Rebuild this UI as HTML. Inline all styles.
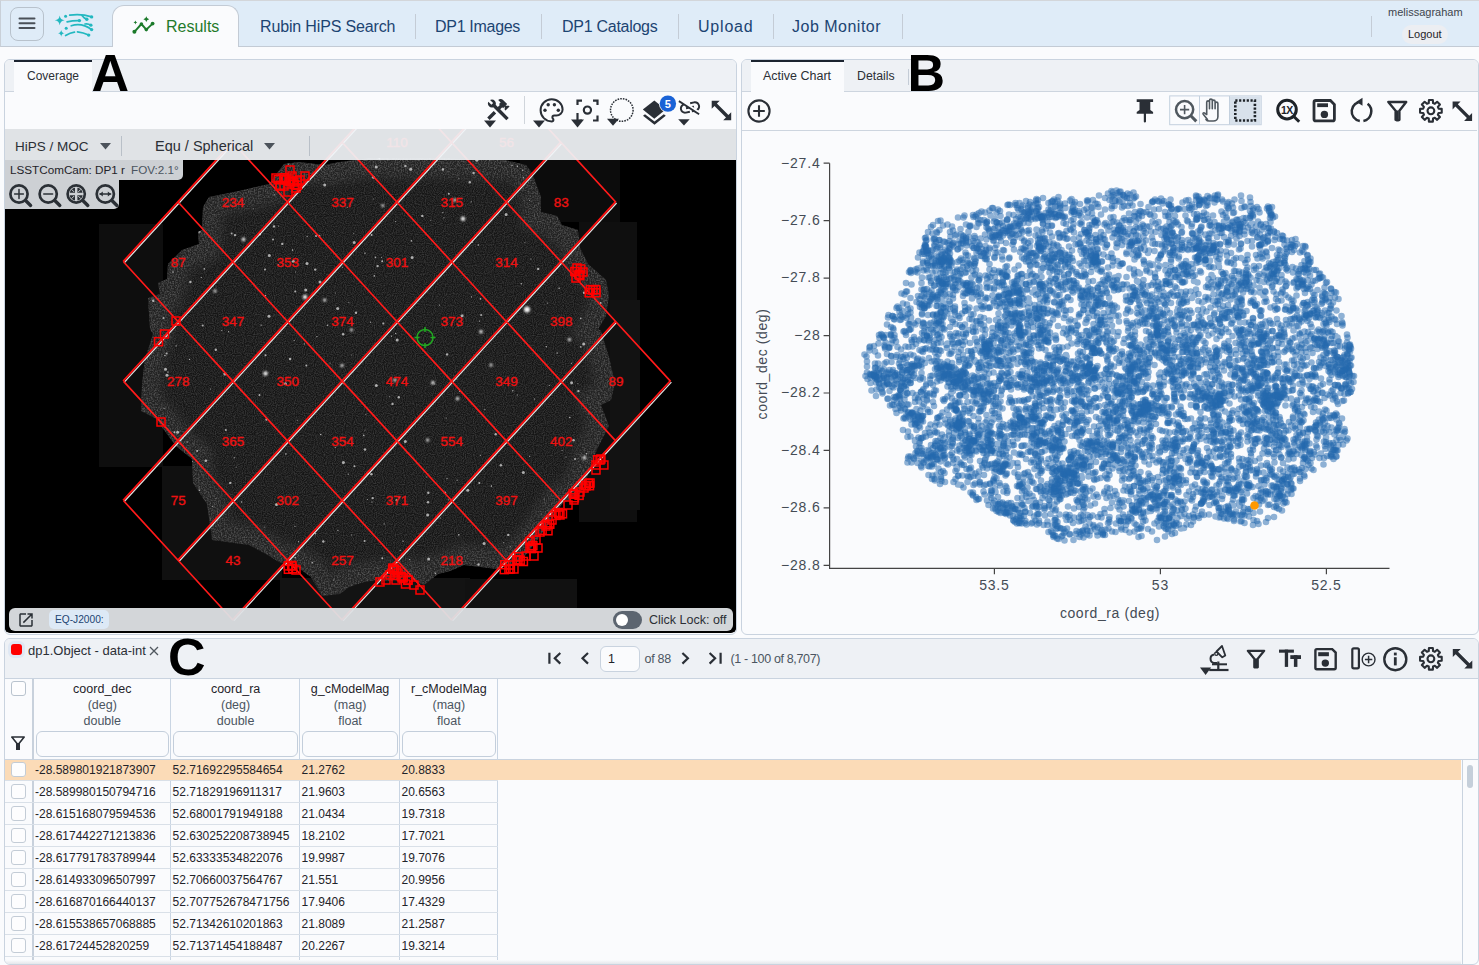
<!DOCTYPE html>
<html><head><meta charset="utf-8">
<style>
*{box-sizing:border-box}
html,body{margin:0;padding:0}
body{width:1479px;height:965px;position:relative;overflow:hidden;background:#fafbfd;font-family:"Liberation Sans",sans-serif;color:#222}
.a{position:absolute}
svg{display:block}
.tbtxt{font-size:16px;color:#1c4472;white-space:nowrap}
.sep{position:absolute;width:1px;background:#c4ccd6}
.panel{position:absolute;border:1px solid #c9d3df;border-radius:6px;background:#fafbfd;overflow:hidden}
.tabbar{position:absolute;left:0;top:0;right:0;height:32px;background:#eef1f5;border-bottom:1px solid #cdd5df}
.tab{position:absolute;top:0;height:32px;background:#fafbfd;border-top:2px solid #1c2430;font-size:13px;color:#2b2f35;white-space:nowrap}
.big{position:absolute;font-weight:bold;font-size:52px;color:#000;line-height:1}
.ico{position:absolute;fill:#2a2f36}
.cell{position:absolute;font-size:12px;color:#1f2329;white-space:nowrap}

</style></head><body>
<div class="a" style="left:0;top:0;width:1479px;height:47px;background:#dfecf8;border-top:1px solid #d3d6da;border-left:1px solid #c9d0d8;border-bottom:1px solid #c3cbd5"></div>
<div class="a" style="left:10px;top:7px;width:34px;height:34px;border:1px solid #b8c2cc;border-radius:8px"></div>
<svg class="a" style="left:18px;top:16px" width="18" height="14" viewBox="0 0 18 14"><g stroke="#4a5058" stroke-width="2" stroke-linecap="round"><line x1="1.5" y1="2.5" x2="16.5" y2="2.5"/><line x1="1.5" y1="7.2" x2="16.5" y2="7.2"/><line x1="1.5" y1="12" x2="16.5" y2="12"/></g></svg>
<!-- logo -->
<svg class="a" style="left:50px;top:8px" width="50" height="34" viewBox="50 8 50 34"><g fill="none" stroke="#22b8c0" stroke-width="1.7" stroke-linecap="round">
<path d="M69.7 15.1C76 14.2 84 14.3 91.6 16.9"/><path d="M82 15.4C83.5 17.5 85 18.6 86.8 19.2"/><path d="M67.1 21.8C71 20.9 75 20.5 79.4 20.6"/><path d="M71.2 25.8C78 23.6 85 24.8 91.6 29.6"/><path d="M85 24C87 23.5 89 24 90.9 25.2"/><path d="M65.6 35.5C68.5 33.8 71.5 32.6 74.5 32.2"/><path d="M77.5 31.8C81.5 32.2 85.5 33.5 88.7 35.1"/></g>
<g fill="#22b8c0"><circle cx="91.6" cy="16.9" r="1.7"/><circle cx="86.8" cy="19.2" r="1.7"/><circle cx="79.4" cy="20.6" r="1.7"/><circle cx="91.6" cy="29.6" r="1.7"/><circle cx="90.9" cy="25.2" r="1.6"/><circle cx="88.7" cy="35.1" r="1.7"/><circle cx="65.6" cy="16.3" r="1.5"/><circle cx="66.2" cy="28.2" r="1.5"/>
<path d="M59.70 15.40Q60.29 19.71 64.60 20.30Q60.29 20.89 59.70 25.20Q59.11 20.89 54.80 20.30Q59.11 19.71 59.70 15.40z"/><path d="M61.20 29.90Q61.61 32.89 64.60 33.30Q61.61 33.71 61.20 36.70Q60.79 33.71 57.80 33.30Q60.79 32.89 61.20 29.90z"/></g></svg>
<!-- Results tab -->
<div class="a" style="left:112px;top:5px;width:127px;height:42px;background:#fafbfd;border:1px solid #c3cbd5;border-bottom:none;border-radius:12px 12px 0 0"></div>
<svg class="a" style="left:128px;top:14px" width="30" height="22" viewBox="128 14 30 22"><path d="M134.4 31.8L141.4 24L146.3 29.6L152.6 23.6" fill="none" stroke="#1b7a2a" stroke-width="1.9" stroke-linejoin="round"/>
<g fill="#1b7a2a"><circle cx="134.4" cy="31.8" r="2"/><circle cx="141.4" cy="24" r="1.8"/><circle cx="146.3" cy="29.6" r="1.8"/><circle cx="152.6" cy="23.6" r="1.9"/><path d="M146.30 16.30Q146.65 18.85 149.20 19.20Q146.65 19.55 146.30 22.10Q145.95 19.55 143.40 19.20Q145.95 18.85 146.30 16.30z"/><path d="M135.40 20.60Q135.63 22.27 137.30 22.50Q135.63 22.73 135.40 24.40Q135.17 22.73 133.50 22.50Q135.17 22.27 135.40 20.60z"/></g></svg>
<div class="a tbtxt" style="left:166px;top:18px;color:#1f7a2a">Results</div>
<div class="a tbtxt" style="left:260px;top:18px;letter-spacing:-0.15px">Rubin HiPS Search</div>
<div class="sep" style="left:415px;top:14px;height:25px"></div>
<div class="a tbtxt" style="left:435px;top:18px;letter-spacing:-0.3px">DP1 Images</div>
<div class="sep" style="left:541px;top:14px;height:25px"></div>
<div class="a tbtxt" style="left:562px;top:18px;letter-spacing:-0.27px">DP1 Catalogs</div>
<div class="sep" style="left:678px;top:14px;height:25px"></div>
<div class="a tbtxt" style="left:698px;top:18px;letter-spacing:0.8px">Upload</div>
<div class="sep" style="left:773px;top:14px;height:25px"></div>
<div class="a tbtxt" style="left:792px;top:18px;letter-spacing:0.5px">Job Monitor</div>
<div class="sep" style="left:902px;top:14px;height:25px"></div>
<div class="sep" style="left:1371px;top:16px;height:21px"></div>
<div class="a" style="left:1388px;top:6px;font-size:11px;color:#3e454d">melissagraham</div>
<div class="a" style="left:1402px;top:25px;width:46px;height:19px;border-radius:10px;background:#eceef2"></div>
<div class="a" style="left:1408px;top:28px;font-size:11px;color:#1f2329">Logout</div>
<div class="panel" style="left:4px;top:59px;width:733px;height:576px">
 <div class="tabbar"></div>
 <div class="tab" style="left:9px;width:78px"><span class="a" style="left:13px;top:7px;font-size:12px">Coverage</span></div>
 <div class="a" style="left:0;top:69px;width:731px;height:504px;background:#000;border-radius:0 0 5px 5px;overflow:hidden"><svg class="a" style="left:0;top:0" width="731" height="504" viewBox="5 129 731 504"><defs><filter id="nz" x="0" y="0" width="100%" height="100%"><feTurbulence type="fractalNoise" baseFrequency="0.9" numOctaves="1" seed="4"/><feColorMatrix values="0 0 0 0 1  0 0 0 0 1  0 0 0 0 1  0 0 0 -2.2 1.45"/></filter><filter id="sb"><feGaussianBlur stdDeviation="0.35"/></filter><filter id="gb" x="-2" y="-2" width="5" height="5"><feGaussianBlur stdDeviation="1.1"/></filter><filter id="bl"><feGaussianBlur stdDeviation="5"/></filter><filter id="nz2" x="0" y="0" width="100%" height="100%"><feTurbulence type="fractalNoise" baseFrequency="0.7" numOctaves="2" seed="9"/><feColorMatrix values="0 0 0 0 1  0 0 0 0 1  0 0 0 0 1  0 0 0 -2.5 1.55"/></filter><clipPath id="fc"><path d="M203 207 209 197 219 195 239 191 269 184 284 164 299 162 324 165 340 162 370 158 445 158 470 160 505 160 526 165 532 173 541 197 541 212 557 216 562 225 578 230 580 248 588 264 606 280 609 295 606 316 598 329 601 331 609 357 615 383 611 400 601 405 609 426 598 447 593 460 588 475 580 494 562 504 541 535 521 561 497 569 464 565 450 571 438 574 424 585 409 578 391 581 377 580 364 582 349 587 340 594 322 596 311 577 300 569 279 562 266 554 249 545 212 540 210 525 207 504 193 483 192 459 176 446 155 418 141 411 142 384 145 359 153 334 150 329 148 298 160 294 158 283 167 279 168 264 182 250 199 244 198 232 202 230z"/></clipPath></defs><rect x="5" y="129" width="731" height="503" fill="#000"/><rect x="99" y="224" width="64" height="243" fill="#0e0e0e"/><rect x="162" y="466" width="120" height="114" fill="#101010"/><rect x="280" y="578" width="190" height="30" fill="#131313"/><rect x="465" y="579" width="112" height="29" fill="#111"/><rect x="579" y="222" width="58" height="300" fill="#0f0f0f"/><rect x="520" y="160" width="100" height="62" fill="#0c0c0c"/><rect x="610" y="300" width="30" height="210" fill="#121212"/><path d="M203 207 209 197 219 195 239 191 269 184 284 164 299 162 324 165 340 162 370 158 445 158 470 160 505 160 526 165 532 173 541 197 541 212 557 216 562 225 578 230 580 248 588 264 606 280 609 295 606 316 598 329 601 331 609 357 615 383 611 400 601 405 609 426 598 447 593 460 588 475 580 494 562 504 541 535 521 561 497 569 464 565 450 571 438 574 424 585 409 578 391 581 377 580 364 582 349 587 340 594 322 596 311 577 300 569 279 562 266 554 249 545 212 540 210 525 207 504 193 483 192 459 176 446 155 418 141 411 142 384 145 359 153 334 150 329 148 298 160 294 158 283 167 279 168 264 182 250 199 244 198 232 202 230z" fill="#151515"/><mask id="bm"><path d="M203 207 209 197 219 195 239 191 269 184 284 164 299 162 324 165 340 162 370 158 445 158 470 160 505 160 526 165 532 173 541 197 541 212 557 216 562 225 578 230 580 248 588 264 606 280 609 295 606 316 598 329 601 331 609 357 615 383 611 400 601 405 609 426 598 447 593 460 588 475 580 494 562 504 541 535 521 561 497 569 464 565 450 571 438 574 424 585 409 578 391 581 377 580 364 582 349 587 340 594 322 596 311 577 300 569 279 562 266 554 249 545 212 540 210 525 207 504 193 483 192 459 176 446 155 418 141 411 142 384 145 359 153 334 150 329 148 298 160 294 158 283 167 279 168 264 182 250 199 244 198 232 202 230z" fill="none" stroke="#fff" stroke-width="40" filter="url(#bl)"/></mask><g clip-path="url(#fc)"><rect x="5" y="129" width="731" height="503" filter="url(#nz)" opacity="0.16"/><g mask="url(#bm)"><rect x="5" y="129" width="731" height="503" fill="#222"/><rect x="5" y="129" width="731" height="503" filter="url(#nz2)" opacity="0.22"/></g></g><g fill="#ddd" clip-path="url(#fc)" opacity="0.75" filter="url(#sb)"><circle cx="259.5" cy="394.9" r="1.0"/><circle cx="571.3" cy="363.3" r="0.6"/><circle cx="428.6" cy="559.0" r="1.5"/><circle cx="269.3" cy="255.4" r="1.5"/><circle cx="398.8" cy="397.3" r="1.2"/><circle cx="444.0" cy="217.8" r="0.6"/><circle cx="549.3" cy="385.4" r="0.5"/><circle cx="458.8" cy="178.8" r="0.5"/><circle cx="288.6" cy="164.0" r="0.8"/><circle cx="367.5" cy="473.5" r="1.2"/><circle cx="478.5" cy="564.5" r="1.2"/><circle cx="484.9" cy="409.6" r="0.6"/><circle cx="554.3" cy="193.9" r="0.6"/><circle cx="377.6" cy="266.1" r="1.2"/><circle cx="508.3" cy="534.9" r="1.2"/><circle cx="383.3" cy="323.6" r="1.0"/><circle cx="395.7" cy="333.4" r="0.7"/><circle cx="565.9" cy="456.9" r="0.5"/><circle cx="543.9" cy="595.9" r="0.6"/><circle cx="471.4" cy="296.9" r="0.6"/><circle cx="478.4" cy="245.0" r="0.8"/><circle cx="281.1" cy="178.6" r="1.5"/><circle cx="190.7" cy="510.3" r="1.2"/><circle cx="562.7" cy="159.1" r="1.2"/><circle cx="503.6" cy="542.7" r="0.5"/><circle cx="428.3" cy="492.7" r="1.2"/><circle cx="480.5" cy="298.9" r="0.8"/><circle cx="382.5" cy="599.3" r="0.8"/><circle cx="153.3" cy="198.7" r="0.5"/><circle cx="586.5" cy="587.1" r="0.8"/><circle cx="430.8" cy="220.3" r="0.5"/><circle cx="600.7" cy="302.9" r="1.0"/><circle cx="591.0" cy="553.5" r="1.2"/><circle cx="323.3" cy="541.5" r="1.2"/><circle cx="446.2" cy="418.0" r="0.6"/><circle cx="435.3" cy="573.3" r="0.8"/><circle cx="348.3" cy="474.1" r="0.7"/><circle cx="580.8" cy="346.9" r="0.8"/><circle cx="389.7" cy="396.8" r="0.5"/><circle cx="512.7" cy="594.4" r="1.0"/><circle cx="159.2" cy="427.1" r="0.6"/><circle cx="177.6" cy="432.3" r="1.5"/><circle cx="312.3" cy="562.8" r="0.8"/><circle cx="489.5" cy="160.0" r="0.5"/><circle cx="589.2" cy="159.6" r="1.0"/><circle cx="265.5" cy="355.3" r="1.0"/><circle cx="231.6" cy="233.4" r="1.0"/><circle cx="538.2" cy="268.9" r="1.2"/><circle cx="198.2" cy="515.9" r="0.6"/><circle cx="292.6" cy="250.1" r="0.8"/><circle cx="259.8" cy="234.3" r="1.2"/><circle cx="448.8" cy="193.7" r="1.0"/><circle cx="586.6" cy="453.7" r="0.7"/><circle cx="351.7" cy="535.0" r="0.6"/><circle cx="186.8" cy="483.9" r="0.7"/><circle cx="557.1" cy="353.0" r="0.7"/><circle cx="512.0" cy="165.3" r="0.7"/><circle cx="295.0" cy="526.3" r="0.6"/><circle cx="547.3" cy="303.0" r="0.6"/><circle cx="520.9" cy="305.4" r="0.6"/><circle cx="343.8" cy="383.3" r="0.8"/><circle cx="363.8" cy="435.4" r="0.8"/><circle cx="343.1" cy="334.3" r="1.2"/><circle cx="221.8" cy="152.1" r="1.2"/><circle cx="407.1" cy="593.6" r="0.7"/><circle cx="164.9" cy="355.5" r="0.8"/><circle cx="400.2" cy="550.4" r="0.6"/><circle cx="544.7" cy="586.9" r="0.6"/><circle cx="522.7" cy="170.3" r="0.7"/><circle cx="562.4" cy="554.9" r="0.5"/><circle cx="156.0" cy="485.4" r="0.6"/><circle cx="381.5" cy="257.6" r="0.5"/><circle cx="391.5" cy="336.2" r="0.6"/><circle cx="307.0" cy="263.6" r="1.5"/><circle cx="523.3" cy="177.6" r="0.7"/><circle cx="240.8" cy="390.6" r="0.6"/><circle cx="228.8" cy="506.3" r="0.6"/><circle cx="528.8" cy="153.4" r="1.2"/><circle cx="173.0" cy="272.1" r="0.8"/><circle cx="434.3" cy="383.9" r="0.5"/><circle cx="367.5" cy="499.4" r="0.5"/><circle cx="544.2" cy="498.9" r="0.5"/><circle cx="207.3" cy="180.8" r="0.5"/><circle cx="543.0" cy="188.8" r="1.5"/><circle cx="295.3" cy="291.6" r="1.0"/><circle cx="327.5" cy="325.3" r="0.8"/><circle cx="316.0" cy="236.0" r="1.0"/><circle cx="347.2" cy="207.4" r="0.5"/><circle cx="479.4" cy="321.1" r="0.6"/><circle cx="410.7" cy="169.3" r="1.5"/><circle cx="428.0" cy="502.2" r="1.2"/><circle cx="442.9" cy="169.5" r="1.2"/><circle cx="174.4" cy="432.3" r="1.0"/><circle cx="343.4" cy="462.4" r="1.5"/><circle cx="158.2" cy="248.4" r="0.8"/><circle cx="469.8" cy="182.2" r="1.2"/><circle cx="253.2" cy="208.7" r="0.5"/><circle cx="580.8" cy="318.4" r="0.8"/><circle cx="205.9" cy="460.7" r="1.2"/><circle cx="457.1" cy="480.2" r="0.6"/><circle cx="523.3" cy="472.5" r="1.5"/><circle cx="216.0" cy="498.4" r="0.5"/><circle cx="392.5" cy="403.9" r="1.2"/><circle cx="232.4" cy="160.6" r="0.6"/><circle cx="161.7" cy="201.8" r="1.5"/><circle cx="534.6" cy="578.6" r="0.8"/><circle cx="517.4" cy="166.3" r="0.7"/><circle cx="199.1" cy="487.0" r="0.5"/><circle cx="403.1" cy="541.2" r="0.6"/><circle cx="530.9" cy="259.0" r="0.6"/><circle cx="447.1" cy="354.4" r="1.2"/><circle cx="266.3" cy="419.8" r="1.0"/><circle cx="406.1" cy="584.8" r="1.2"/><circle cx="380.1" cy="587.9" r="1.2"/><circle cx="538.1" cy="585.2" r="1.2"/><circle cx="467.8" cy="490.3" r="1.5"/><circle cx="221.8" cy="330.5" r="0.6"/><circle cx="224.8" cy="374.1" r="1.5"/><circle cx="571.6" cy="382.8" r="1.5"/><circle cx="419.8" cy="536.1" r="0.6"/><circle cx="273.0" cy="239.6" r="1.0"/><circle cx="580.0" cy="533.2" r="0.8"/><circle cx="458.8" cy="534.9" r="0.8"/><circle cx="559.1" cy="288.3" r="0.8"/><circle cx="370.6" cy="322.2" r="0.6"/><circle cx="412.1" cy="257.5" r="1.5"/><circle cx="506.1" cy="214.6" r="1.5"/><circle cx="472.7" cy="242.6" r="0.5"/><circle cx="371.4" cy="474.3" r="1.2"/><circle cx="510.2" cy="546.8" r="0.5"/><circle cx="365.0" cy="253.3" r="0.7"/><circle cx="448.2" cy="499.8" r="0.6"/><circle cx="591.0" cy="534.2" r="0.7"/><circle cx="559.5" cy="499.1" r="0.6"/><circle cx="236.1" cy="467.1" r="0.5"/><circle cx="563.9" cy="264.8" r="0.5"/><circle cx="294.2" cy="340.5" r="0.6"/><circle cx="204.3" cy="268.9" r="0.8"/><circle cx="166.6" cy="353.6" r="1.0"/><circle cx="153.2" cy="300.7" r="1.2"/><circle cx="324.7" cy="185.1" r="1.5"/><circle cx="329.8" cy="395.0" r="0.6"/><circle cx="556.3" cy="184.3" r="1.2"/><circle cx="201.8" cy="549.2" r="0.8"/><circle cx="194.6" cy="573.6" r="1.0"/><circle cx="462.1" cy="315.8" r="1.5"/><circle cx="285.9" cy="454.1" r="0.8"/><circle cx="199.3" cy="575.0" r="1.0"/><circle cx="459.5" cy="391.3" r="0.6"/><circle cx="456.8" cy="378.9" r="0.5"/><circle cx="480.3" cy="455.3" r="0.6"/><circle cx="447.1" cy="478.6" r="0.6"/><circle cx="232.4" cy="550.5" r="1.5"/><circle cx="206.6" cy="569.3" r="0.6"/><circle cx="573.6" cy="440.2" r="1.2"/><circle cx="405.3" cy="441.4" r="1.5"/><circle cx="371.9" cy="502.0" r="0.6"/><circle cx="199.4" cy="231.6" r="1.2"/><circle cx="315.2" cy="269.6" r="1.2"/><circle cx="174.6" cy="211.4" r="1.5"/><circle cx="382.2" cy="261.2" r="1.0"/><circle cx="552.6" cy="575.3" r="1.5"/><circle cx="399.1" cy="497.3" r="1.0"/><circle cx="379.1" cy="598.0" r="0.6"/><circle cx="274.4" cy="194.8" r="0.6"/><circle cx="409.6" cy="559.5" r="0.6"/><circle cx="235.0" cy="235.1" r="1.2"/><circle cx="458.3" cy="326.0" r="0.6"/><circle cx="422.3" cy="215.9" r="1.2"/><circle cx="517.2" cy="395.1" r="0.6"/><circle cx="411.4" cy="240.9" r="0.8"/><circle cx="320.0" cy="281.9" r="1.5"/><circle cx="560.0" cy="577.2" r="1.2"/><circle cx="295.3" cy="557.8" r="0.8"/><circle cx="441.5" cy="589.6" r="0.8"/><circle cx="562.0" cy="450.4" r="0.5"/><circle cx="426.6" cy="477.1" r="0.5"/><circle cx="199.4" cy="490.2" r="0.7"/><circle cx="376.3" cy="385.6" r="1.5"/><circle cx="241.5" cy="502.0" r="0.7"/><circle cx="167.0" cy="375.2" r="1.5"/><circle cx="201.3" cy="277.5" r="0.6"/><circle cx="212.4" cy="506.6" r="0.5"/><circle cx="161.7" cy="428.3" r="0.6"/><circle cx="379.4" cy="158.5" r="1.0"/><circle cx="298.6" cy="541.7" r="0.6"/><circle cx="187.0" cy="527.6" r="0.5"/><circle cx="479.3" cy="482.9" r="1.0"/><circle cx="609.0" cy="242.3" r="0.6"/><circle cx="546.3" cy="346.7" r="0.7"/><circle cx="373.1" cy="199.1" r="0.5"/><circle cx="337.9" cy="530.4" r="0.6"/><circle cx="330.1" cy="363.0" r="0.6"/><circle cx="397.2" cy="340.0" r="1.5"/><circle cx="290.1" cy="359.0" r="1.2"/><circle cx="351.7" cy="354.9" r="0.5"/><circle cx="481.1" cy="315.1" r="1.0"/><circle cx="356.0" cy="312.7" r="1.2"/><circle cx="253.0" cy="151.2" r="0.7"/><circle cx="269.0" cy="316.3" r="1.5"/><circle cx="395.6" cy="221.6" r="0.5"/><circle cx="228.6" cy="331.7" r="0.6"/><circle cx="442.9" cy="212.7" r="0.6"/><circle cx="353.7" cy="233.2" r="0.5"/><circle cx="335.4" cy="293.0" r="0.5"/><circle cx="473.6" cy="173.0" r="1.2"/><circle cx="168.0" cy="372.0" r="0.7"/><circle cx="261.1" cy="325.1" r="0.7"/><circle cx="225.8" cy="430.1" r="1.0"/><circle cx="569.8" cy="417.5" r="0.8"/><circle cx="276.5" cy="504.5" r="1.5"/><circle cx="513.1" cy="582.7" r="1.5"/><circle cx="265.0" cy="269.6" r="1.0"/><circle cx="439.4" cy="305.1" r="0.6"/><circle cx="176.1" cy="345.9" r="0.6"/><circle cx="422.4" cy="151.6" r="0.5"/><circle cx="463.2" cy="158.6" r="0.5"/><circle cx="371.6" cy="235.1" r="1.0"/><circle cx="242.3" cy="588.2" r="1.5"/><circle cx="306.4" cy="365.4" r="1.0"/><circle cx="582.4" cy="165.4" r="0.8"/><circle cx="495.7" cy="434.2" r="1.2"/><circle cx="190.4" cy="282.0" r="1.2"/><circle cx="202.7" cy="325.4" r="1.0"/><circle cx="396.8" cy="500.3" r="1.2"/><circle cx="230.3" cy="482.9" r="1.2"/><circle cx="534.4" cy="399.0" r="0.6"/><circle cx="316.9" cy="336.6" r="0.7"/><circle cx="354.5" cy="466.2" r="1.0"/><circle cx="274.0" cy="226.4" r="1.2"/><circle cx="586.7" cy="169.2" r="0.6"/><circle cx="476.9" cy="160.3" r="1.5"/><circle cx="192.3" cy="461.3" r="0.6"/><circle cx="297.2" cy="420.3" r="0.5"/><circle cx="554.1" cy="542.5" r="1.5"/><circle cx="364.6" cy="540.9" r="1.0"/><circle cx="608.6" cy="150.7" r="0.7"/><circle cx="333.7" cy="580.1" r="0.6"/><circle cx="305.7" cy="290.1" r="1.5"/><circle cx="187.2" cy="442.1" r="0.7"/><circle cx="466.6" cy="589.9" r="0.6"/><circle cx="419.4" cy="155.2" r="0.7"/><circle cx="282.3" cy="243.9" r="1.2"/><circle cx="382.3" cy="558.2" r="1.0"/><circle cx="512.8" cy="390.8" r="0.7"/><circle cx="365.0" cy="430.1" r="0.5"/><circle cx="529.7" cy="200.6" r="0.5"/><circle cx="545.1" cy="195.6" r="0.8"/><circle cx="189.5" cy="359.4" r="0.7"/><circle cx="529.7" cy="456.3" r="0.6"/><circle cx="445.2" cy="492.6" r="1.0"/><circle cx="335.3" cy="447.5" r="0.6"/><circle cx="284.3" cy="575.3" r="1.5"/><circle cx="524.8" cy="242.7" r="0.5"/><circle cx="363.5" cy="477.6" r="0.6"/><circle cx="307.1" cy="236.4" r="0.6"/><circle cx="575.0" cy="458.9" r="1.0"/><circle cx="344.5" cy="441.8" r="0.7"/><circle cx="264.9" cy="527.1" r="0.5"/><circle cx="304.2" cy="343.9" r="0.6"/><circle cx="265.4" cy="295.5" r="0.7"/><circle cx="484.1" cy="543.6" r="1.5"/><circle cx="578.4" cy="391.1" r="1.2"/><circle cx="319.2" cy="236.0" r="1.2"/><circle cx="372.7" cy="498.1" r="1.2"/><circle cx="365.9" cy="414.4" r="0.5"/><circle cx="284.3" cy="570.4" r="0.6"/><circle cx="560.5" cy="162.7" r="0.6"/><circle cx="285.4" cy="383.8" r="1.5"/><circle cx="168.7" cy="485.3" r="0.8"/><circle cx="376.2" cy="166.9" r="1.5"/><circle cx="491.4" cy="486.1" r="0.8"/><circle cx="215.8" cy="349.8" r="1.2"/><circle cx="354.2" cy="242.5" r="1.5"/><circle cx="500.9" cy="465.2" r="1.2"/><circle cx="600.6" cy="544.3" r="1.0"/><circle cx="583.7" cy="344.1" r="1.5"/><circle cx="368.1" cy="599.4" r="0.7"/><circle cx="315.5" cy="533.7" r="0.8"/><circle cx="163.5" cy="318.1" r="1.0"/><circle cx="521.3" cy="283.8" r="0.7"/><circle cx="577.9" cy="383.8" r="0.5"/><circle cx="210.5" cy="388.9" r="0.5"/><circle cx="226.2" cy="172.6" r="0.7"/><circle cx="602.5" cy="506.9" r="1.0"/><circle cx="600.5" cy="503.5" r="0.5"/><circle cx="375.5" cy="257.4" r="0.8"/><circle cx="348.9" cy="302.2" r="0.5"/><circle cx="427.6" cy="515.1" r="1.5"/><circle cx="293.3" cy="261.3" r="1.5"/><circle cx="342.4" cy="267.2" r="0.5"/><circle cx="163.5" cy="166.8" r="0.6"/><circle cx="569.8" cy="513.9" r="0.7"/><circle cx="588.6" cy="484.6" r="1.2"/><circle cx="384.1" cy="523.9" r="0.6"/><circle cx="278.6" cy="225.9" r="0.5"/><circle cx="373.5" cy="177.2" r="1.5"/><circle cx="365.0" cy="449.5" r="1.2"/><circle cx="320.7" cy="434.5" r="0.8"/><circle cx="234.2" cy="457.7" r="0.6"/><circle cx="337.7" cy="308.4" r="1.5"/><circle cx="278.1" cy="265.0" r="0.8"/><circle cx="591.3" cy="219.9" r="1.0"/><circle cx="214.2" cy="167.0" r="1.5"/><circle cx="541.5" cy="522.4" r="0.8"/><circle cx="164.1" cy="408.5" r="0.6"/><circle cx="374.3" cy="275.9" r="0.8"/><circle cx="197.1" cy="450.9" r="1.0"/><circle cx="165.5" cy="369.2" r="1.5"/><circle cx="239.7" cy="564.3" r="0.6"/><circle cx="450.8" cy="573.7" r="1.2"/><circle cx="295.5" cy="271.9" r="0.5"/><circle cx="584.1" cy="292.8" r="1.2"/><circle cx="405.4" cy="166.0" r="1.2"/><circle cx="265.1" cy="591.1" r="0.6"/><circle cx="377.8" cy="580.6" r="0.6"/><circle cx="471.2" cy="201.8" r="0.6"/><circle cx="440.3" cy="518.0" r="0.5"/><circle cx="583.4" cy="588.5" r="0.6"/><circle cx="348.4" cy="592.8" r="1.5"/></g><g fill="#f4f4f4" filter="url(#gb)"><circle cx="305.0" cy="297.0" r="2.2"/><circle cx="324.6" cy="300.0" r="1.6"/><circle cx="265.5" cy="373.5" r="2.2"/><circle cx="342.0" cy="365.5" r="1.6"/><circle cx="351.5" cy="330.0" r="1.4"/><circle cx="527.0" cy="309.5" r="3.0"/><circle cx="481.0" cy="331.7" r="1.8"/><circle cx="457.5" cy="398.7" r="1.6"/><circle cx="432.9" cy="382.8" r="1.8"/><circle cx="427.6" cy="440.0" r="1.5"/><circle cx="569.4" cy="339.6" r="1.6"/><circle cx="584.4" cy="457.7" r="1.8"/><circle cx="491.0" cy="365.0" r="1.5"/><circle cx="463.0" cy="218.7" r="2.2"/><circle cx="382.8" cy="205.7" r="1.4"/><circle cx="243.5" cy="239.4" r="1.8"/><circle cx="215.0" cy="291.0" r="1.5"/><circle cx="455.0" cy="200.0" r="1.6"/><circle cx="395.0" cy="380.0" r="1.6"/></g><path d="M562.0 501.5L616.6 441.8M124.3 382.1L179.1 322.4M179.1 203.0L233.8 143.3M452.6 262.7L507.2 203.0M616.6 441.8L671.4 382.1M452.6 143.3L507.2 83.6M124.3 501.5L179.1 441.8M452.6 620.9L507.2 561.2M507.2 441.8L562.0 382.1M233.8 382.1L288.5 322.4M507.2 561.2L562.0 501.5M343.1 501.5L397.9 441.8M179.1 322.4L233.8 262.7M562.0 382.1L616.6 322.4M397.9 561.2L452.6 501.5M288.5 441.8L343.1 382.1M233.8 262.7L288.5 203.0M233.8 501.5L288.5 441.8M452.6 501.5L507.2 441.8M343.1 382.1L397.9 322.4M124.3 262.7L179.1 203.0M562.0 262.7L616.6 203.0M179.1 441.8L233.8 382.1M288.5 203.0L343.1 143.3M179.1 561.2L233.8 501.5M452.6 382.1L507.2 322.4M343.1 262.7L397.9 203.0M397.9 322.4L452.6 262.7M397.9 441.8L452.6 382.1M507.2 203.0L562.0 143.3M343.1 143.3L397.9 83.6M233.8 620.9L288.5 561.2M288.5 322.4L343.1 262.7M288.5 561.2L343.1 501.5M507.2 322.4L562.0 262.7M397.9 203.0L452.6 143.3M343.1 620.9L397.9 561.2" stroke="#f4f4f4" stroke-width="1.3" fill="none" opacity="0.9"/><path d="M560.8 500.4L615.4 440.7M123.1 381.0L177.9 321.3M177.9 201.9L232.6 142.2M451.4 261.6L506.1 201.9M615.4 440.7L670.1 381.0M451.4 142.2L506.1 82.5M123.1 500.4L177.9 440.7M451.4 619.8L506.1 560.1M506.1 440.7L560.8 381.0M232.6 381.0L287.3 321.3M506.1 560.1L560.8 500.4M341.9 500.4L396.7 440.7M177.9 321.3L232.6 261.6M560.8 381.0L615.4 321.3M396.7 560.1L451.4 500.4M287.3 440.7L341.9 381.0M232.6 261.6L287.3 201.9M232.6 500.4L287.3 440.7M451.4 500.4L506.1 440.7M341.9 381.0L396.7 321.3M123.1 261.6L177.9 201.9M560.8 261.6L615.4 201.9M177.9 440.7L232.6 381.0M287.3 201.9L341.9 142.2M177.9 560.1L232.6 500.4M451.4 381.0L506.1 321.3M341.9 261.6L396.7 201.9M396.7 321.3L451.4 261.6M396.7 440.7L451.4 381.0M506.1 201.9L560.8 142.2M341.9 142.2L396.7 82.5M232.6 619.8L287.3 560.1M287.3 321.3L341.9 261.6M287.3 560.1L341.9 500.4M506.1 321.3L560.8 261.6M396.7 201.9L451.4 142.2M341.9 619.8L396.7 560.1" stroke="#ff1010" stroke-width="1.8" fill="none"/><path d="M397.1 321.7L451.8 381.4M506.5 82.9L561.2 142.6M287.7 202.3L342.4 262.0M506.5 321.7L561.2 381.4M342.4 262.0L397.1 321.7M233.0 142.6L287.7 202.3M178.3 560.5L233.0 620.2M451.8 381.4L506.5 441.1M561.2 142.6L615.9 202.3M451.8 262.0L506.5 321.7M397.1 441.1L451.8 500.8M615.9 321.7L670.6 381.4M287.7 321.7L342.4 381.4M397.1 82.9L451.8 142.6M506.5 202.3L561.2 262.0M123.6 500.8L178.3 560.5M451.8 142.6L506.5 202.3M287.7 560.5L342.4 620.2M178.3 321.7L233.0 381.4M123.6 381.4L178.3 441.1M397.1 560.5L451.8 620.2M397.1 202.3L451.8 262.0M233.0 262.0L287.7 321.7M287.7 441.1L342.4 500.8M342.4 381.4L397.1 441.1M178.3 202.3L233.0 262.0M233.0 500.8L287.7 560.5M451.8 500.8L506.5 560.5M506.5 441.1L561.2 500.8M123.6 262.0L178.3 321.7M233.0 381.4L287.7 441.1M561.2 262.0L615.9 321.7M342.4 500.8L397.1 560.5M178.3 441.1L233.0 500.8M561.2 381.4L615.9 441.1M342.4 142.6L397.1 202.3" stroke="#ff1a1a" stroke-width="1.7" fill="none"/><g font-family="Liberation Sans" font-size="13.5" fill="#ee1111" stroke="#ee1111" stroke-width="0.35" text-anchor="middle"><text x="233.0" y="206.9">234</text><text x="342.4" y="206.9">337</text><text x="451.8" y="206.9">315</text><text x="561.2" y="206.9">83</text><text x="178.3" y="266.6">87</text><text x="287.7" y="266.6">353</text><text x="397.1" y="266.6">301</text><text x="506.5" y="266.6">314</text><text x="233.0" y="326.3">347</text><text x="342.4" y="326.3">374</text><text x="451.8" y="326.3">373</text><text x="561.2" y="326.3">398</text><text x="178.3" y="386.0">278</text><text x="287.7" y="386.0">350</text><text x="397.1" y="386.0">474</text><text x="506.5" y="386.0">349</text><text x="615.9" y="386.0">89</text><text x="233.0" y="445.7">365</text><text x="342.4" y="445.7">354</text><text x="451.8" y="445.7">554</text><text x="561.2" y="445.7">402</text><text x="178.3" y="505.4">75</text><text x="287.7" y="505.4">302</text><text x="397.1" y="505.4">371</text><text x="506.5" y="505.4">397</text><text x="233.0" y="565.1">43</text><text x="342.4" y="565.1">257</text><text x="451.8" y="565.1">218</text><text x="397.1" y="147.2">110</text><text x="506.5" y="147.2">56</text></g><g fill="none" stroke="#f00" stroke-width="1.5"><rect x="282.0" y="176.0" width="8" height="8"/><rect x="288.0" y="172.0" width="8" height="8"/><rect x="276.0" y="182.0" width="8" height="8"/><rect x="292.0" y="184.0" width="8" height="8"/><rect x="284.0" y="188.0" width="8" height="8"/><rect x="296.0" y="176.0" width="8" height="8"/><rect x="272.0" y="174.0" width="8" height="8"/><rect x="286.0" y="166.0" width="8" height="8"/><rect x="301.0" y="172.0" width="8" height="8"/><rect x="280.0" y="182.0" width="8" height="8"/><rect x="573.0" y="264.0" width="8" height="8"/><rect x="579.0" y="268.0" width="8" height="8"/><rect x="589.0" y="286.0" width="8" height="8"/><rect x="572.0" y="274.0" width="8" height="8"/><rect x="172.0" y="317.0" width="8" height="8"/><rect x="160.5" y="330.0" width="8" height="8"/><rect x="154.5" y="337.7" width="8" height="8"/><rect x="157.0" y="418.0" width="8" height="8"/><rect x="288.0" y="562.0" width="8" height="8"/><rect x="292.0" y="566.0" width="8" height="8"/><rect x="596.0" y="456.0" width="8" height="8"/><rect x="592.0" y="466.0" width="8" height="8"/><rect x="586.0" y="479.0" width="8" height="8"/><rect x="580.0" y="484.0" width="8" height="8"/><rect x="576.0" y="488.0" width="8" height="8"/><rect x="570.0" y="496.0" width="8" height="8"/><rect x="564.0" y="501.0" width="8" height="8"/><rect x="556.0" y="511.0" width="8" height="8"/><rect x="548.0" y="516.0" width="8" height="8"/><rect x="542.0" y="522.0" width="8" height="8"/><rect x="536.0" y="528.0" width="8" height="8"/><rect x="532.0" y="536.0" width="8" height="8"/><rect x="526.0" y="544.0" width="8" height="8"/><rect x="534.0" y="544.0" width="8" height="8"/><rect x="522.0" y="552.0" width="8" height="8"/><rect x="514.0" y="556.0" width="8" height="8"/><rect x="506.0" y="561.0" width="8" height="8"/><rect x="510.0" y="565.0" width="8" height="8"/><rect x="530.0" y="552.0" width="8" height="8"/><rect x="389.0" y="564.0" width="8" height="8"/><rect x="394.0" y="569.0" width="8" height="8"/><rect x="386.0" y="571.0" width="8" height="8"/><rect x="398.0" y="574.0" width="8" height="8"/><rect x="392.0" y="576.0" width="8" height="8"/><rect x="382.0" y="576.0" width="8" height="8"/><rect x="404.0" y="576.0" width="8" height="8"/><rect x="410.0" y="581.0" width="8" height="8"/><rect x="416.0" y="586.0" width="8" height="8"/><rect x="376.0" y="578.0" width="8" height="8"/><rect x="285.0" y="175.9" width="8" height="8"/><rect x="286.4" y="177.5" width="8" height="8"/><rect x="285.9" y="177.4" width="8" height="8"/><rect x="280.2" y="173.7" width="8" height="8"/><rect x="293.5" y="181.2" width="8" height="8"/><rect x="293.2" y="176.9" width="8" height="8"/><rect x="289.8" y="178.0" width="8" height="8"/><rect x="290.4" y="180.6" width="8" height="8"/><rect x="274.1" y="175.7" width="8" height="8"/><rect x="276.2" y="181.3" width="8" height="8"/><rect x="280.1" y="175.3" width="8" height="8"/><rect x="280.4" y="175.1" width="8" height="8"/><rect x="596.9" y="455.0" width="8" height="8"/><rect x="592.0" y="461.0" width="8" height="8"/><rect x="593.7" y="455.7" width="8" height="8"/><rect x="599.9" y="461.0" width="8" height="8"/><rect x="582.3" y="481.7" width="8" height="8"/><rect x="584.3" y="479.4" width="8" height="8"/><rect x="581.6" y="481.5" width="8" height="8"/><rect x="585.5" y="481.7" width="8" height="8"/><rect x="575.1" y="491.4" width="8" height="8"/><rect x="570.9" y="490.3" width="8" height="8"/><rect x="569.2" y="489.5" width="8" height="8"/><rect x="570.4" y="493.8" width="8" height="8"/><rect x="552.0" y="511.4" width="8" height="8"/><rect x="554.7" y="508.5" width="8" height="8"/><rect x="558.5" y="509.8" width="8" height="8"/><rect x="554.5" y="509.8" width="8" height="8"/><rect x="543.6" y="520.5" width="8" height="8"/><rect x="545.8" y="520.2" width="8" height="8"/><rect x="544.0" y="526.8" width="8" height="8"/><rect x="538.1" y="526.3" width="8" height="8"/><rect x="528.9" y="541.6" width="8" height="8"/><rect x="526.1" y="537.4" width="8" height="8"/><rect x="527.4" y="544.6" width="8" height="8"/><rect x="527.6" y="543.0" width="8" height="8"/><rect x="519.4" y="557.5" width="8" height="8"/><rect x="514.8" y="552.8" width="8" height="8"/><rect x="516.2" y="556.2" width="8" height="8"/><rect x="512.9" y="556.0" width="8" height="8"/><rect x="506.4" y="564.9" width="8" height="8"/><rect x="500.3" y="565.6" width="8" height="8"/><rect x="500.7" y="560.7" width="8" height="8"/><rect x="504.9" y="565.3" width="8" height="8"/><rect x="390.7" y="571.4" width="8" height="8"/><rect x="392.4" y="566.5" width="8" height="8"/><rect x="390.5" y="565.4" width="8" height="8"/><rect x="388.6" y="565.2" width="8" height="8"/><rect x="401.5" y="580.0" width="8" height="8"/><rect x="397.3" y="572.4" width="8" height="8"/><rect x="403.9" y="576.3" width="8" height="8"/><rect x="399.2" y="573.9" width="8" height="8"/><rect x="288.8" y="564.6" width="8" height="8"/><rect x="287.6" y="561.4" width="8" height="8"/><rect x="284.4" y="565.3" width="8" height="8"/><rect x="284.3" y="561.9" width="8" height="8"/><rect x="576.7" y="265.0" width="8" height="8"/><rect x="575.9" y="271.6" width="8" height="8"/><rect x="575.0" y="270.3" width="8" height="8"/><rect x="570.9" y="267.5" width="8" height="8"/><rect x="585.2" y="288.8" width="8" height="8"/><rect x="586.4" y="285.6" width="8" height="8"/><rect x="592.0" y="288.8" width="8" height="8"/><rect x="591.8" y="285.6" width="8" height="8"/></g><g stroke="#22aa22" stroke-width="1.5" fill="none"><circle cx="425" cy="337.5" r="8"/><path d="M425 327v5M425 343v5M414.5 337.5h5M430.5 337.5h5"/></g></svg></div>
 <div class="a" style="left:0;top:69px;width:731px;height:31px;background:rgba(241,244,248,0.93)"></div>
 <div class="a" style="left:10px;top:79px;font-size:13.5px;color:#2b2f35">HiPS / MOC</div>
 <svg class="a" style="left:95px;top:83px" width="11" height="7"><path d="M0 0h11L5.5 6.5z" fill="#4c535b"/></svg>
 <div class="sep" style="left:116px;top:76px;height:20px;background:#b9c0c8"></div>
 <div class="a" style="left:150px;top:78px;font-size:14.5px;color:#2b2f35">Equ / Spherical</div>
 <svg class="a" style="left:259px;top:83px" width="11" height="7"><path d="M0 0h11L5.5 6.5z" fill="#4c535b"/></svg>
 <div class="sep" style="left:304px;top:76px;height:20px;background:#b9c0c8"></div>
 <!-- overlay info -->
 <div class="a" style="left:0;top:100px;width:178px;height:20px;background:#cdd0d4;border-radius:0 0 5px 0"></div>
 <div class="a" style="left:0;top:119px;width:114px;height:30px;background:#cdd0d4;border-radius:0 0 5px 0"></div>
 <div class="a" style="left:5px;top:103px;font-size:11.7px;color:#1f2329;white-space:nowrap">LSSTComCam: DP1 r</div>
 <div class="a" style="left:126px;top:103px;font-size:11.7px;color:#4a545f;white-space:nowrap">FOV:2.1&#176;</div>
 <svg class="a" style="left:3px;top:123px" width="112" height="26" viewBox="0 0 112 26"><g fill="none" stroke="#2b3036" stroke-width="2.7" stroke-linecap="round">
  <circle cx="11" cy="11" r="8.6"/><path d="M17.6 17.6l5 4.8" stroke-width="3.4"/><path d="M11 6.6v8.8M6.6 11h8.8" stroke-width="1.5"/>
  <circle cx="40.2" cy="11" r="8.6"/><path d="M46.8 17.6l5 4.8" stroke-width="3.4"/><path d="M35.8 11h8.8" stroke-width="1.6"/>
  <circle cx="68.2" cy="11" r="8.6"/><path d="M74.8 17.6l5 4.8" stroke-width="3.4"/>
  <circle cx="97.3" cy="11" r="8.6"/><path d="M103.9 17.6l5 4.8" stroke-width="3.4"/><path d="M92 11h10.6" stroke-width="1.6"/>
 </g><circle cx="68.2" cy="11" r="6.6" fill="#2b3036"/><path d="M68.2 4v14M61.2 11h14" stroke="#cdd0d4" stroke-width="2.4"/><path d="M63.5 6.3l2.6 2.6M72.9 6.3l-2.6 2.6M63.5 15.7l2.6-2.6M72.9 15.7l-2.6-2.6" stroke="#cdd0d4" stroke-width="1"/>
 <path d="M91.6 11l3.2-2.6v5.2zM103 11l-3.2-2.6v5.2z" fill="#2b3036"/></svg>
 <!-- bottom bar -->
 <div class="a" style="left:4px;top:548px;width:724px;height:23px;background:rgba(222,225,229,0.95);border-radius:6px"></div>
 <svg class="a" style="left:12px;top:551px" width="18" height="18" viewBox="0 0 24 24"><path fill="#2b3036" d="M19 19H5V5h7V3H5c-1.11 0-2 .9-2 2v14c0 1.1.89 2 2 2h14c1.1 0 2-.9 2-2v-7h-2v7zM14 3v2h3.59l-9.83 9.83 1.41 1.41L19 6.41V10h2V3h-7z"/></svg>
 <div class="a" style="left:44px;top:550px;width:60px;height:19px;background:#dde9f6;border-radius:5px"></div>
 <div class="a" style="left:50px;top:554px;font-size:10.2px;color:#1c4472">EQ-J2000:</div>
 <div class="a" style="left:608px;top:551px;width:29px;height:18px;background:#5c6570;border-radius:9px"></div>
 <div class="a" style="left:611px;top:554px;width:12px;height:12px;background:#fff;border-radius:6px"></div>
 <div class="a" style="left:644px;top:553px;font-size:12.5px;color:#2b2f35;white-space:nowrap">Click Lock: off</div>
 <!-- toolbar icons -->
 <svg class="a" style="left:0;top:32px" width="731" height="38" viewBox="5 92 731 38"><g fill="#2a2f36">
<path d="M484 120.5h12l-6 7z"/>
<g transform="translate(512 96) scale(-1.15 1.15)"><path d="M13.78 15.17l2.12-2.12 5.66 5.66-2.12 2.12zM17.5 10c1.93 0 3.5-1.57 3.5-3.5 0-.58-.16-1.12-.41-1.6l-2.7 2.7-1.49-1.49 2.7-2.7c-.48-.25-1.02-.41-1.6-.41C15.57 3 14 4.57 14 6.5c0 .41.08.8.21 1.16l-1.85 1.85-1.78-1.78.71-.71-1.41-1.41L12 3.49c-1.17-1.17-3.07-1.17-4.24 0L4.22 7.03l1.41 1.41H2.81l-.71.71 3.54 3.54.71-.71V9.15l1.41 1.41.71-.71 1.78 1.78-7.41 7.41 2.12 2.12L16.34 9.79c.36.13.75.21 1.16.21z"/></g></g>
<rect x="524" y="96" width="1" height="28" fill="#d0d5db"/>
<g fill="none" stroke="#2a2f36" stroke-width="2"><path d="M551.7 99.2c-6.2 0-11.1 5-11.1 11.1 0 6.1 4.9 11.1 11.1 11.1 1 0 1.7-.7 1.7-1.6 0-.5-.2-.9-.5-1.2-.3-.3-.5-.7-.5-1.2 0-1 .8-1.8 1.8-1.8h2.1c3.4 0 6.3-2.8 6.3-6.2 0-5.5-4.9-10.2-10.9-10.2z"/></g>
<g fill="#2a2f36"><circle cx="548.2" cy="104.8" r="1.7"/><circle cx="554.4" cy="104.8" r="1.7"/><circle cx="545" cy="110.2" r="1.7"/><circle cx="558.3" cy="110.2" r="1.7"/>
<path d="M533 120.5h12l-6 7z"/><path d="M571 119.5h13l-6.5 8z"/></g>
<g fill="none" stroke="#2a2f36" stroke-width="2.2"><path d="M577.5 105v-4.3h4.5M593 100.7h4.5v4.3M597.5 115.5v5h-4.5M582 120.5h-2.5"/><circle cx="587.4" cy="110.1" r="3.6"/><path d="M577.5 113v7"/></g>
<circle cx="621.8" cy="110" r="11.3" fill="none" stroke="#2a2f36" stroke-width="1.5" stroke-dasharray="1.6 1.1"/>
<path d="M607 118.7h12l-6 7z" fill="#2a2f36"/>
<g fill="#2a2f36"><path d="M642.8 109.6l11.5-9.2 11.3 9.2-11.3 9.2z"/><path d="M643 115.8l2-1.6 9.5 7.4 9.3-7.4 2 1.6-11.3 9z"/></g>
<circle cx="667.9" cy="103.6" r="9" fill="#fafbfd"/><circle cx="667.9" cy="103.6" r="8.2" fill="#1a63d6"/>
<text x="667.9" y="107.6" font-size="11" font-weight="bold" fill="#fff" text-anchor="middle" font-family="Liberation Sans">5</text>
<g transform="translate(690 107.5) rotate(-12) scale(1.02) translate(-12 -12)"><path fill="#2a2f36" d="M17 7h-4v1.9h4c1.71 0 3.1 1.39 3.1 3.1 0 1.43-.98 2.63-2.31 2.98l1.46 1.46C20.88 15.61 22 13.95 22 12c0-2.76-2.24-5-5-5zm-1 4h-2.19l2 2H16zM2 4.27l3.11 3.11C3.29 8.12 2 9.91 2 12c0 2.76 2.24 5 5 5h4v-1.9H7c-1.71 0-3.1-1.39-3.1-3.1 0-1.59 1.21-2.9 2.76-3.07L8.73 11H8v2h2.73L13 15.27V17h1.73l4.01 4L20 19.74 3.27 3 2 4.27z"/></g>
<path d="M678.2 119.2h11.5l-5.75 6.4z" fill="#2a2f36"/>
<g fill="#2a2f36"><path d="M711.7 100.8h8l-2.8 2.8 11.5 11.5 2.8-2.8v8h-8l2.8-2.8-11.5-11.5-2.8 2.8z"/></g>
</svg>

</div>
<div class="big" style="left:91.5px;top:47px">A</div>
<div class="panel" style="left:741px;top:59px;width:738px;height:576px">
 <div class="tabbar"></div>
 <div class="tab" style="left:9px;width:93px"><span class="a" style="left:12px;top:7px;font-size:12.5px">Active Chart</span></div>
 <span class="a" style="left:115px;top:9px;font-size:12.3px;color:#2b2f35">Details</span>
 <div class="sep" style="left:166px;top:9px;height:16px"></div>
 <div class="a" style="left:0;top:70px;width:735px;height:1px;background:#cdd5df"></div>
 <svg class="a" style="left:0;top:32px" width="735" height="38" viewBox="742 92 735 38">
<g fill="none" stroke="#2a2f36" stroke-width="2.1"><circle cx="759" cy="111" r="10.6"/><path d="M759 105.2v11.6M753.2 111h11.6"/></g>
<g fill="#2a2f36"><path d="M1136.7 99.3h16.4v2.6h-2.8v8l2.8 2.2v1.6h-7.1v8.1l-1.1 1-1.1-1v-8.1h-7.1v-1.6l2.8-2.2v-8h-2.8z"/></g>
<rect x="1169.7" y="95.9" width="91.5" height="28.8" fill="#fafbfd" stroke="#c3d0de" stroke-width="1"/>
<rect x="1229.5" y="96.4" width="31.2" height="27.8" fill="#d8e1eb"/>
<path d="M1199.5 96v28.5M1229.5 96v28.5" stroke="#c3d0de" stroke-width="1"/>
<g fill="none" stroke="#50585f" stroke-width="2.5"><circle cx="1184.6" cy="109.6" r="8.6"/><path d="M1190.8 115.8l5.5 5.6" stroke-width="3"/><path d="M1184.6 105v9.2M1180 109.6h9.2" stroke-width="1.6"/></g>
<path d="M1207.5 119.5l-4.3-5.3c-.6-.8.3-1.8 1.1-1.3l2.4 1.6V102.3c0-.8 .6-1.4 1.4-1.4s1.4.6 1.4 1.4v6.5-8.3c0-.8.6-1.4 1.4-1.4s1.4.6 1.4 1.4v8.3-7.3c0-.8.6-1.4 1.4-1.4s1.4.6 1.4 1.4v7.3-5.3c0-.8.6-1.4 1.4-1.4s1.4.6 1.4 1.4v13.2c0 2.6-2.1 4.3-4.6 4.3h-4.3c-1.4 0-2.3-.5-3-1.5z" fill="#fafbfd" stroke="#50585f" stroke-width="1.6" stroke-linejoin="round"/>
<rect x="1235.3" y="100.5" width="19.6" height="20" fill="none" stroke="#1e2328" stroke-width="2.6" stroke-dasharray="2.2 1.6"/>
<g fill="none" stroke="#1e2328" stroke-width="3"><circle cx="1287" cy="109.6" r="9.3"/><path d="M1293.6 116.2l5.6 5.6"/></g>
<text x="1286.8" y="113.6" font-size="10.5" font-weight="bold" fill="#1e2328" text-anchor="middle" font-family="Liberation Sans" letter-spacing="-0.6">1X</text>
<g fill="none" stroke="#2a2f36" stroke-width="2.8"><path d="M1314 102.3q0-1.8 1.8-1.8h14.6l4 4v14.7q0 1.7-1.8 1.7h-16.8q-1.8 0-1.8-1.7z"/></g>
<g fill="#2a2f36"><rect x="1317.2" y="103.3" width="10.8" height="3.8"/><circle cx="1324.4" cy="114.4" r="3.7"/></g>
<g fill="none" stroke="#2a2f36" stroke-width="2.5"><path d="M1362 101.7A9.7 9.7 0 0 0 1359.8 120.95M1363.4 120.9A9.7 9.7 0 0 0 1367.6 103.8"/></g><path d="M1356.3 101.7l6.2-4v8z" fill="#2a2f36"/>
<path d="M1388.3 102h17.9l-6.8 8.8v9l-1.5 .5h-1.3l-1-.5v-9z" fill="none" stroke="#2a2f36" stroke-width="2.4" stroke-linejoin="round"/>
<path d="M1395.8 110.5h2.8v10h-2.8z" fill="#2a2f36"/>
<path d="M1438.61 108.67 L1441.72 108.83 L1441.72 112.77 L1438.61 112.93 L1437.86 114.74 L1439.95 117.06 L1437.16 119.85 L1434.84 117.76 L1433.03 118.51 L1432.87 121.62 L1428.93 121.62 L1428.77 118.51 L1426.96 117.76 L1424.64 119.85 L1421.85 117.06 L1423.94 114.74 L1423.19 112.93 L1420.08 112.77 L1420.08 108.83 L1423.19 108.67 L1423.94 106.86 L1421.85 104.54 L1424.64 101.75 L1426.96 103.84 L1428.77 103.09 L1428.93 99.98 L1432.87 99.98 L1433.03 103.09 L1434.84 103.84 L1437.16 101.75 L1439.95 104.54 L1437.86 106.86z" fill="none" stroke="#2a2f36" stroke-width="2.1" stroke-linejoin="round"/><circle cx="1430.9" cy="110.8" r="3.4" fill="none" stroke="#2a2f36" stroke-width="2.1"/>
<g fill="#2a2f36"><path d="M1452.6 101.4h8l-2.8 2.8 11.5 11.5 2.8-2.8v8h-8l2.8-2.8-11.5-11.5-2.8 2.8z"/></g>
</svg>

 <svg class="a" style="left:0;top:70px" width="735" height="503" viewBox="742 130 735 503" font-family="Liberation Sans"><path d="M1127 358.5h0M1094 329.5h0M1122 239.5h0M1254.5 380.5h0M1044.5 322h0M876.5 377h0M1035 289.5h0M885 348.5h0M1107 226.5h0M947.5 251h0M985 400.5h0M908 412h0M1042 396h0M1059.5 497.5h0M887.5 399h0M1036 211h0M1122.5 460h0M1325.5 449h0M906.5 318h0M941 472h0M1341.5 388.5h0M998.5 283h0M1016 235h0M952 446h0M1271 404h0M1235 374h0M1059.5 272h0M1305 268.5h0M1178.5 273.5h0M1227 312h0M1337.5 357h0M1319 274h0M1069.5 534.5h0M1161 229h0M1184.5 514h0M936 457h0M1054 492h0M1221.5 332h0M1270.5 412h0M1271.5 412.5h0M1213.5 243h0M1156 319h0M1085 460h0M922.5 252h0M935 446h0M945 448h0M954.5 310h0M1163.5 526h0M989.5 248h0M915 424h0M985.5 458.5h0M979.5 278.5h0M981 256h0M1017 293h0M923 378.5h0M1160 430h0M1078 359h0M1242.5 500h0M1165.5 372h0M1109 519.5h0M1050.5 379.5h0M1134.5 381.5h0M1182 345h0M1052.5 525.5h0M1080.5 295.5h0M1045.5 442.5h0M1148.5 415h0M1104 440.5h0M1070.5 383.5h0M1255 408.5h0M983.5 252.5h0M1070 422h0M1308.5 261h0M1091.5 446h0M1157 509.5h0M1040.5 283.5h0M1274 457h0M1163.5 443h0M1112 446.5h0M957 469h0M1086.5 422h0M1225 318.5h0M1039.5 402h0M1020 416.5h0M966 334.5h0M1139 503.5h0M1039 309h0M915.5 324.5h0M1210 367h0M1028.5 218.5h0M948.5 373.5h0M1157 486.5h0M1089 466.5h0M924 308h0M900.5 377h0M1119.5 471h0M1270.5 407.5h0M944 450.5h0M1205.5 254.5h0M984.5 463h0M1116.5 283.5h0M1146 240.5h0M1245.5 263h0M1185.5 341h0M1122.5 385.5h0M1123 393.5h0M994 500.5h0M1066.5 334.5h0M1205 490h0M998 319h0M943 272.5h0M937.5 306h0M1207 482.5h0M1212 360.5h0M1297 400h0M1027 324h0M965 365h0M989.5 231h0M1097 433.5h0M1036 489h0M1073 373h0M969.5 413h0M1238 316.5h0M1126 464.5h0M1167.5 345.5h0M1252 404.5h0M966 242.5h0M996 320h0M1284.5 244.5h0M1128 371h0M1151.5 311h0M961 349.5h0M1114 351h0M1102 445h0M943.5 289h0M1246 472h0M1032.5 292.5h0M927 289h0M1149 409h0M1170.5 440.5h0M1135 456.5h0M1292 244.5h0M1304.5 457h0M932 479h0M1298 413h0M1220.5 250.5h0M1132.5 430.5h0M1315.5 431.5h0M1162 348.5h0M1061.5 536.5h0M1200 456.5h0M991.5 422.5h0M907 393h0M1001 328h0M1214 439.5h0M1222.5 445.5h0M1028 345h0M984.5 306h0M967.5 381.5h0M1349 350h0M942.5 412.5h0M1100.5 271.5h0M1266 251.5h0M1160.5 316h0M947.5 313.5h0M1323 420h0M1042.5 217.5h0M1101 452h0M1189.5 205.5h0M1208 326h0M985.5 275.5h0M1217.5 301h0M1013.5 241.5h0M1185 439h0M1031 412h0M968 255.5h0M1109.5 200h0M1168.5 531.5h0M1038 319h0M1220.5 517h0M923 322.5h0M1280 378h0M956.5 467h0M1315 344.5h0M1173.5 369.5h0M1166.5 502h0M1105 239.5h0M1079.5 532h0M1219 258.5h0M1181 292h0M1262 229.5h0M1096 341.5h0M1174.5 377h0M944 364h0M1061 409h0M1123 195h0M1219.5 259h0M1072.5 484h0M1226.5 478.5h0M940 484h0M1183.5 282.5h0M1095.5 450.5h0M1102 261.5h0M1244 282.5h0M1328.5 364.5h0M1082 389h0M1141 414h0M994.5 477.5h0M982 249h0M966 285h0M1291.5 299.5h0M1136 290.5h0M1107 451.5h0M1304.5 311h0M1095.5 305h0M994.5 257h0M1154.5 337h0M1083 489.5h0M1104 451.5h0M1341.5 316h0M995.5 503h0M1247.5 419.5h0M940.5 220.5h0M939 321.5h0M1167.5 437.5h0M1062 448.5h0M1268 518h0M1061.5 487.5h0M1171 240h0M1181 393.5h0M958 476h0M1045 368.5h0M1219 511h0M1130.5 302h0M1141 211.5h0M905.5 332.5h0M1074.5 474.5h0M1264.5 341h0M1253.5 373.5h0M1321.5 346h0M1235 495.5h0M1212.5 384h0M1110.5 320h0M951.5 367h0M865.5 376h0M1158 477h0M967.5 269h0M1165 536.5h0M1175 325h0M999 360.5h0M1116.5 375h0M1097 261h0M1293.5 439.5h0M910.5 354.5h0M1248.5 364.5h0M1031.5 343h0M980.5 392h0M1004 300h0M1247 286h0M1061 528.5h0M1156 410h0M1073.5 239h0M1252 363h0M969.5 264h0M1168.5 358h0M1057.5 445.5h0M1044.5 432.5h0M1232 490h0M1010 383h0M1231.5 469h0M1049 325.5h0M1045 495.5h0M1251.5 440.5h0M976 385.5h0M1047.5 341h0M1014.5 269.5h0M1174.5 479h0M1214.5 202.5h0M1037 441.5h0M1072.5 378.5h0M1186.5 524.5h0M1221.5 433h0M1089 231.5h0M1052.5 383h0M1109.5 420h0M993.5 406.5h0M1059 431h0M1245 399h0M1231.5 226h0M1246 477h0M965 324.5h0M1104.5 317h0M939.5 350h0M1063 217.5h0M1257 207h0M1108.5 230.5h0M1058 450h0M1172.5 528h0M1173 271h0M1111.5 253.5h0M1271 435h0M1266.5 351.5h0M1066 260h0M986 457h0M951.5 265.5h0M1019 331h0M990 483.5h0M1265 437.5h0M1012.5 318h0M1239.5 312h0M1162.5 410h0M1005.5 267h0M1349.5 361h0M1124 356.5h0M968 351h0M1208.5 287.5h0M1047 340h0M944 268.5h0M1246 475.5h0M941.5 443h0M967.5 476h0M1088 373h0M1172 233h0M1072 374h0M1272 469h0M955 308.5h0M1305 318.5h0M1090 359.5h0M1061.5 433h0M1244.5 414h0M1281 423h0M1058.5 441.5h0M1228 245h0M1175.5 222.5h0M1072.5 484.5h0M1299 274h0M1347.5 387.5h0M922 313.5h0M1266.5 444.5h0M1168.5 518.5h0M1260.5 379h0M1052.5 450.5h0M1327 282h0M986.5 258.5h0M1152.5 509h0M1233 499.5h0M889 348h0M1260 248h0M979 248.5h0M1163.5 357.5h0M1050 445h0M1099.5 351.5h0M1034.5 418.5h0M1060 361.5h0M1119.5 376.5h0M908 370h0M1121 527.5h0M1176.5 329h0M998.5 512h0M1047.5 330h0M1284 332.5h0M1136 347h0M953 308h0" stroke="#2469ae" stroke-width="6.6" stroke-linecap="round" opacity="0.5"/><path d="M893.5 387.5h0M1030.5 241h0M1111.5 222.5h0M1244.5 475.5h0M1285 498.5h0M1144 433h0M1247.5 267.5h0M891.5 356h0M1337.5 450.5h0M1006.5 325.5h0M931 281h0M1051 490h0M1084 252.5h0M1232 503.5h0M1275 395h0M1021.5 418h0M1311.5 362.5h0M1179 267.5h0M958 484.5h0M1266 522h0M1095.5 235h0M1109 274.5h0M1236 328.5h0M1082 416h0M908 314h0M1000 346.5h0M1065.5 267h0M1254 345h0M1165 450h0M1335 352.5h0M1067 475h0M1277.5 428.5h0M1199.5 473h0M1349.5 373.5h0M979.5 288.5h0M1223.5 278.5h0M1277 440h0M1313 311h0M992.5 468h0M1245 347.5h0M1187 345h0M951 260.5h0M1337.5 357h0M943 374h0M1041.5 367.5h0M1329.5 351h0M982 347h0M995.5 235.5h0M1003.5 443.5h0M977.5 345.5h0M1106.5 327h0M1203 322.5h0M1301.5 390.5h0M1036 377h0M944.5 260.5h0M1304 272h0M938 334.5h0M1179.5 479.5h0M1144 418.5h0M1204.5 324.5h0M1032 361h0M1024 424.5h0M1221 283.5h0M1000 361h0M963 243.5h0M959 426h0M1136 386.5h0M1058.5 539h0M1021 206h0M1162 359h0M1070 373h0M1032.5 416.5h0M1075 202h0M959.5 276h0M969 358.5h0M1225.5 273h0M1035.5 235.5h0M1096 256h0M1240.5 311.5h0M1085.5 232h0M1048.5 203h0M1117.5 413h0M908.5 456.5h0M961 463.5h0M1003 331.5h0M1287.5 270.5h0M1003 339.5h0M902.5 405h0M970.5 444.5h0M1139 301.5h0M966 237.5h0M941.5 269h0M1167 398h0M1321.5 304h0M999 271h0M1192 298h0M1347 369h0M1041.5 248h0M1317 435.5h0M910.5 270.5h0M1040.5 287.5h0M1057 389.5h0M1185.5 508.5h0M892 404.5h0M1073 292.5h0M919 401.5h0M1174.5 439.5h0M917.5 272.5h0M1272.5 407h0M1046 366h0M1329 302h0M907 357.5h0M1067.5 238.5h0M1068 493.5h0M1053.5 261h0M954.5 277h0M1110 496.5h0M1096.5 265.5h0M1044 383h0M1243 372h0M1091.5 343h0M1239 385.5h0M1347.5 337.5h0M897 355h0M1053 535h0M1077.5 344h0M1026.5 378.5h0M941 448h0M1140.5 306.5h0M1274 355.5h0M1035 311h0M1251.5 232.5h0M1129.5 371.5h0M1166 465h0M1101 322.5h0M1337 401.5h0M1039.5 285h0M995 248h0M1077 436.5h0M1274 274h0M1331 289h0M1060 237h0M950 421.5h0M1017 205h0M963 412.5h0M1240.5 445h0M1047.5 260.5h0M1280 255h0M1169 369h0M1142.5 411h0M941 320.5h0M1195 275h0M1282 481h0M1312.5 311h0M1311.5 284.5h0M1267.5 388.5h0M1216.5 355.5h0M1145.5 300.5h0M1169.5 222h0M1064 328.5h0M1187.5 350h0M933 294.5h0M1241 195.5h0M1231.5 284h0M1207 430h0M1187 302h0M1102 271.5h0M1060 356.5h0M943.5 444.5h0M991 366h0M1011 389.5h0M899.5 397h0M998 226.5h0M1110 426.5h0M1024.5 434.5h0M1144.5 367.5h0M1116.5 287h0M940.5 245h0M1075 400h0M1087 217.5h0M1279.5 397.5h0M1230.5 395h0M1216.5 250.5h0M1217 370h0M1195 342.5h0M1066.5 231h0M1074 473h0M1182 368.5h0M1131 245.5h0M1337 324h0M1327 456h0M1020 375h0M937 314h0M1145 406.5h0M990.5 449.5h0M1148 403.5h0M1173.5 473h0M1196 245.5h0M987.5 298h0M1095.5 263h0M966.5 285h0M1221.5 408.5h0M1010.5 372h0M940.5 455.5h0M1148 362.5h0M1346 384h0M927 263h0M1074 232.5h0M1040 502.5h0M1306 336.5h0M1099.5 398.5h0M1065.5 367h0M1032 387h0M1075.5 462h0M918 399.5h0M976.5 214.5h0M1229.5 358.5h0M974 440.5h0M1086.5 300.5h0M923 437.5h0M1299 347h0M990.5 236.5h0M1247 399.5h0M921.5 283h0M1073 412h0M1186.5 359h0M1131 374.5h0M1079 382h0M1206.5 245h0M1281.5 379h0M958 249h0M864.5 354.5h0M876 375.5h0M1140.5 500.5h0M937.5 361h0M1105 387.5h0M1123.5 506.5h0M1021.5 503.5h0M1102.5 468.5h0M1164.5 504h0M1238 280.5h0M1290 310h0M1219.5 469.5h0M1205 260.5h0M968 290.5h0M1233 410.5h0M1019.5 203h0M1275 264.5h0M1193.5 428h0M1222 457h0M1193.5 353.5h0M1197.5 396.5h0M1320.5 357.5h0M1216.5 350.5h0M1020 252h0M1170.5 252.5h0M1215.5 469h0M972.5 390h0M1054 387h0M1098.5 207h0M1173 440.5h0M1017 523.5h0M995 277h0M1000 272h0M1212.5 404h0M1142 369h0M1051 214h0M1239 333h0M1292 349h0M1053.5 245.5h0M1049.5 272.5h0M1150 447.5h0M1088.5 295.5h0M1090.5 531h0M1075 423h0M971 358h0M871 374.5h0M1087.5 306.5h0M972 383.5h0M1146.5 363.5h0M1117.5 392.5h0M1233.5 505.5h0M1266.5 372.5h0M955.5 408.5h0M949 376.5h0M1132 406h0M1194.5 295h0M1223.5 456h0M1142.5 410.5h0M1205.5 343h0M1271.5 485.5h0M1170.5 370.5h0M1228.5 396h0M1180 249h0M1254 360.5h0M1037 514.5h0M1219.5 376.5h0M1077.5 502h0M961 485h0M957 411h0M1080.5 421h0M930 412h0M1265 291h0M1001.5 372.5h0M1080 428h0M1278 372.5h0M1283.5 497h0M876.5 379h0M1237.5 472.5h0M945 443h0M1061 287h0M1129.5 386h0M1026.5 493.5h0M1041.5 277h0M972 298.5h0M879 374.5h0M1034 282h0M953.5 242.5h0M1277.5 270h0M1220.5 441h0M1123.5 410.5h0M1029.5 285h0M911.5 340h0M1108.5 355h0M943 225.5h0M916 446.5h0M996 406h0M1232.5 336h0M892.5 316h0M1285.5 281.5h0M1067 331.5h0M1122 395h0M1045.5 442.5h0M931 456.5h0M1267 400h0M981 305.5h0M1170 271h0M1167 351.5h0M959.5 318h0M998.5 351.5h0M1195 484.5h0M1211.5 250.5h0M1057 371.5h0M1202 462.5h0M1050 399.5h0M1163.5 360.5h0M1065 261.5h0M1002.5 230h0M945 242h0M1282.5 483.5h0M1167 468.5h0M1146.5 269.5h0M993 508.5h0M1038.5 461.5h0M1019 293h0M1025.5 409h0M1050 232.5h0M900.5 366.5h0M1245 337h0M945.5 272.5h0M979.5 286.5h0M958.5 352h0M934.5 244.5h0" stroke="#2469ae" stroke-width="6.6" stroke-linecap="round" opacity="0.5"/><path d="M1123.5 227.5h0M1096 398h0M1063.5 407.5h0M1058 432.5h0M1194 249h0M1304.5 476.5h0M933 402h0M1214.5 419h0M1212.5 198.5h0M997 365.5h0M1146 386.5h0M945.5 284.5h0M1076 470.5h0M1291 425.5h0M1143.5 489h0M1153 385.5h0M1276.5 488.5h0M1039 348.5h0M1153 316h0M1263 391h0M909.5 330h0M1201.5 322.5h0M1112.5 448.5h0M1165 304.5h0M908 382h0M1057.5 479h0M1063.5 529h0M1122.5 402.5h0M1175 445h0M993.5 241h0M1213.5 294.5h0M1087.5 373.5h0M1206 354.5h0M1020.5 513h0M1118.5 315.5h0M1035.5 520.5h0M906.5 385h0M1199.5 243.5h0M1295.5 239h0M1276 413h0M1172.5 504.5h0M1120 434h0M1306.5 365h0M957.5 262h0M1226.5 481h0M1185 335h0M1152 342h0M1228.5 478h0M921.5 438h0M1072 291h0M910.5 312.5h0M999 297h0M990 344.5h0M929 257h0M1027 425.5h0M952 373h0M978.5 429h0M956.5 381h0M1169.5 360h0M1019.5 224h0M1194 444.5h0M1029.5 303h0M1205.5 297h0M1330.5 331h0M1139 215.5h0M923 421.5h0M1270.5 474.5h0M1159 482h0M897.5 306.5h0M1225 280.5h0M1121.5 394h0M1112.5 374h0M1124 461.5h0M988.5 505h0M1303.5 281.5h0M1318 436.5h0M1194.5 325h0M1018.5 411.5h0M1298.5 286.5h0M1125.5 376.5h0M1079.5 389.5h0M1111.5 196.5h0M1125.5 220h0M938 459.5h0M1305.5 342.5h0M1174 371.5h0M1099 418.5h0M1127 198h0M1109 348.5h0M923 263h0M1058.5 197h0M1277 347.5h0M1237.5 225.5h0M955.5 425h0M1290.5 343h0M1253.5 374.5h0M1122 354h0M1143 405.5h0M1069.5 482h0M1220 401.5h0M1182 317h0M1068 471h0M978 376.5h0M1135 341h0M949 431.5h0M1171 226.5h0M1155 353.5h0M991 453h0M1158 328.5h0M1252.5 391h0M1133.5 415.5h0M1002 389.5h0M897.5 384h0M1168.5 444h0M1154.5 251h0M926 252.5h0M1048 355.5h0M1262.5 427.5h0M1265 411h0M1062.5 415.5h0M1116 349h0M1213.5 434h0M1109.5 475h0M1062 388.5h0M1270.5 402.5h0M1052.5 449.5h0M1187.5 329h0M1015 336h0M1063 360.5h0M949 268h0M973 331.5h0M1261.5 337h0M1306.5 459.5h0M1340 375h0M995 463h0M1113 455.5h0M1076 333h0M1239 249.5h0M1027 420.5h0M1101.5 457h0M1046 283.5h0M1165 330.5h0M1223 274h0M1022 274h0M1126 369h0M1255 443.5h0M928 253h0M1234.5 199.5h0M1079.5 339h0M1159.5 324h0M1074 479h0M1119.5 202h0M1234.5 225h0M1304 289h0M1285.5 439.5h0M1289.5 325.5h0M1065 282.5h0M1007 512.5h0M976.5 308.5h0M911 273h0M1210 197.5h0M1196 506.5h0M987 356h0M1145 399.5h0M1106 461h0M1184.5 209h0M1107 487.5h0M1028 298.5h0M1069.5 483.5h0M975.5 261.5h0M1025 473h0M1107 244.5h0M1033.5 321.5h0M1044.5 241.5h0M1197 340h0M1095 260h0M1302.5 305h0M987.5 287h0M1197 477h0M1221.5 396h0M1314 368.5h0M1079.5 458h0M967 286h0M1086.5 367.5h0M899.5 312h0M1196 406h0M899 396h0M1213 215.5h0M1293.5 377.5h0M921.5 454h0M1117 386h0M1059.5 469.5h0M1235.5 233.5h0M1103.5 239h0M989 229.5h0M1067.5 281.5h0M1296 308.5h0M1285 439h0M1091.5 336h0M1132.5 326.5h0M980 482h0M1094.5 398.5h0M1060.5 429h0M1111 460h0M945.5 257.5h0M994.5 472h0M1176.5 523h0M953 383h0M1202 511.5h0M983 450.5h0M1248.5 275.5h0M1013.5 428h0M1127.5 300.5h0M1049 257.5h0M1104 389h0M1011.5 227.5h0M1248.5 410.5h0M1095.5 369.5h0M981.5 391h0M1206.5 440.5h0M991.5 339h0M1249.5 435.5h0M976.5 379h0M1271 216h0M1029.5 408.5h0M1286 306.5h0M1013 425.5h0M1223 226h0M1015 316h0M1278.5 493.5h0M939.5 240h0M1015.5 426.5h0M1218.5 319h0M996.5 509h0M1116 523.5h0M1030 202h0M1028.5 298.5h0M1009.5 300.5h0M1094 349h0M1314.5 407.5h0M1133 365.5h0M1041 452h0M1180.5 406.5h0M1030.5 202.5h0M1071.5 290h0M1307.5 255.5h0M935.5 271h0M985.5 422.5h0M1258.5 388h0M1046 364h0M1060 452.5h0M1142 364h0M955 311.5h0M1175 270h0M1036.5 449.5h0M980.5 324h0M1038.5 423h0M1233.5 280h0M993.5 301h0M1050.5 251.5h0M1181.5 415.5h0M1348 366.5h0M1204.5 324h0M1074 281h0M1173 387h0M1204 515h0M1344.5 355h0M1019.5 336.5h0M1135.5 293h0M1018.5 210h0M1131.5 235.5h0M1134 486h0M1039 463.5h0M1002.5 281.5h0M1198 231.5h0M1218.5 508h0M1132 505.5h0M1345 360.5h0M1026.5 256.5h0M958.5 422h0M1261 351.5h0M1217.5 373h0M1107.5 446.5h0M962.5 260h0M1045.5 486h0M1081 247h0M946.5 255h0M940.5 368h0M1079.5 360.5h0M1268.5 429.5h0M1282.5 337h0M977.5 248.5h0M1067.5 472h0M1284.5 334.5h0M1130 302h0M1265.5 321.5h0M1201 364.5h0M1021 327.5h0M1274.5 306h0M1317.5 394h0M1084 271.5h0M1074 517.5h0M1266 326h0M1192.5 233h0M1314.5 302.5h0M1210.5 266.5h0M1312.5 374h0M879 373h0M1031 353h0M1346.5 440.5h0M1166 431.5h0M1031 391.5h0M1171 261.5h0M1166 519.5h0M1293.5 427.5h0M904.5 417.5h0M1237 313h0M1059.5 482.5h0M1008 373.5h0M1048.5 441h0M1172.5 379h0M1027 300h0M1149 464.5h0M1160 395.5h0M1005.5 294h0M1113.5 287.5h0M1085 276.5h0M1291.5 484h0M1027.5 353h0M980 461h0M1006.5 383.5h0M989.5 269.5h0M1137.5 308h0M1255 336.5h0M1028.5 261.5h0M1031.5 252.5h0M1070.5 457h0M965.5 311h0M1146.5 339.5h0M1191 525h0M1034 434h0M1091.5 255.5h0M1196 219.5h0M993 359h0M997 222.5h0M1100.5 443.5h0M1211 493.5h0M1085.5 357h0M1054.5 347.5h0M1217.5 199.5h0M902.5 367h0M941 277.5h0M1102 444.5h0M1095.5 374h0M1212.5 403h0M1012.5 445.5h0M1052.5 384.5h0M1221.5 294.5h0M1162.5 336h0M1007.5 387h0M997.5 338.5h0M996.5 511h0M984 325.5h0" stroke="#2469ae" stroke-width="6.6" stroke-linecap="round" opacity="0.5"/><path d="M975.5 440h0M1084 464.5h0M1040 298.5h0M1048.5 342.5h0M1054.5 484.5h0M938.5 373h0M1296.5 279h0M1295.5 429h0M891.5 343.5h0M1174.5 478.5h0M1199 518h0M1257 521h0M960.5 428.5h0M1189.5 335h0M1310 289h0M975.5 403h0M1174.5 349.5h0M1045 442.5h0M1095.5 302h0M1074 451h0M963 448h0M1157 290.5h0M950 294h0M1196.5 407.5h0M943.5 375.5h0M914 374.5h0M1259.5 430.5h0M1292.5 338.5h0M1225 393h0M1230 420.5h0M1250 467.5h0M1208 238h0M1032.5 382.5h0M1251.5 345h0M1105 304h0M1084 210h0M882.5 371h0M1044.5 506h0M1170 482h0M1139.5 504.5h0M1145 317.5h0M1096 462h0M1024 241.5h0M1131 410.5h0M1266 267.5h0M1305 448.5h0M1270.5 307.5h0M1214 432.5h0M1277 404h0M1091 442.5h0M1287 283.5h0M1126.5 420h0M1338.5 386.5h0M1045.5 217.5h0M987.5 393h0M1267.5 391h0M1251.5 214h0M1283 463h0M1213.5 414.5h0M1052.5 532.5h0M1255.5 430h0M991.5 492.5h0M918 416.5h0M1073.5 376.5h0M1173.5 482h0M1248 372.5h0M1216.5 425h0M1350 344.5h0M959 449h0M1078.5 396h0M1152.5 394h0M1122.5 221h0M936 242h0M1234.5 294.5h0M1139 478.5h0M929.5 301.5h0M1203 328h0M1276.5 499h0M951 386.5h0M1315.5 401h0M921 267.5h0M983 357.5h0M1270 213h0M1023.5 445.5h0M939 291.5h0M1167 239.5h0M917.5 268.5h0M1278.5 257.5h0M1137.5 442h0M1142 292.5h0M1257 410h0M1087 291.5h0M1211 436.5h0M1044 370.5h0M1164 407h0M1016 383.5h0M1186.5 325h0M1230.5 447h0M1275 401h0M1151.5 314h0M1325 422.5h0M1173.5 220.5h0M941 254h0M1043 223.5h0M1151.5 507h0M1263 404h0M1181.5 508.5h0M1272 409.5h0M1033.5 362.5h0M1055.5 439.5h0M1163.5 410.5h0M1026 284h0M1047.5 484h0M1273 217.5h0M935 480.5h0M1026 343.5h0M984 403h0M1111.5 191h0M1260.5 330h0M1306.5 398.5h0M997 444h0M913 376h0M1269.5 211h0M989.5 351.5h0M1130.5 368h0M1085 451h0M1098 497h0M924 340h0M1243.5 342.5h0M1065.5 531.5h0M1217 354.5h0M1208.5 497.5h0M1246 277.5h0M1231 324h0M1242.5 369.5h0M1105.5 324h0M1257 430h0M1051.5 450.5h0M1014.5 472.5h0M1092 352.5h0M1175.5 526h0M1043.5 286.5h0M1219.5 419.5h0M1237.5 446h0M1017 424h0M1176.5 460.5h0M1246 388h0M1296.5 435h0M1095 220.5h0M1037 466h0M1299.5 319.5h0M1211.5 282h0M1133 471h0M1000.5 216h0M1349 349h0M1094 316h0M1306 273.5h0M1269.5 208h0M933 315h0M984 445.5h0M1024.5 388h0M1274.5 387h0M885.5 342.5h0M1057.5 522h0M1013 287h0M1175 462h0M1314.5 313h0M1087.5 499.5h0M1191 405h0M1122 480.5h0M950 262h0M948 284h0M1222 386.5h0M1244.5 278h0M1220 397.5h0M1207 448h0M937 367h0M911.5 462.5h0M1120.5 428h0M1274 403.5h0M1294 365h0M1213.5 246h0M1115 455h0M1133.5 371h0M986.5 345.5h0M973 492.5h0M1033.5 253h0M1249 401h0M1088 471.5h0M1255.5 423.5h0M1300.5 472h0M999 443.5h0M1247 351.5h0M1079.5 391h0M1292.5 319h0M1308 272.5h0M1287 240.5h0M1139.5 528.5h0M1231.5 438h0M1006.5 310h0M1278 391h0M1325 409.5h0M1201 503.5h0M888.5 374h0M1341.5 358h0M1237.5 515.5h0M1091.5 207.5h0M1247.5 423.5h0M995 404h0M1025 523h0M1045.5 297.5h0M986.5 415h0M1040 334.5h0M1056 350h0M983.5 491.5h0M1169 283h0M1009 229.5h0M1181.5 264.5h0M1164.5 320h0M960.5 247.5h0M941 260h0M1206 287h0M1263.5 360.5h0M1206.5 374h0M1016 415.5h0M1314.5 295h0M1170.5 506.5h0M949 367h0M968.5 447h0M1052.5 201h0M1180.5 501.5h0M1135 365h0M1289.5 311.5h0M1200.5 423.5h0M1239.5 462h0M1064.5 474.5h0M1242.5 466h0M1285.5 286.5h0M1275.5 402h0M1160.5 503h0M1065.5 371.5h0M1060 208h0M1234 244.5h0M1216 440.5h0M1323.5 425h0M934.5 285.5h0M1162 500.5h0M1055.5 467h0M1296.5 407h0M986.5 259.5h0M1047.5 267h0M1060 445.5h0M1203.5 482h0M965 311h0M1091 272h0M893.5 405h0M1096.5 239h0M1133.5 339h0M1002 274.5h0M1244.5 347h0M1027 353.5h0M1074 401.5h0M1297.5 310.5h0M1324.5 398h0M1102.5 412h0M1210.5 463.5h0M1308 432h0M1245.5 375h0M1145.5 402h0M1022 446h0M1018.5 216.5h0M1128 521.5h0M1059.5 380.5h0M1179.5 340h0M1030.5 477h0M937 297.5h0M1315 430h0M1141 513.5h0M882 335h0M1024 422.5h0M1314 368h0M949.5 301.5h0M1277 233h0M972 246h0M1022.5 445.5h0M1329.5 382.5h0M968.5 290.5h0M1349 388.5h0M971.5 440.5h0M1002.5 259.5h0M1120.5 392h0M875 378h0M908 458.5h0M1301 340.5h0M994 434h0M1134 378.5h0M1173.5 382.5h0M894.5 384.5h0M1083 420h0M1204.5 200h0M982.5 446.5h0M1167 353h0M1198 325.5h0M1193 514.5h0M1013.5 422.5h0M1117.5 336h0M981.5 377.5h0M1088.5 383h0M1280 469.5h0M1216.5 485.5h0M1248 511.5h0M1232 285.5h0M1089.5 228h0M1093.5 378h0M1041 217h0M1201.5 242.5h0M1334.5 434.5h0M1030 377h0M1307.5 321h0M1017.5 279h0M998.5 313.5h0M1019.5 327.5h0M972.5 375.5h0M1088.5 420h0M1030 265h0M1323.5 464.5h0M1055.5 218h0M1267 279.5h0M921.5 373h0M1192 204.5h0M1089.5 364.5h0M1293.5 301h0M987 468.5h0M902 382.5h0M1216.5 361.5h0M1148.5 473.5h0M1096 220.5h0M960 436h0M1074.5 424.5h0M979 368h0M1174 320h0M1029.5 204.5h0M1133 295.5h0M1164 201h0M1188.5 439h0M882.5 378.5h0M1137 502h0M1081.5 521h0M918.5 416h0M1218.5 363.5h0M1214.5 410h0M892.5 316h0M1041 480.5h0M962.5 241h0M1182 245h0M1248.5 429h0M1070 267h0M1236 514.5h0M1007.5 310.5h0M1196.5 441.5h0M1284 426.5h0M942 283h0M985.5 258h0" stroke="#2469ae" stroke-width="6.6" stroke-linecap="round" opacity="0.5"/><path d="M1120 401.5h0M1342.5 360.5h0M1057.5 254h0M945.5 423.5h0M1247 488h0M1235 375.5h0M1283 383h0M1306.5 400h0M1322.5 419h0M1184 269.5h0M970 454.5h0M1166.5 284h0M1016.5 409.5h0M1055 510.5h0M1169.5 470.5h0M1158.5 453h0M935.5 441h0M1043 224h0M1160 452.5h0M1014 249.5h0M1059 233h0M1010.5 422.5h0M1184 298h0M1187.5 352.5h0M1054 474h0M1305 293h0M1056.5 373h0M1019 523h0M1157.5 521h0M901 318.5h0M1030.5 390.5h0M1142 457h0M1219 226h0M1055 353.5h0M1140 273.5h0M1053 473h0M1092 206.5h0M1236.5 229.5h0M930 379.5h0M1148.5 207h0M1042 230h0M1023.5 482.5h0M933 314.5h0M1176.5 243.5h0M1186 483h0M1037.5 265h0M1338.5 427.5h0M1210.5 472.5h0M1307 429h0M1037 489h0M935 265.5h0M1058 432h0M1304 376.5h0M920.5 339h0M1234 495.5h0M965 293.5h0M1195 423.5h0M1110.5 418h0M1015.5 313h0M1060.5 253h0M1213.5 451.5h0M968.5 263h0M962 387.5h0M1096 407.5h0M1211 401h0M1254 292.5h0M1179 365.5h0M1040.5 329.5h0M993.5 372.5h0M898.5 408h0M1028.5 257.5h0M1091 451.5h0M986.5 239.5h0M1254 333h0M1068 506.5h0M1013 434.5h0M1111 364.5h0M887 354h0M938.5 261h0M1178 503h0M1346.5 388.5h0M1122 502.5h0M989.5 281.5h0M1166 362h0M1088 212.5h0M1222 333h0M1155.5 223.5h0M1001.5 391h0M901 319.5h0M1038.5 235h0M1324.5 428h0M1060.5 361.5h0M1201.5 319.5h0M941 293.5h0M1110.5 338.5h0M1085.5 366.5h0M1224.5 391.5h0M908.5 413h0M951.5 405h0M986.5 283.5h0M1259.5 380h0M1025.5 332h0M904 386h0M1240 226.5h0M945 457.5h0M1310.5 313.5h0M1234 521h0M1041.5 291.5h0M990.5 383.5h0M1229 509.5h0M896 357h0M1088.5 390.5h0M893 328h0M1071 454.5h0M1216 356.5h0M943 282h0M1290.5 454.5h0M937 335h0M1116.5 243h0M1215 354.5h0M1210.5 225h0M1116.5 458.5h0M1149.5 430h0M951.5 375h0M1119 238.5h0M1177 295.5h0M1060.5 499h0M879.5 384h0M1033.5 412h0M985.5 344.5h0M1066 514.5h0M900.5 390h0M1243 514h0M1051 531h0M1098 300.5h0M1143.5 407h0M1092.5 309.5h0M974 391.5h0M1082 465h0M1211 362.5h0M1229.5 418.5h0M952.5 457h0M1048.5 246.5h0M1152 202.5h0M1044 257.5h0M971.5 290h0M1250.5 384.5h0M1212 326h0M981 323.5h0M1212 489.5h0M921 377.5h0M1134.5 419h0M931 458h0M903 379.5h0M1109 464.5h0M1161 255h0M1310.5 374.5h0M1087 331h0M1139 350h0M1243 329.5h0M1036 437h0M926 237.5h0M957.5 336h0M1033.5 335.5h0M1021.5 422h0M1010 515.5h0M1050 338h0M958 373.5h0M1048.5 459h0M1210.5 394.5h0M1259.5 441.5h0M1281.5 275h0M991.5 444h0M1253 525h0M1179 425.5h0M1291 310.5h0M1290.5 247h0M1042.5 293.5h0M1076 401h0M1204 212.5h0M1184 269.5h0M1260 376.5h0M1049.5 267.5h0M1197 327.5h0M1190 460.5h0M926.5 294h0M1338.5 362.5h0M1129.5 387.5h0M1217.5 399h0M1095 353h0M1275.5 386h0M1166 523h0M1060.5 494.5h0M1083 429h0M1011 303.5h0M925 244.5h0M891 335.5h0M1140 322.5h0M1164.5 527.5h0M1107.5 420h0M1106.5 424h0M1040 285h0M1250.5 384.5h0M912.5 364h0M1007 508h0M1074 212h0M1095.5 203.5h0M1123 436.5h0M1285.5 265h0M1018 424h0M1115 430h0M1340.5 393h0M916 424h0M939 279h0M963 263h0M1187 274.5h0M1122.5 289h0M1014 445h0M1041 460.5h0M1131.5 445.5h0M1006.5 276h0M915.5 378h0M879.5 338h0M1057 400.5h0M895.5 409h0M1129.5 198h0M1137.5 348h0M1351.5 357.5h0M1228 261.5h0M1142.5 286h0M1167.5 423h0M930.5 323h0M1018.5 486.5h0M1172 350.5h0M1314 391.5h0M1117.5 405.5h0M1099.5 329h0M1212.5 333.5h0M1297.5 441h0M989 341h0M1065 283.5h0M1198 392h0M1136 414h0M955 272h0M1293 272.5h0M1299.5 445.5h0M1018.5 374h0M1066.5 420h0M895 375.5h0M939.5 284.5h0M1057.5 360h0M1171 497h0M1094.5 262h0M1302 444.5h0M1062.5 380h0M875 351.5h0M983.5 378.5h0M1231.5 470h0M967 448h0M1224 518.5h0M1301 422.5h0M1052 442h0M1218.5 229h0M1132.5 287h0M1027 289h0M1048.5 446.5h0M867 361.5h0M1178.5 412h0M1181 485h0M1259.5 332.5h0M950 371.5h0M1192 500.5h0M994.5 258h0M951 376.5h0M1162 446.5h0M1190.5 375.5h0M1049.5 390.5h0M1191.5 313h0M1338.5 445h0M927 336h0M961.5 381h0M1136.5 525h0M1151 231.5h0M1223.5 398h0M1264 480h0M1053 365h0M1263 365h0M1092.5 208h0M1334.5 319h0M1336 447.5h0M1241.5 300h0M915 402h0M975 264h0M985.5 329.5h0M1085 374.5h0M1261.5 421.5h0M1163.5 334.5h0M1040.5 328h0M979.5 362.5h0M1133.5 198.5h0M1174.5 255.5h0M918 257.5h0M1039.5 304h0M1228.5 241.5h0M1291.5 494h0M1140.5 452h0M1077.5 483.5h0M1121.5 448.5h0M1119 225.5h0M1191 418.5h0M987.5 438h0M1173 251.5h0M1003 282.5h0M1252 340.5h0M1251.5 390.5h0M1034.5 380h0M975.5 441h0M1022 434.5h0M1154 209.5h0M1347 361h0M1177.5 275h0M1058.5 246.5h0M1270.5 494.5h0M1263.5 356.5h0M980.5 294.5h0M922 304.5h0M1053.5 437.5h0M1283 236h0M926.5 384h0M1039 520.5h0M1026.5 218h0M1007.5 345.5h0M1265 406.5h0M943 283h0M1312.5 401h0M1025.5 410.5h0M1186.5 300h0M1147 412.5h0M1157.5 335.5h0M1208.5 241.5h0M1136 383.5h0M1183 439h0M945.5 311.5h0M1149.5 358h0M1130 468h0M1198 248h0M1167 500.5h0M998.5 272.5h0M1163.5 514h0M1037 446h0M1047 401.5h0M1026.5 362h0M1185 296.5h0M1118.5 442h0M1310.5 451h0M921 466h0M1018.5 265.5h0M1005 463.5h0M1080.5 402h0M1182.5 266h0M1138 272h0M1001 351.5h0M1240.5 515h0" stroke="#2469ae" stroke-width="6.6" stroke-linecap="round" opacity="0.5"/><path d="M1035.5 382.5h0M963 239.5h0M1095.5 242h0M1057.5 264.5h0M1091.5 260h0M1018 387.5h0M1345.5 369h0M1074 365h0M1185.5 294.5h0M1108.5 312h0M965 430h0M1013 508.5h0M1134 486h0M1184.5 337h0M1167.5 416h0M1191.5 451h0M1082 297h0M1098 290.5h0M1083.5 248h0M1187.5 419h0M1281 397.5h0M1275.5 310h0M1306 305h0M1044.5 420h0M1151.5 436h0M1074 284h0M1068 378h0M1125 387.5h0M1146.5 212h0M1094.5 442.5h0M887 383h0M992 441h0M1050 256h0M1064.5 234.5h0M1171.5 243.5h0M1017.5 498h0M1297.5 411.5h0M1322 295.5h0M1118.5 332h0M995.5 282.5h0M1296.5 295.5h0M1163 348h0M1323.5 292.5h0M1200 251.5h0M912.5 366.5h0M1263 393.5h0M1025 383.5h0M1070.5 492.5h0M989.5 432h0M924 335h0M1065.5 434h0M1231 263h0M1170.5 447.5h0M1022.5 294h0M1195.5 386.5h0M1132 509.5h0M1060.5 378.5h0M1054.5 254h0M908.5 347h0M1056.5 491h0M1186.5 384h0M1241 349h0M1325.5 322.5h0M1096 257h0M994 350.5h0M993.5 448.5h0M1269 228h0M1126.5 277h0M1276 416.5h0M1203.5 341h0M1029.5 363.5h0M1073.5 224h0M881.5 388.5h0M957 426h0M1230.5 434h0M1029.5 363h0M1317 308.5h0M1149.5 316h0M1121 437.5h0M1087.5 373.5h0M1253 420.5h0M1344.5 429h0M1106 452.5h0M1227.5 446.5h0M1149.5 362h0M1038 456h0M1061 481h0M1177 438.5h0M940.5 461.5h0M1183 453h0M1252.5 470h0M1236 490.5h0M1220.5 405h0M1342.5 361.5h0M1069.5 257h0M1113.5 284.5h0M1173.5 476h0M1050 380.5h0M1339 341.5h0M953.5 482h0M1133 323h0M1142.5 290.5h0M1141.5 412.5h0M1166 246.5h0M1054 302h0M1238 443.5h0M1275.5 390.5h0M1208.5 398h0M1001.5 343h0M1198.5 337.5h0M1122.5 376.5h0M1284.5 260.5h0M1079 507h0M1134.5 523.5h0M1308.5 264.5h0M1105.5 447.5h0M1032.5 253.5h0M1305 450h0M976.5 247.5h0M926 385.5h0M1315 398h0M990.5 385.5h0M1109.5 435h0M1243 292.5h0M943.5 455.5h0M1319.5 332h0M1081.5 385h0M946 307.5h0M897.5 379h0M1109.5 417.5h0M1303.5 252h0M1181 502.5h0M1089 399h0M1064.5 374.5h0M937.5 450.5h0M954.5 405.5h0M966.5 469h0M1134.5 275.5h0M874.5 376.5h0M1105.5 448h0M912.5 393h0M1182 232h0M1198.5 301h0M935.5 432.5h0M1284 394.5h0M1057.5 526h0M1134 457h0M1047 302.5h0M902.5 372.5h0M1145 414.5h0M1331.5 375h0M1166 351h0M1276.5 425h0M1312 348h0M1190 310.5h0M1246 343h0M1029.5 347h0M1130.5 371h0M1019.5 518h0M1171 303h0M1055.5 335.5h0M1256 473.5h0M1002 256.5h0M927 399.5h0M1034 410h0M1016.5 300h0M961 382.5h0M896 341.5h0M1157 333.5h0M1292 304h0M1049.5 493.5h0M1130 336.5h0M992 237h0M1196 200h0M1096 263.5h0M1254 266h0M1088 236h0M1309.5 315h0M900 320h0M1075 321h0M986.5 369.5h0M1278.5 249.5h0M943.5 258h0M1041 431h0M966.5 293h0M1188.5 273.5h0M978 296.5h0M1273 411.5h0M1318.5 343.5h0M1345.5 367h0M1036 264.5h0M1183 505h0M1126 300.5h0M961.5 341.5h0M1036.5 397.5h0M1301.5 321.5h0M1024.5 508h0M960.5 273.5h0M1141.5 504.5h0M962.5 327.5h0M1274 361.5h0M867 366.5h0M926 336.5h0M1215.5 448.5h0M1076.5 404.5h0M1278 301h0M978.5 370.5h0M1186.5 495h0M1034 368.5h0M1083 430h0M1260.5 324.5h0M1095.5 398h0M1047 259h0M1145 411h0M1250.5 334h0M962 425h0M1158.5 349.5h0M1261 498h0M1220 481.5h0M1009 231h0M924.5 340.5h0M1047.5 313.5h0M1079 316.5h0M1283.5 379h0M978 365h0M1003 279h0M1211 371h0M946.5 282h0M1067 528.5h0M1316 317h0M1331.5 293h0M955 290h0M1288.5 297.5h0M918 415h0M1133.5 231.5h0M1135.5 366.5h0M1171 458h0M1285.5 477h0M881 334h0M1156.5 355.5h0M1168 332h0M1054.5 214h0M924 404h0M1000 438h0M1146.5 271h0M1244.5 515.5h0M1212.5 477h0M1069.5 259.5h0M1065.5 255h0M1081.5 413h0M1327 343.5h0M1176.5 473.5h0M1101 317.5h0M1158.5 353.5h0M934 238.5h0M1156.5 317.5h0M1333 399.5h0M1313 412h0M1270 470h0M926.5 269h0M985 346h0M1241 390.5h0M1034 462.5h0M971 284.5h0M1342 430.5h0M1196.5 257.5h0M947.5 282.5h0M1241.5 298h0M1279 432h0M1245.5 412h0M1229 492.5h0M1284 479h0M1196.5 263h0M1226 242h0M1054 494.5h0M1093 442h0M1318.5 339h0M891 377.5h0M1164 357.5h0M1205 497h0M986 484.5h0M1310 348.5h0M1030 451h0M1147 408.5h0M964 427h0M1058 430h0M886.5 362h0M1040.5 325.5h0M1271 393h0M1325 446h0M1338 360h0M1096 417h0M1198 201h0M1155 304.5h0M890 334.5h0M1209.5 505h0M943 318h0M1031 219.5h0M971.5 283h0M984 368h0M1285.5 350.5h0M1152 294.5h0M1078 501h0M1122 351.5h0M1003 226h0M1317.5 349h0M984.5 446.5h0M1277 435h0M1108.5 308h0M1307.5 306h0M1278.5 437h0M952 398.5h0M1199.5 240.5h0M1164 377h0M981.5 426h0M984.5 429h0M931.5 290.5h0M1188 240h0M1040.5 440h0M1020.5 377h0M1172 448h0M934.5 263h0M1239 409h0M1022.5 212h0M1021 290h0M1036.5 211.5h0M1127.5 423.5h0M1310.5 429h0M1221 280.5h0M912.5 366h0M1301.5 352.5h0M1246 341h0M1247.5 255h0M1147.5 488h0M885.5 335h0M1239.5 344.5h0M1252.5 342.5h0M1121 389.5h0M926.5 460h0M1266.5 301.5h0M1009 402.5h0M1240.5 282.5h0M1254 403h0M990 307h0M958 388h0M1207.5 383.5h0M1042.5 220h0M921.5 419.5h0M1042.5 232h0M1272.5 324h0M1056.5 477.5h0M1162.5 431h0M1087.5 202h0M1232 276h0M1021 331.5h0M1180.5 360.5h0M1211 323h0M1262.5 492h0M1271.5 274h0M1236 441h0M1241.5 521h0M1190.5 499h0M1154 496.5h0" stroke="#2469ae" stroke-width="6.6" stroke-linecap="round" opacity="0.5"/><path d="M1038 514h0M1021 516h0M1042.5 238.5h0M1083.5 373h0M1016 319h0M947.5 386.5h0M1021 362h0M1336.5 440h0M940 265.5h0M959.5 240.5h0M1145 443h0M919.5 252.5h0M1148 364h0M996 222h0M1115 277.5h0M1119.5 509.5h0M1338 341h0M1019.5 417.5h0M1345 345.5h0M1129.5 391h0M1176.5 401.5h0M1124.5 517h0M1243 390.5h0M1090.5 258h0M974 378h0M1217 449h0M1234.5 376.5h0M1035.5 219h0M1323 340h0M1229 440.5h0M1272 207h0M1298 274h0M882.5 393.5h0M908.5 404.5h0M1082 478h0M1278 260h0M1176 477h0M964 337h0M964.5 409h0M1211.5 490h0M1145 250h0M1253.5 424h0M1225.5 472h0M1158 334.5h0M991 432h0M1208 219h0M1070.5 468h0M1044 264h0M999.5 286.5h0M922 277.5h0M1217.5 429h0M933.5 394h0M1269 266h0M951.5 278h0M1267 267.5h0M1287 247.5h0M949.5 257.5h0M1077 422h0M1077 433h0M1130.5 244.5h0M1240 506h0M1076 285h0M1268 240.5h0M1222 442h0M1323.5 362.5h0M1199.5 436h0M1005.5 302.5h0M1152.5 456h0M1284.5 336.5h0M1143 391.5h0M970 284h0M996.5 413.5h0M1057.5 265.5h0M1057 448h0M1239.5 505h0M909.5 329.5h0M1107.5 390h0M1323 384h0M1305 265.5h0M1093.5 348h0M1098 342.5h0M1264.5 399.5h0M1143 521.5h0M1023.5 248.5h0M1136 235h0M1179 302.5h0M1227 255.5h0M933.5 332.5h0M998.5 504h0M1036 503h0M1094 297.5h0M966 255h0M1174 248h0M930.5 424.5h0M1264.5 378h0M1234.5 477.5h0M956.5 386.5h0M1081.5 224.5h0M875 363.5h0M1122 438h0M1299.5 472h0M1216 352h0M1175 344h0M1258 221.5h0M1256 226.5h0M909 272h0M1051.5 226h0M1160 309.5h0M960 377h0M1266.5 364h0M931.5 464.5h0M1229.5 475h0M989.5 366.5h0M1182.5 315h0M1109 471h0M1065 253.5h0M1086.5 337h0M915 271.5h0M1036.5 313h0M1066 355h0M1072 474.5h0M1334.5 416.5h0M1208.5 279h0M1046.5 383.5h0M1113.5 195h0M1081.5 476h0M998 386h0M1256.5 388h0M1314.5 300h0M1139 477h0M1071 488.5h0M931.5 257.5h0M1144 246.5h0M1122.5 263.5h0M1118.5 276h0M1121.5 385.5h0M1184 371h0M1243.5 420h0M1135 290.5h0M1089.5 456.5h0M1326 283h0M954.5 312.5h0M1275.5 434h0M1232.5 295.5h0M1335 396h0M1054.5 504.5h0M1272 379.5h0M1065 402.5h0M986.5 428h0M924 306h0M1081.5 456.5h0M1211 441h0M1154.5 322h0M983.5 453h0M1019 321h0M1330.5 367.5h0M1283 389h0M1172.5 448.5h0M1271 439.5h0M1139 392h0M1228.5 433.5h0M1027.5 318.5h0M1060.5 377.5h0M1326.5 325.5h0M1228.5 312h0M1220 244.5h0M1247 493.5h0M1150.5 412.5h0M1165.5 216h0M1039.5 217.5h0M1292.5 488.5h0M1018 474.5h0M1144 264h0M1182 352h0M1186 261h0M998.5 414h0M954.5 382.5h0M1208.5 335.5h0M1051.5 371h0M955.5 425h0M1131 456h0M1253 216.5h0M1176 442.5h0M926.5 240h0M924.5 327.5h0M1177.5 501h0M1091 441.5h0M1313 386.5h0M985 451h0M1266 491h0M1065.5 289h0M1117.5 460.5h0M1271 232.5h0M932.5 297h0M1151.5 352.5h0M971.5 292h0M963 419.5h0M972.5 271h0M1019 476.5h0M1063 473.5h0M1147.5 378h0M1052 311h0M1086 493h0M1001 361h0M1017.5 516.5h0M1125.5 390h0M1319.5 367.5h0M1080.5 250.5h0M964.5 394.5h0M940 247.5h0M1058 377.5h0M879.5 387.5h0M967.5 387.5h0M978.5 423h0M920 420h0M1079 390.5h0M1155 417h0M1020 453.5h0M1141.5 412h0M1193.5 517.5h0M1148 376.5h0M1335.5 336.5h0M1193 363.5h0M968 421h0M1165.5 440.5h0M1140.5 344.5h0M903 430h0M1236 308h0M910 414.5h0M1000 211h0M1014 291.5h0M985 234.5h0M965 394h0M996 397.5h0M1238.5 485h0M1335.5 336h0M1117 278.5h0M1136.5 497.5h0M1342 374h0M994 221.5h0M1330 308.5h0M1079 287.5h0M927 457.5h0M1041 271h0M993.5 413.5h0M942 284h0M1343 376h0M1010.5 314h0M986 450.5h0M1151 335.5h0M1166.5 298h0M1100 324h0M1219 484h0M1303.5 303h0M1337.5 337.5h0M1023.5 477.5h0M1143.5 372.5h0M1008.5 360.5h0M1217.5 195.5h0M1041.5 269h0M1024 400h0M1011.5 294h0M1281 332h0M1010.5 305.5h0M1052.5 508.5h0M1177 445h0M1153 495.5h0M1062 468.5h0M1069.5 364.5h0M1210.5 420h0M1038.5 244h0M1026.5 382.5h0M1053 438h0M1274 231.5h0M1137.5 529h0M1055 269.5h0M971.5 425h0M940.5 438h0M1061 430.5h0M1145 440h0M1038 200h0M1217.5 421.5h0M1346 368.5h0M1036.5 387h0M960.5 281.5h0M1226.5 217.5h0M1039 445h0M1239 502.5h0M1103.5 313h0M1174 296h0M1098 517h0M924 247.5h0M934.5 246h0M963.5 236.5h0M934.5 431.5h0M910.5 270h0M1227.5 287h0M1294 360.5h0M1151.5 301h0M1198.5 330h0M1210.5 441.5h0M1153.5 324.5h0M1087.5 531h0M976 321h0M1156.5 462.5h0M965 367.5h0M1096 440.5h0M953.5 246.5h0M1129 479h0M1248 227.5h0M1307 375h0M1189 341h0M1025.5 511.5h0M1240.5 248.5h0M1006.5 289.5h0M1142.5 224.5h0M1093.5 371.5h0M1303.5 459h0M1173.5 379.5h0M889.5 391h0M1128.5 404h0M1150 427h0M1293.5 308h0M1279.5 493.5h0M1194 383.5h0M877.5 380h0M1264 337h0M1221.5 350.5h0M1076.5 369h0M1180 298h0M966 396h0M1276.5 475.5h0M1061 261.5h0M1138.5 218.5h0M1019 304h0M1038 209h0M1168.5 242.5h0M881.5 390.5h0M1287.5 484h0M959 422.5h0M939 281.5h0M1082 254h0M1241 331h0M1059.5 252.5h0M1015 509h0M1068.5 328.5h0M1066.5 356.5h0M1138.5 314.5h0M976.5 395h0M1196 473h0M974.5 380.5h0M1228.5 341h0M1247.5 382h0M1258 342.5h0M1267.5 365h0M1140 350h0M906 335h0M1140.5 404h0M1074 508.5h0M916.5 302h0M955.5 315h0M1202 502.5h0M1130 356h0" stroke="#2469ae" stroke-width="6.6" stroke-linecap="round" opacity="0.5"/><path d="M1055.5 206.5h0M1239 284.5h0M1307.5 280h0M970 363.5h0M1218.5 319h0M1097.5 241.5h0M946 379h0M1128.5 520.5h0M1218.5 414.5h0M1113 445h0M930.5 299h0M1317.5 338.5h0M919 365h0M1276 386.5h0M1218 286.5h0M1036.5 276h0M1105.5 413h0M1198 310h0M1249 485.5h0M1293.5 330.5h0M989.5 264h0M1123.5 284.5h0M945.5 249.5h0M1160 515.5h0M1039 247h0M1004.5 439h0M979.5 368h0M936.5 357h0M1349 368h0M1260.5 315.5h0M1119 468h0M1053 496.5h0M867 372.5h0M1071 328.5h0M1272 404h0M1092 224.5h0M1206 362.5h0M1281.5 496.5h0M1050 332.5h0M1195 257.5h0M992 450h0M1196 386.5h0M922.5 254h0M987 384h0M999.5 235h0M1022 505h0M1059.5 390.5h0M1304.5 457.5h0M1250.5 397h0M1040 440.5h0M1083 457.5h0M926.5 254.5h0M995 237h0M1203 349.5h0M1153 460h0M1232 391.5h0M1129.5 249h0M1142.5 498h0M1077 466h0M901 410.5h0M901 391h0M1098.5 336.5h0M1037 375h0M923 261.5h0M1122.5 202h0M902 372.5h0M1050 446.5h0M1037 214h0M1126.5 384h0M1269 444h0M1286 254h0M976 443h0M947.5 270.5h0M1280.5 394.5h0M923 416h0M1225.5 490h0M1031.5 211.5h0M946.5 276.5h0M1113 454h0M1113 412.5h0M1134.5 383.5h0M911 372h0M1157 320.5h0M1115 465h0M1050 323h0M994 270h0M1077.5 341.5h0M1014 378h0M1159.5 496.5h0M950 309h0M1027 276h0M1060 491.5h0M1166 284h0M1130.5 392.5h0M1006.5 357h0M1051 206.5h0M1336.5 310.5h0M1292.5 267h0M910.5 456.5h0M1211.5 226.5h0M1267.5 241.5h0M1282 480.5h0M954.5 280h0M931 453.5h0M932.5 259h0M984.5 253h0M1278.5 343h0M1281.5 499h0M1240.5 439.5h0M1094.5 378.5h0M1021.5 230.5h0M1152.5 221.5h0M1117 409h0M945 373h0M1099.5 351h0M1088.5 476.5h0M1071 220.5h0M1167.5 412.5h0M1341 360h0M1054.5 473.5h0M1089 367.5h0M991 401.5h0M1296.5 454h0M1296.5 326h0M1037.5 419h0M1255.5 443.5h0M1166 398h0M948.5 415h0M1241.5 377.5h0M1261 385h0M1019 290.5h0M1124 521.5h0M1036 506.5h0M1167 345h0M1018 510h0M1222 313.5h0M1159.5 353h0M1220 324h0M1118 229.5h0M972.5 494.5h0M927 395.5h0M1317 312h0M1057 470.5h0M1117 387.5h0M1345.5 377h0M1076 368h0M1135 457.5h0M1314 400h0M1329.5 443h0M1281 263h0M1276 336h0M1184 528h0M959.5 418h0M1201.5 433h0M946 270h0M1128 360h0M1107 407h0M928.5 428.5h0M1263.5 227h0M1173.5 524h0M944 401h0M1107.5 331.5h0M925 349h0M1014.5 300.5h0M1291 349.5h0M1160.5 295.5h0M1198 321.5h0M1276.5 294.5h0M1023.5 223h0M1236 291h0M1259 266h0M873.5 374h0M1181 528.5h0M1002.5 302h0M1079 521.5h0M876 396h0M1200 200h0M1237.5 414h0M1148.5 405h0M914.5 339.5h0M987 351.5h0M1192 486.5h0M941.5 313h0M1249 414.5h0M1129.5 399h0M1331.5 427.5h0M1182 376h0M1292 360.5h0M1214.5 442.5h0M977.5 242h0M1251 453h0M1243 424h0M1250.5 372.5h0M1116 382h0M930 277.5h0M1222.5 293.5h0M1229 386h0M1016.5 281h0M941.5 262.5h0M1057.5 370h0M1304.5 314.5h0M1182 510h0M1225 313.5h0M1285 377h0M1212.5 469.5h0M1103 395.5h0M1065.5 383.5h0M1302.5 365h0M1105.5 378.5h0M1042.5 423h0M965.5 373h0M1287 348.5h0M1139 510h0M1267.5 378h0M1168 423h0M1317 447.5h0M1276 450h0M979 223.5h0M1267 256.5h0M1200.5 382.5h0M1261 385h0M1273 420h0M1124.5 198.5h0M1223 401h0M992 433.5h0M1026 250.5h0M1008.5 360h0M1165 508h0M1077.5 367h0M975 242.5h0M1005 307h0M1084 345h0M1135.5 417h0M1032 379.5h0M1065 474h0M1247 413h0M1159 526.5h0M1310 313.5h0M1205 397.5h0M905.5 346.5h0M1076.5 531h0M999.5 381h0M1093.5 449.5h0M1293 306.5h0M927 335.5h0M1174.5 482.5h0M1001.5 366h0M1142.5 480.5h0M1001 472h0M1082.5 489.5h0M978 382h0M1302.5 446h0M880.5 368.5h0M993 237.5h0M1270 395.5h0M1216.5 503.5h0M1070 281h0M1115.5 462.5h0M1141.5 536h0M907.5 370h0M919.5 443h0M1083.5 457.5h0M1316 425h0M950 270.5h0M1253.5 498h0M923.5 270.5h0M1263 397.5h0M1007 436h0M1097 257h0M1117 222.5h0M965.5 389.5h0M1279 509h0M1316 270h0M1316.5 439.5h0M1244 376.5h0M1067.5 368h0M1220 336h0M1063.5 448.5h0M1119 200.5h0M1172.5 255h0M974 292.5h0M930.5 383h0M1002.5 502.5h0M1030 271.5h0M1113.5 280.5h0M1248 288.5h0M1347.5 438.5h0M1025 212h0M1126.5 252.5h0M943 450.5h0M1198.5 258.5h0M1173.5 508.5h0M1284 329.5h0M1175.5 442.5h0M1058.5 288h0M1167 347h0M1157 299.5h0M899 363.5h0M1285.5 295h0M936 390.5h0M1020.5 419h0M1008 339.5h0M1277.5 502.5h0M1257 421h0M1270.5 323h0M1251 371.5h0M1018 477h0M1330.5 360h0M1062 437.5h0M1140.5 404h0M1099.5 325h0M971.5 450.5h0M1123.5 195h0M1139 376h0M1314.5 339h0M1280 437.5h0M1247.5 390.5h0M988 387h0M1116.5 461.5h0M1131.5 464h0M1193 494h0M1050.5 446h0M948.5 262.5h0M1071.5 477.5h0M1086 275h0M984.5 352h0M1120.5 467.5h0M1214 248h0M1000.5 328h0M948.5 269h0M1135 212h0M1215.5 305h0M1082.5 433h0M1331 288.5h0M996 365h0M1039 315.5h0M1331 339h0M1173.5 513h0M996.5 333.5h0M1206.5 402.5h0M1144.5 361.5h0M1128 331h0M1003 424h0M939 322.5h0M1239 274h0M1166.5 363h0M1051.5 211h0M1230.5 514h0M1240 227.5h0M1345 431.5h0M1288.5 448.5h0M1130.5 453.5h0M963.5 487.5h0M999.5 449.5h0M1172.5 323.5h0M1072 410h0M1282.5 289.5h0M1257 469h0M1183.5 450h0M1171.5 208.5h0M1130.5 491.5h0M1112.5 423.5h0M1193.5 238h0" stroke="#2469ae" stroke-width="6.6" stroke-linecap="round" opacity="0.5"/><path d="M1030.5 341.5h0M937.5 343h0M959 342.5h0M1132 461.5h0M1027.5 399.5h0M1244.5 234.5h0M954 409.5h0M1304.5 317h0M1128.5 447.5h0M1282 510.5h0M1072.5 268.5h0M1158 227.5h0M1040 438h0M969 451h0M1256 476.5h0M1311.5 468.5h0M1269 416h0M1292 454h0M1199 316.5h0M1150.5 300h0M1110.5 404h0M1070.5 319.5h0M1120.5 238.5h0M1115 411.5h0M1072 436h0M956 403.5h0M914.5 416h0M1071.5 482h0M1031.5 438.5h0M1180.5 441.5h0M1186 200.5h0M1293 351.5h0M1032 209h0M1202.5 396h0M1032.5 396h0M985 334.5h0M1030.5 386h0M1310.5 454h0M938 221h0M1264.5 403h0M945 399h0M940.5 380.5h0M922.5 359.5h0M1275.5 237h0M1065.5 475.5h0M921 438.5h0M1083.5 297h0M1237 330.5h0M1048 499h0M1059 215h0M987.5 435.5h0M1039.5 214h0M1086.5 407h0M933.5 239.5h0M1210 398h0M1222 314.5h0M929.5 292.5h0M923.5 250.5h0M1064 275h0M1349.5 346.5h0M947 262h0M1031 462.5h0M1137 250h0M1224.5 298.5h0M1174.5 453h0M1247.5 485h0M1349 345h0M1256 255h0M1055.5 257h0M917.5 423h0M1145 323h0M1195.5 399h0M1302 284h0M1238.5 317.5h0M924.5 254h0M960 395h0M1080 483.5h0M974.5 350h0M1130 203h0M1078.5 215h0M1150 310.5h0M1071.5 343.5h0M975.5 327.5h0M1007 428.5h0M1246.5 460h0M1116.5 393h0M1056.5 458.5h0M896.5 413h0M1285.5 309.5h0M1044 308.5h0M936.5 306h0M1074 391h0M1333.5 394.5h0M1273 397.5h0M1211.5 358h0M1116.5 247.5h0M954.5 374h0M1281.5 336.5h0M1260 366h0M1135 450h0M997 282h0M1266 424.5h0M1198.5 246h0M1205 418.5h0M1069.5 486.5h0M1017.5 463h0M1261 224h0M1043.5 335h0M1260.5 493h0M990.5 426h0M1324.5 287.5h0M1319.5 345h0M1209.5 225.5h0M1067.5 395h0M1176.5 367.5h0M952.5 442.5h0M1039.5 284.5h0M1001.5 340.5h0M1316 368h0M998 327.5h0M1010 304h0M1267 373.5h0M1142 216h0M1308 461h0M1272 362h0M894.5 335h0M1007 473.5h0M988 432h0M1134.5 447.5h0M1347 334.5h0M1160.5 386.5h0M1293 245.5h0M1096.5 332h0M1123 415.5h0M1208 397h0M1261.5 310.5h0M1108 278.5h0M1059 442h0M1171 267h0M1097.5 527.5h0M977.5 432.5h0M1094.5 353h0M1104.5 304h0M1277.5 487h0M1208 408.5h0M1024 212.5h0M1303 382.5h0M960 376h0M1066 310.5h0M1139 255h0M1128 453h0M1181.5 516h0M1261 364.5h0M926 241h0M1182 282.5h0M1106.5 356.5h0M1009.5 294.5h0M984 485.5h0M1087.5 515h0M987.5 445h0M888.5 372.5h0M1215.5 367.5h0M973.5 476h0M1285.5 405.5h0M1178.5 481h0M968.5 231.5h0M1139 412h0M952 226.5h0M1125.5 442.5h0M1000.5 513h0M1176.5 222h0M1043.5 491h0M969.5 470h0M1033.5 205h0M1034.5 417h0M1099 426h0M1138.5 421h0M1264.5 237h0M1189.5 360h0M1027.5 372.5h0M1282 339.5h0M989.5 308h0M996 469h0M1072 250.5h0M1315.5 280.5h0M1070 464.5h0M1178.5 258.5h0M1189 208h0M1145.5 520.5h0M951.5 440.5h0M1130 489.5h0M1133.5 403h0M1261 244h0M1076 330h0M1146 373.5h0M1174.5 394h0M952.5 440h0M1017 303.5h0M1125 486.5h0M994 288h0M1035.5 276.5h0M942.5 369h0M1130 431.5h0M1036.5 342h0M1333 369.5h0M1022 257.5h0M1221.5 478.5h0M1101.5 284h0M1020 484.5h0M1268 494.5h0M1132.5 369.5h0M1240 330.5h0M1187 518.5h0M1240 322.5h0M1140.5 483h0M1020.5 217.5h0M1264.5 302h0M952 245h0M1249.5 421.5h0M1035 373h0M958 382.5h0M1108 397.5h0M1128.5 393h0M1033 417h0M1317.5 340h0M1103.5 424h0M1194 324.5h0M1266 465h0M1077 422.5h0M1117 307.5h0M1180 514.5h0M894.5 319.5h0M1190 394h0M1319 278.5h0M1136 227h0M1277 508h0M980.5 220h0M904.5 294.5h0M1243.5 221.5h0M933 385h0M1082 292h0M1045 299.5h0M1264 275.5h0M1168.5 340.5h0M931 445h0M889 374h0M1051.5 485.5h0M1165.5 514h0M939.5 424.5h0M1053 444h0M1269 263h0M1006.5 304h0M1181.5 233h0M1117.5 261h0M1055.5 481h0M1171 277h0M1130.5 432.5h0M980.5 430.5h0M1268 401h0M1271 406h0M1062.5 470.5h0M1107 245h0M1029.5 213.5h0M1309.5 453h0M1245 322.5h0M1134 404.5h0M970 460.5h0M1229 347h0M1049 500h0M1342.5 323.5h0M1181 303.5h0M1146 388.5h0M1263 238h0M1130 374h0M960.5 433h0M1088 451.5h0M1054.5 426h0M1148 367h0M1134 269.5h0M1178 490h0M982 465.5h0M1292 252h0M1229.5 225h0M1008 297h0M899 308h0M1211 427h0M1267 463h0M998 360h0M994.5 468h0M1276 299h0M1086.5 232.5h0M1159 406h0M942 328h0M1068 297h0M1174.5 443.5h0M1179.5 277.5h0M1304.5 445.5h0M1199 430h0M1119 517.5h0M1216 407h0M1241 492h0M1011 380h0M970 343h0M1136 251.5h0M1063.5 470.5h0M1081 435h0M999.5 307.5h0M1042.5 422h0M1179 524.5h0M1205 483.5h0M1335 351h0M1138 356.5h0M1113 347.5h0M1285 395h0M1148.5 316h0M1104.5 509h0M1239 395.5h0M937 459h0M1115 233h0M1250.5 367.5h0M1078 432h0M1053.5 537h0M1113 410h0M1052.5 291.5h0M1329 367.5h0M1003.5 507.5h0M1318 390h0M1335 372.5h0M1163.5 495h0M1160.5 517.5h0M1243 465.5h0M1242 370.5h0M979.5 245.5h0M919.5 303.5h0M1006.5 487.5h0M1229.5 350h0M1220.5 233h0M1039 466.5h0M1092 445h0M1300.5 357.5h0M1241 432.5h0M987 278.5h0M1300 427h0M1272.5 430.5h0M1200 216h0M921.5 448h0M1273 399h0M1000 485.5h0M1162.5 473.5h0M1079.5 537h0M1332 456.5h0M1250 509h0M1160.5 496h0M972 472.5h0M1042 284h0M929.5 466.5h0M951 374.5h0M922.5 406.5h0M1183.5 301.5h0M1038.5 243h0M1132.5 381.5h0M1003 235.5h0M1274 446.5h0" stroke="#2469ae" stroke-width="6.6" stroke-linecap="round" opacity="0.5"/><path d="M1171.5 244h0M928 250h0M1087 342.5h0M1254 388h0M1203.5 468h0M1079.5 463h0M1250.5 485.5h0M1113 331.5h0M1041.5 335.5h0M925 363h0M946.5 345h0M1113.5 458h0M1291 244.5h0M1241 329h0M1039.5 444h0M1083.5 310h0M1305 348h0M1041 312h0M1130.5 242h0M1188 463h0M1121 408.5h0M1149 347.5h0M927.5 450h0M986 250h0M1175 270h0M1294 451.5h0M1216 405.5h0M989 464.5h0M964 382.5h0M1049.5 217h0M1220 402.5h0M1257.5 237.5h0M1241 369h0M1242 407.5h0M1274 278h0M1163.5 296h0M1065 216.5h0M1156.5 326.5h0M944.5 458.5h0M1114.5 229.5h0M1059 215.5h0M906.5 370.5h0M1115.5 532h0M1183 397h0M1158 339h0M1132 380.5h0M1068.5 389h0M932.5 330h0M978 393.5h0M1153 391.5h0M1278.5 484h0M1229 346.5h0M1179 256.5h0M1325 343.5h0M1005.5 505h0M1178 295h0M1112.5 351.5h0M1047 380h0M1214 284.5h0M965 450.5h0M1236 511.5h0M1098 305h0M1228.5 384h0M1092.5 515.5h0M1183.5 303h0M1014.5 333.5h0M1212 497h0M1320 402h0M1350 365.5h0M1092.5 261h0M1259.5 274h0M1119.5 391.5h0M1181.5 432h0M1079.5 213h0M1071.5 391.5h0M1287 268h0M1024.5 490.5h0M1244.5 523h0M1126.5 428.5h0M991 347.5h0M1187.5 249h0M1260.5 498.5h0M1078.5 335.5h0M1176.5 316.5h0M1219 356h0M937 368.5h0M1042 379h0M1155 199.5h0M1286.5 324h0M1275 281.5h0M1069.5 484h0M970 408.5h0M919.5 447.5h0M1005.5 275h0M1239 232.5h0M937 255.5h0M1189.5 437h0M1115 287.5h0M1215.5 501.5h0M1134.5 407.5h0M946.5 371.5h0M1037 432.5h0M1018.5 326.5h0M1031 436h0M1032.5 216.5h0M948.5 257h0M1051.5 418h0M1006 451h0M1165 491h0M1093 281h0M1067.5 489h0M1221.5 431.5h0M1250 218h0M1215 230.5h0M1161 344h0M962 313.5h0M1188 221.5h0M956.5 410h0M1095.5 472h0M1059.5 206.5h0M1279 445h0M1116.5 390h0M1137.5 422.5h0M1101.5 261.5h0M979.5 447h0M1310.5 389h0M1266.5 397.5h0M1006.5 461h0M1081.5 304.5h0M1037.5 384.5h0M1011.5 325.5h0M1134.5 347.5h0M1092.5 255.5h0M1244.5 380h0M1241 244h0M955.5 471h0M1110.5 508h0M1117 234h0M987 221.5h0M963.5 369.5h0M913.5 458h0M1143.5 280h0M1020 334h0M1089.5 235.5h0M999.5 431.5h0M1032.5 407.5h0M1071.5 212.5h0M974 426.5h0M1013.5 321h0M969.5 434h0M1274 517h0M1325.5 366h0M1090 402.5h0M1141 528.5h0M1307.5 341h0M1129.5 268.5h0M1244.5 411h0M1040 246h0M1196.5 196.5h0M1275 415h0M1227.5 425.5h0M1171 445h0M1094 371h0M1199.5 420h0M1031 217h0M1190.5 458.5h0M941 312h0M1053 462.5h0M1199 255h0M904.5 399.5h0M1138 255h0M1267 352.5h0M1262.5 501h0M1281.5 488h0M1167.5 321.5h0M1269.5 504.5h0M1057.5 295h0M883.5 376h0M1081 296h0M1004 250.5h0M1167.5 350h0M1096.5 449.5h0M1027.5 435h0M1197 464h0M1222.5 496h0M972.5 440.5h0M1055 206h0M1258.5 209h0M1232.5 515.5h0M929.5 335.5h0M934 464h0M1019 300h0M1005.5 380.5h0M1131 452.5h0M1238 360h0M1020 330.5h0M1055.5 520h0M984 342h0M1219.5 428h0M1156.5 508h0M975.5 216.5h0M1032 481.5h0M1183 352h0M935 352.5h0M1134.5 531.5h0M905 378h0M1146 499.5h0M958.5 427h0M1331.5 316.5h0M1278.5 396.5h0M1305 403h0M1331 455h0M1239 388.5h0M1301.5 361.5h0M1060 252.5h0M935.5 340h0M1272.5 348h0M1215 319.5h0M1186 431h0M1004.5 316.5h0M991 490.5h0M1021.5 523.5h0M1310.5 347h0M1041.5 338.5h0M939.5 230h0M1082.5 468.5h0M1029 475.5h0M1260.5 378.5h0M992 411h0M1324.5 347.5h0M1040.5 491h0M1053.5 361h0M1000 237.5h0M930 349.5h0M1295 337.5h0M1018 225.5h0M1141 407.5h0M972 319.5h0M1143 392h0M1193.5 359h0M1159 332.5h0M1040 238h0M1160 384.5h0M1218.5 374.5h0M1143 400.5h0M1326 437.5h0M1074 428h0M1238.5 317.5h0M1018 467h0M928 330h0M1312 386.5h0M1197 353.5h0M1069 467h0M1218 194.5h0M1136 415h0M1044 339h0M1224.5 384.5h0M1076 431.5h0M1005.5 486h0M973.5 241h0M1260.5 367.5h0M1139.5 483h0M1268 233h0M1063 425h0M1048.5 209.5h0M994.5 234.5h0M1337.5 372h0M1273.5 395.5h0M1250 211h0M993.5 229h0M1227.5 292h0M1112.5 447h0M921.5 364.5h0M1016.5 519h0M1049.5 466h0M1273 276.5h0M925.5 247h0M1299.5 319h0M1182 375h0M1336.5 366h0M1287.5 494h0M1031 358h0M947.5 343.5h0M1014.5 281.5h0M1095 222h0M931.5 266h0M1309.5 304.5h0M1230.5 446.5h0M1180.5 318.5h0M1108 193.5h0M1072 330.5h0M1180.5 375h0M944.5 294.5h0M1058 492h0M1077.5 483.5h0M1221 513.5h0M1073.5 540h0M1071 473.5h0M1153.5 404h0M934.5 479h0M927 393.5h0M1024 429.5h0M1054 293.5h0M897 402.5h0M954 433h0M963.5 283.5h0M1078.5 460h0M1016 519h0M1022 387h0M1333.5 445h0M1180 390h0M1054 494h0M1158 496h0M1047.5 300h0M1228 228h0M1141.5 295h0M1136 432.5h0M1084 342h0M966 448h0M1043.5 408h0M1179 357h0M1163 470h0M1198 364h0M1257 386.5h0M1131.5 335h0M969.5 468.5h0M1234 271h0M938.5 378.5h0M1150.5 406h0M936.5 315.5h0M1224.5 315.5h0M884 369.5h0M1131.5 421h0M1058.5 495.5h0M1049 263h0M1326 358h0M1288 473.5h0M1052 236.5h0M1217 287.5h0M1282.5 239h0M1066 360.5h0M1195 472.5h0M997.5 252.5h0M1101.5 269.5h0M1059.5 469h0M979 393.5h0M1046 491.5h0M961 258.5h0M1091.5 379h0M1234 264.5h0M958 217.5h0M1099 406h0M963 374.5h0M945.5 367.5h0M1036 416h0M1171 461h0M1040.5 486.5h0M1297 315.5h0M1060.5 437.5h0M1135.5 512.5h0M1050 377.5h0M1188 361.5h0M1194 214h0" stroke="#2469ae" stroke-width="6.6" stroke-linecap="round" opacity="0.5"/><path d="M1057 501.5h0M1019.5 521h0M1130 295.5h0M1176.5 288h0M1117 376h0M1193.5 344.5h0M1220 455.5h0M1046.5 372h0M1217 495.5h0M1036.5 229.5h0M1168 529h0M1213.5 326.5h0M1215.5 357h0M1270 430.5h0M921.5 467.5h0M1342.5 371h0M1085 406h0M1049.5 500.5h0M928 315h0M1021 284h0M1132 242.5h0M917 451h0M1104.5 320.5h0M1211.5 408h0M934.5 361h0M969 242.5h0M1110.5 305.5h0M1287 444.5h0M1248 466.5h0M915 425h0M1045.5 327h0M1082 290.5h0M1325.5 347h0M939 240h0M1208 299.5h0M926.5 455.5h0M1151.5 403h0M1326 323.5h0M1158 244h0M1009.5 365.5h0M965.5 384.5h0M949.5 258.5h0M1003.5 456h0M995.5 253h0M888.5 347.5h0M927 400.5h0M1012 385h0M964.5 379h0M1236 307h0M1172.5 381h0M1094.5 308h0M1206 382h0M986 252h0M1205.5 235h0M935 426h0M1227.5 451h0M1227 219.5h0M1216.5 424.5h0M1165 249.5h0M1139 509.5h0M1077.5 290.5h0M1235.5 361h0M1264 334.5h0M1008.5 293.5h0M1145 310.5h0M1027.5 424.5h0M1136.5 296.5h0M1251 371.5h0M1084 470h0M1012 402.5h0M1262.5 360.5h0M908 431.5h0M1303.5 420.5h0M1116 409.5h0M973 326.5h0M937.5 299.5h0M975 274.5h0M1270 425.5h0M960.5 269.5h0M1177.5 371.5h0M1102 530h0M1052.5 429h0M1141 487h0M1306 315h0M914.5 366h0M1143 483h0M1294 250h0M1097.5 261.5h0M1033.5 483h0M1173 353h0M1225.5 400.5h0M995 464.5h0M1049.5 370h0M1028 206.5h0M1011 426.5h0M1065 478h0M990 394h0M893.5 329.5h0M1157.5 201h0M1199 242h0M1147.5 408.5h0M1205.5 234.5h0M1043.5 246h0M1336 292.5h0M1092.5 349h0M1094.5 473.5h0M917 359.5h0M1194 398h0M905.5 355h0M980.5 252h0M1293 418h0M1175.5 448h0M991.5 498h0M1342 418.5h0M1093.5 526.5h0M1022.5 284h0M1335.5 358.5h0M1271 212.5h0M1352 389h0M1272.5 348.5h0M959.5 445.5h0M1206.5 214.5h0M1115 491h0M1106.5 336h0M926.5 348h0M1149.5 226.5h0M1039 441h0M959.5 360h0M1182.5 397h0M1298 437.5h0M1042.5 286h0M985.5 344h0M1241 484h0M1230 487.5h0M998.5 295.5h0M1258 343h0M1185.5 385.5h0M1197.5 367h0M956 333h0M1014.5 284h0M1003 250h0M1070.5 310h0M1172 225.5h0M1039 248.5h0M1217.5 396.5h0M1039 523h0M1158 410.5h0M1326 430.5h0M1327.5 426h0M1276 421h0M1036 200.5h0M1126 313.5h0M1115 407h0M946.5 463.5h0M1123.5 407h0M1060.5 205.5h0M1288 490.5h0M1030 513h0M989 446.5h0M1207.5 196h0M988.5 435h0M1109.5 522h0M1131.5 425h0M1135 508.5h0M1311 389h0M999.5 483h0M1117.5 243.5h0M1035.5 256h0M1137.5 482h0M1320 339.5h0M1108 493h0M1213 407.5h0M986 356.5h0M981.5 444h0M1085 461h0M1142.5 313h0M1242 515h0M1039 310h0M949 382.5h0M1031.5 414h0M1201 400h0M1285.5 479.5h0M926 251h0M1274 423.5h0M1291 490h0M1321 378.5h0M1295 410h0M1154.5 365h0M1092 291.5h0M1093 290h0M1008 513h0M1162 244h0M1289 381.5h0M943.5 308h0M1106.5 498h0M1281.5 397h0M993 208h0M1116.5 190.5h0M1001 340.5h0M1152 531.5h0M1205.5 259.5h0M1130.5 426.5h0M1119.5 361h0M1239 458.5h0M1053 270.5h0M1066.5 239h0M1154 419h0M1169 518h0M1165 511.5h0M1234.5 396.5h0M1064 359.5h0M904.5 378.5h0M1055 214h0M1087 529.5h0M1019.5 333h0M984 475h0M923.5 398.5h0M944 375.5h0M1065 475.5h0M1157 330.5h0M985.5 299.5h0M1209.5 492.5h0M1231 390h0M1046.5 381h0M1134.5 259.5h0M964 465h0M1024 355h0M1237.5 315.5h0M1012.5 358.5h0M1266 493.5h0M1280 433h0M1051.5 488.5h0M1274 487h0M1243 277.5h0M1125.5 530h0M1040.5 251h0M1073 227.5h0M1056 509.5h0M1258 334h0M1229.5 445.5h0M957.5 425.5h0M1246.5 289h0M1289.5 479.5h0M1216.5 199.5h0M1108.5 528.5h0M1180.5 324h0M1212 430h0M1226.5 485h0M1278.5 395.5h0M1225 411.5h0M1210 260.5h0M1218.5 415.5h0M1041.5 422.5h0M1004.5 375.5h0M1003 364h0M1088 200.5h0M1171 374h0M939 417.5h0M1088 340h0M1137.5 476.5h0M1171.5 346h0M941.5 282.5h0M934 406h0M909 377h0M1261 480.5h0M1169 295h0M979 411.5h0M1201.5 250.5h0M902.5 378h0M1046 401h0M949.5 241h0M982.5 450h0M1294 282h0M1261.5 244.5h0M1028 452h0M1137.5 380.5h0M1032 419.5h0M1083.5 537.5h0M949 265.5h0M991.5 451h0M970.5 477h0M1165.5 444.5h0M1155 352.5h0M997 337.5h0M985 347.5h0M1123 470h0M1272.5 285.5h0M965 307h0M1130 228.5h0M1029 255.5h0M1279.5 335h0M1243 381h0M1276 398h0M969.5 453h0M1305.5 309.5h0M1070.5 452h0M1255.5 496h0M1074 288h0M921.5 367h0M1066 494.5h0M1196.5 237.5h0M1108.5 417.5h0M1219 508h0M1224 221.5h0M1088 447h0M1107 343.5h0M1265 402.5h0M1258 395.5h0M959.5 372h0M953 443.5h0M1269.5 398h0M1055.5 278.5h0M953 298.5h0M1275.5 378h0M1021.5 455h0M1270 268h0M1108 396.5h0M971 265h0M1099.5 284.5h0M1229 414h0M1226.5 290.5h0M1182.5 299.5h0M992.5 328h0M1165 233.5h0M900 395h0M1320 278h0M1205.5 462h0M1221.5 317h0M1198.5 196.5h0M1201.5 460.5h0M1294 442.5h0M1249 329h0M1261.5 352h0M1112 206h0M1169 353h0M1056 360h0M1246.5 281.5h0M1022 418.5h0M1197.5 453h0M1239 382.5h0M963 285h0M969.5 290.5h0M901 349.5h0M1199.5 205h0M1038.5 330h0M1157.5 398.5h0M985 259h0M1081.5 363.5h0M1003 466.5h0M1030.5 266h0M955.5 410.5h0M958.5 287h0M1167 239h0M1237 367.5h0M1203.5 465.5h0M1088 265.5h0M1197.5 388.5h0M952.5 344h0M1113 192h0M1128.5 426.5h0M944 259.5h0M1164 523h0M1039 410.5h0" stroke="#2469ae" stroke-width="6.6" stroke-linecap="round" opacity="0.5"/><path d="M1055.5 525.5h0M1062 495.5h0M1132.5 367h0M1150 495.5h0M1223 428.5h0M1224 387.5h0M1012 401.5h0M986.5 227.5h0M990.5 340.5h0M1343.5 366.5h0M978 435h0M1022.5 232h0M1052 217h0M992.5 332.5h0M922.5 326h0M1297 404.5h0M1020.5 319.5h0M1217 492h0M1235.5 271h0M1331 418h0M1219 517.5h0M970.5 492.5h0M1204.5 472h0M1226 432h0M1286.5 364.5h0M1044.5 373.5h0M954 382h0M1198 488.5h0M960 325h0M1233 221.5h0M1078 244h0M975 238h0M1161.5 331.5h0M1292.5 474h0M988 350.5h0M960 451.5h0M1007.5 464.5h0M1343 437h0M1297 401.5h0M1002.5 408.5h0M1050.5 492h0M984 344.5h0M1137 383.5h0M1151.5 334.5h0M1007 219.5h0M1344 433h0M950 253.5h0M1070 520h0M1300 393h0M1050 433.5h0M1073 261h0M939 338.5h0M1215.5 516.5h0M927 270.5h0M976.5 294.5h0M1037 319h0M1020.5 290h0M964 406h0M1129 397.5h0M1353.5 382h0M1213 430.5h0M1169 525.5h0M1131 494.5h0M1263.5 238h0M884.5 363.5h0M1293.5 283h0M1162 413.5h0M1041 458.5h0M1134.5 476.5h0M1057 276h0M1303 433h0M957 459h0M1324 319h0M939 262h0M1318 317h0M1109.5 226.5h0M931 329h0M976 497h0M1039 215h0M1265.5 292h0M1072 202h0M1140.5 411h0M964.5 215.5h0M1284 433h0M1124.5 339h0M1157.5 331h0M1087 347h0M1304.5 366h0M963 387h0M879 383h0M995 488.5h0M1209.5 221.5h0M1114 341h0M1259 343h0M1114 290.5h0M1071.5 199h0M1193.5 351.5h0M1130 513.5h0M1144.5 497.5h0M928.5 455h0M1116 316h0M1168 462.5h0M1019.5 420.5h0M1167 370.5h0M1253 210.5h0M1130 375.5h0M988 440h0M1110.5 460h0M1311 406.5h0M1322.5 296.5h0M898 375h0M961 234.5h0M1216 329.5h0M1031.5 417h0M1196 248h0M1086.5 240.5h0M984 397.5h0M1119.5 503h0M911 329h0M1175.5 384h0M1334.5 355h0M943 471h0M1258 385h0M1287.5 369h0M1072 380.5h0M1104.5 411.5h0M1241 283.5h0M1189.5 397.5h0M1110 316.5h0M1040.5 395h0M1049.5 242h0M1164.5 382h0M1060 528h0M924 323.5h0M1112.5 312h0M1266 393h0M1020.5 335.5h0M896.5 396.5h0M1086.5 424.5h0M1228.5 462h0M932.5 349.5h0M1176.5 451h0M1098 320.5h0M1110 488.5h0M1256 375h0M1174.5 478h0M1110 445h0M1087 394.5h0M1065.5 208h0M892 381h0M1129 366.5h0M878 369.5h0M1047.5 333h0M1155.5 335h0M900.5 315.5h0M1329.5 432h0M1090 517h0M978.5 386.5h0M1191 351.5h0M1124.5 196.5h0M1249 322.5h0M1181 475.5h0M1161.5 324.5h0M921.5 351h0M1241.5 301h0M1090 256.5h0M1079 517.5h0M1243 379.5h0M1191 330h0M948 464.5h0M1022.5 378h0M1170.5 466h0M1122 404.5h0M1258 438.5h0M1108 428h0M1135.5 350.5h0M1138.5 368.5h0M1284 352h0M1104 463.5h0M1085.5 323h0M961 434h0M1295 319h0M1159 357.5h0M1274 476.5h0M1223 215h0M1094 258h0M1017.5 438.5h0M933 265.5h0M1246.5 270h0M1092.5 384.5h0M1194 444.5h0M949.5 245h0M1037 245.5h0M1229 282.5h0M1102 468h0M1134 471h0M905 383.5h0M1170.5 211.5h0M1031 275.5h0M992.5 357.5h0M1292 323.5h0M1143.5 226h0M925 238h0M1056.5 471h0M1061.5 258.5h0M1230 365h0M1279 479.5h0M1282.5 481.5h0M1062 301.5h0M1328.5 371h0M1097.5 287.5h0M1287.5 484.5h0M1081 242.5h0M1184.5 501.5h0M883.5 337.5h0M1086.5 322h0M1339 437.5h0M938.5 281h0M953 342.5h0M1258.5 524h0M1191.5 226.5h0M1226 329h0M1293 390h0M1216.5 252h0M929 451h0M906 363h0M1060.5 476h0M1016 219h0M1033 433.5h0M1284.5 256.5h0M1149.5 456.5h0M1049 366.5h0M1097 316.5h0M1252.5 487h0M1006 512.5h0M936.5 232h0M1038 345h0M1260 337.5h0M938.5 367.5h0M1159 497.5h0M1169.5 205.5h0M1177.5 209h0M1180.5 364h0M1105.5 393h0M1286 286h0M980.5 408h0M1128 308.5h0M889 377.5h0M1105.5 454h0M925 304h0M1275 442.5h0M1063 290h0M1179.5 414h0M1112 459h0M1243.5 480.5h0M988 308h0M977 288h0M1227 348h0M1056.5 296.5h0M990 288h0M1066 224h0M901 356.5h0M995.5 492h0M1202.5 398.5h0M905.5 418.5h0M1171.5 406.5h0M1026.5 355.5h0M1072 211h0M1186.5 347h0M962 438h0M1344 400.5h0M1197.5 218.5h0M1061.5 304.5h0M1029 311.5h0M1263 339h0M1256 374h0M1182 250h0M1260.5 225h0M1269 407.5h0M1021.5 519h0M938 295h0M912.5 413h0M1266.5 478h0M1168 327h0M1272.5 396.5h0M1277.5 496.5h0M1196.5 353h0M1094.5 480h0M1152.5 416h0M959.5 462h0M1199.5 378h0M1262.5 258.5h0M966 333h0M1152 334.5h0M1093.5 496.5h0M1034 379h0M1162.5 462.5h0M1143 489.5h0M1001 465.5h0M1310 452h0M990.5 277h0M1095.5 375.5h0M1140 429h0M1214 503h0M976 331.5h0M1144.5 439.5h0M1058.5 368.5h0M1202 249h0M920 427.5h0M1129 387h0M1272 273.5h0M1030.5 253h0M940.5 362h0M1308.5 286.5h0M1345.5 385.5h0M1067.5 297.5h0M1121 227.5h0M1282 235.5h0M1234.5 223h0M1105.5 422h0M1201.5 503.5h0M1284.5 439.5h0M1162 287.5h0M1199.5 336h0M1113 442.5h0M930 393.5h0M1268 228h0M1101.5 517.5h0M1106.5 369.5h0M1229 359.5h0M1073.5 464h0M1077 418h0M1050.5 401.5h0M1037 370.5h0M987 454.5h0M928 456.5h0M1084 487h0M928 232h0M959 428h0M1101 353.5h0M1235 367h0M1133.5 192.5h0M1009 353h0M1171 495h0M1302.5 441.5h0M989.5 426h0M1109 379h0M1009 386.5h0M1221.5 477h0M892.5 372h0M975.5 450.5h0M1107 422.5h0M1047 365.5h0M942.5 456h0M1268.5 427.5h0M918.5 397.5h0M1299.5 421.5h0M1058.5 463.5h0M1167.5 299.5h0M1233.5 278h0M1039 207h0M1126.5 321h0M1140.5 248.5h0" stroke="#2469ae" stroke-width="6.6" stroke-linecap="round" opacity="0.5"/><path d="M931.5 298.5h0M1175 253h0M979 390h0M1242.5 353.5h0M1264 405.5h0M1026.5 420h0M1185 316h0M1250.5 277.5h0M1161.5 394h0M1322.5 348h0M1301 396.5h0M983.5 434h0M1080.5 313.5h0M1093 473h0M1166 471.5h0M1036 203.5h0M1260 254h0M1102.5 466.5h0M988 343h0M1007 220.5h0M1069.5 473.5h0M1025.5 521h0M918.5 366h0M1061.5 448.5h0M1038 240h0M999.5 232h0M1276.5 271.5h0M1175.5 499.5h0M1022 278h0M1277 403h0M1052 479h0M1213 301h0M1096 239.5h0M1002 272.5h0M1026.5 407h0M1053.5 357h0M1239.5 236h0M936 363.5h0M1097.5 366h0M1195.5 239h0M979.5 275.5h0M1144.5 390.5h0M1003 469h0M895.5 397.5h0M1020.5 221h0M1142.5 454h0M1206.5 311.5h0M1104.5 513h0M1244.5 260h0M1056 340h0M1193.5 448h0M1179.5 280h0M1162.5 407h0M1049 505h0M1176 450h0M1135 241h0M1046.5 436.5h0M1330 372.5h0M981.5 211.5h0M1130.5 345.5h0M1342 322h0M1147 351.5h0M931 255.5h0M1251.5 290.5h0M1148 529h0M996.5 222.5h0M1305.5 247h0M1037.5 508.5h0M1297.5 376h0M1026 345h0M1059.5 350h0M1012.5 428h0M1118 230h0M1259 344h0M1288 477h0M988 443h0M1204.5 397.5h0M1220 426.5h0M1059.5 295h0M1230.5 299.5h0M888.5 315h0M1021 294h0M1086 459.5h0M947.5 243h0M1004 295h0M1145.5 345.5h0M1135.5 511h0M1313 391.5h0M1286 398.5h0M1068 476h0M1183.5 416h0M1233 441h0M1062.5 259h0M938 449h0M1033 506h0M1193.5 361h0M1079.5 464.5h0M1096.5 298h0M1232 413h0M1055.5 486.5h0M1266 494.5h0M1116 407h0M974 441h0M1017 331h0M1250 450h0M1199.5 390.5h0M1191.5 394.5h0M1209.5 387.5h0M1276 450.5h0M1260.5 360h0M1072 477h0M1275 493.5h0M1148 407.5h0M967 266h0M963 334h0M1096 257.5h0M1301.5 455h0M1176 277h0M1270 218h0M1315 374h0M954.5 347h0M1071 230h0M879.5 379h0M1007.5 448h0M907 404.5h0M1348 393.5h0M1100 380h0M1201.5 426h0M1231 354.5h0M1011 237.5h0M1197 260.5h0M1141 375.5h0M968.5 447h0M1158.5 328h0M1014.5 225.5h0M1097 532h0M942 280.5h0M1097 313h0M1087 534.5h0M1239 483.5h0M1027.5 254h0M1092.5 353h0M1203.5 492h0M1019 234h0M1060 398h0M1208 249h0M953 320h0M1219.5 394h0M1038 336h0M1105.5 223h0M1064.5 217.5h0M1175 483.5h0M1242.5 497h0M1057 538.5h0M1010.5 400h0M1278.5 493.5h0M1085.5 444h0M998 325h0M1294.5 445h0M998 350h0M1086 342h0M1157 487h0M956 369.5h0M1236.5 289.5h0M1139.5 305h0M1147 226.5h0M969 438.5h0M1037 368h0M1105 209.5h0M969.5 319h0M1316 422.5h0M1093 348h0M932 457.5h0M1192.5 249.5h0M1035 403h0M945 254h0M1195 510h0M948.5 373.5h0M909.5 324h0M1258 276h0M1006 321.5h0M1095 529h0M952 428h0M1319.5 458h0M921.5 416h0M1046 228.5h0M1019.5 482h0M1343.5 357h0M1046.5 463h0M1334.5 450h0M1152 237.5h0M1104 338.5h0M1163 469.5h0M1169.5 517h0M1197 217.5h0M1231.5 230.5h0M1219 267h0M1218.5 263.5h0M1119 438h0M1235.5 491.5h0M907.5 393.5h0M1046 341h0M1035 309h0M1153 326h0M1241 258h0M1173.5 338.5h0M940.5 416h0M1202.5 493.5h0M1194 281h0M1016.5 505h0M951 318.5h0M1230 514.5h0M1144 228.5h0M902 310.5h0M1004.5 437h0M962.5 420.5h0M1051.5 262h0M1283.5 438h0M1196 289.5h0M1233 207.5h0M1004 271.5h0M1020 421h0M1197.5 282.5h0M1238.5 488h0M1103.5 254.5h0M990.5 495h0M1165 212h0M1154 485.5h0M1061.5 258.5h0M1071.5 270.5h0M910.5 383h0M1220 323.5h0M1015 286h0M1067.5 363.5h0M1174.5 357h0M1022 417.5h0M985.5 223h0M1276.5 386.5h0M1129.5 220h0M930 338h0M976.5 401h0M1179 426.5h0M1126.5 254h0M1066 371h0M1025.5 445.5h0M1228.5 510h0M1182 243h0M879 335h0M1132 362.5h0M1254.5 415h0M1117.5 420.5h0M1197 219.5h0M1153 499h0M985 460h0M1042.5 315.5h0M1080 244h0M1213 468.5h0M1251 456h0M1171 381.5h0M1190.5 433.5h0M980.5 317h0M1215 301.5h0M1050.5 514h0M1299 317.5h0M1077 379h0M1218.5 426.5h0M950 406.5h0M1344.5 375h0M1012.5 428h0M1236 350h0M963.5 392h0M1014.5 309.5h0M1006 243h0M1153.5 282.5h0M1039 244h0M1301.5 395h0M1209 353h0M1220 399.5h0M1334.5 415.5h0M1164 331h0M1154 313.5h0M1089 300.5h0M1176.5 332.5h0M1135.5 465.5h0M1015 237.5h0M1082 531h0M1084 305.5h0M1249.5 284.5h0M1216.5 244.5h0M1264.5 378.5h0M1158.5 385h0M1313.5 340h0M1213.5 249h0M1217.5 261h0M1024.5 250h0M1266 491.5h0M1194 517.5h0M1220 322.5h0M1171 205.5h0M1112.5 237.5h0M1250.5 225h0M1299 432.5h0M1013.5 359.5h0M1306 352h0M1190 210h0M1257 232h0M1043.5 301.5h0M1052.5 201.5h0M1252.5 302h0M1025 356h0M987 451h0M905 315.5h0M1131.5 353h0M1028 215.5h0M1192.5 325h0M946.5 279.5h0M956 383h0M1039 383h0M1049.5 281h0M1279.5 400h0M1127.5 425.5h0M996 397.5h0M1205 359.5h0M1004.5 513h0M1123 514.5h0M1053.5 314.5h0M921 392h0M1190 387h0M1278.5 449.5h0M1042.5 444.5h0M962.5 443.5h0M1124.5 478.5h0M941 324.5h0M992 336.5h0M1128 234h0M1069 338h0M1100.5 294h0M1086 368.5h0M1227 518h0M937 381.5h0M1152.5 407.5h0M1026 284h0M1023 351.5h0M1252 223.5h0M1312.5 390h0M1040.5 288.5h0M1235.5 296.5h0M988.5 400h0M1264.5 499.5h0M1177.5 250h0M1306 315.5h0M1323.5 324h0M1015.5 203h0M1009 293h0M1175 468h0M965 432.5h0M1278 398.5h0M963.5 371h0M1318 310.5h0M1012.5 237.5h0M1193 521.5h0M966 238.5h0M974 266h0" stroke="#2469ae" stroke-width="6.6" stroke-linecap="round" opacity="0.5"/><path d="M936.5 249h0M963 296h0M1266.5 334h0M1275 216.5h0M1200.5 232.5h0M1100.5 514h0M1323 431.5h0M949.5 279h0M1077.5 382.5h0M1172.5 292h0M1132.5 344.5h0M1315.5 377h0M1324 432.5h0M1305.5 458.5h0M1006.5 231h0M1064 533h0M976 340.5h0M1227 463h0M1259.5 287.5h0M1073.5 361.5h0M1049 506.5h0M1076 534h0M1035.5 455h0M1055 202h0M1155 405.5h0M1023 504.5h0M1041 251h0M988 465h0M985 390.5h0M1165 447h0M1173 487.5h0M1042.5 432.5h0M1219.5 398.5h0M1123.5 500.5h0M1004 285h0M1264 401.5h0M1117 455.5h0M999 417h0M1263 375.5h0M1253 318h0M1334 350.5h0M958 280.5h0M1213 414h0M1157.5 406.5h0M1293 308.5h0M910.5 374.5h0M912.5 413h0M1097.5 455h0M1160 377.5h0M1073.5 378h0M945 419.5h0M1335.5 398h0M1095 371h0M951.5 389h0M1082.5 300h0M984.5 372.5h0M1310.5 324h0M1169 204.5h0M1307.5 289h0M1287 484.5h0M1184 270.5h0M970 226.5h0M1246 467.5h0M1097 327.5h0M1000 303h0M1227.5 452h0M1204 325h0M1148 497.5h0M932.5 375.5h0M1265.5 475.5h0M1208 285h0M901.5 293.5h0M1114 420.5h0M1314.5 427h0M1201.5 463h0M984.5 463h0M1072 473h0M997 299h0M959 395.5h0M1210 404.5h0M871.5 375h0M1274 425h0M1300 435h0M1055.5 379h0M1177.5 446.5h0M1036.5 255.5h0M1006 474h0M1307 437.5h0M1028.5 389h0M1030 246.5h0M1248.5 460.5h0M1233 479h0M1222 199.5h0M1204 252h0M1159 382.5h0M1209.5 233.5h0M918.5 417h0M1293.5 458.5h0M928 325h0M1057 484.5h0M1033.5 281.5h0M976.5 500h0M1123.5 490.5h0M1031.5 442h0M1264.5 422h0M910.5 419.5h0M1172 534h0M1300 252.5h0M1184 390.5h0M1224.5 347.5h0M1044 384.5h0M1175 432h0M1047.5 521.5h0M1095 332.5h0M965.5 252.5h0M941.5 290h0M933 448h0M1010 385h0M1272.5 331h0M1241.5 490.5h0M1263.5 405h0M1183.5 431h0M1093.5 262h0M1128 373.5h0M1220 450h0M916.5 365h0M1009.5 386h0M1228 296h0M1275 429h0M1073.5 493h0M1284.5 389.5h0M1294.5 317.5h0M1183 433h0M1296 268.5h0M1333.5 415h0M1168.5 215.5h0M1091.5 296h0M1221.5 382.5h0M1340 373h0M1198 516h0M1086.5 248h0M1098 288h0M1067.5 392.5h0M1120.5 500.5h0M1049 431h0M1188 250h0M1243.5 315.5h0M1079 314.5h0M1283 383h0M1104.5 373.5h0M1286 249h0M1219 469h0M980 411.5h0M1138.5 376.5h0M927.5 306h0M1256.5 280h0M1068.5 421h0M950.5 336.5h0M1252.5 388h0M995.5 386h0M1170 285h0M1054.5 520h0M1021.5 446h0M1205.5 260h0M1001 232.5h0M975.5 446h0M972 408.5h0M1010 397.5h0M1289.5 452h0M948 378.5h0M1080 351.5h0M975 338.5h0M1123 401h0M942 317h0M1138 435.5h0M1001.5 426.5h0M1247.5 485h0M1163.5 507.5h0M1202.5 489h0M1255 305.5h0M912.5 414h0M1282.5 292h0M986.5 349h0M1086.5 346.5h0M1182.5 202.5h0M1073.5 458h0M1220 300.5h0M1253.5 513h0M1014.5 314.5h0M1125 232h0M929 324.5h0M1047 390.5h0M975 391h0M1167 373h0M1341.5 363h0M999 353h0M1166 235.5h0M1136.5 509.5h0M1008.5 333h0M1336.5 450.5h0M923 323.5h0M1283.5 240h0M1063 305.5h0M1166.5 226.5h0M1050.5 210.5h0M1021.5 427.5h0M974.5 376.5h0M1134.5 197.5h0M1259.5 245h0M1189.5 367.5h0M1182 323h0M1225.5 294.5h0M1092.5 488.5h0M1129 353.5h0M1210 388.5h0M1262.5 339.5h0M1001.5 434.5h0M1106.5 413h0M1182 384.5h0M1092.5 347.5h0M1132 413h0M1196 349h0M1025.5 219h0M1158 499h0M1204 501.5h0M945.5 365.5h0M1155 277h0M1233.5 495.5h0M937.5 441h0M1267.5 451.5h0M1083.5 418h0M1007.5 491h0M957 271h0M1092.5 311h0M1255 461h0M958.5 244h0M1122.5 476h0M1109 384h0M990.5 439.5h0M1006 514h0M1078.5 211h0M961.5 380h0M1264.5 484.5h0M1169.5 478.5h0M1174 390h0M1199 201h0M935 369h0M957 450.5h0M1322.5 300.5h0M1349 377h0M1044 379.5h0M1336.5 456.5h0M1162.5 505h0M1171 371.5h0M1071.5 492.5h0M1031 390h0M1004.5 348.5h0M973.5 416h0M1283.5 484.5h0M1258.5 411.5h0M1310.5 335.5h0M969.5 435.5h0M1238 368h0M935 296.5h0M1016.5 385h0M1003.5 294.5h0M1015.5 205h0M1011 503h0M1091 466h0M941.5 481h0M1019 328.5h0M1340.5 440h0M1088.5 297h0M1132 299.5h0M1109.5 517h0M1326.5 410.5h0M1061.5 256h0M1084.5 507.5h0M1089.5 365h0M1335 364.5h0M1193.5 371.5h0M1229 451h0M1130 194.5h0M928 412h0M1275.5 375.5h0M1179.5 209h0M1267 373h0M1021.5 238h0M1073.5 483h0M1221 434.5h0M1242 304.5h0M1151 443h0M1281.5 440.5h0M1224 237h0M947 409.5h0M1267 410h0M1257.5 344h0M1221.5 467.5h0M939.5 366h0M1212 391h0M1201.5 462.5h0M1047.5 415.5h0M1198.5 458.5h0M1218 280h0M1043 247.5h0M1278 352h0M1117.5 193h0M1302.5 280h0M1159 289h0M1145.5 410h0M1242.5 227h0M1246.5 412.5h0M1053.5 390.5h0M1039 307.5h0M1171.5 209h0M1306.5 444h0M1196.5 248.5h0M1056 460h0M1171 525.5h0M1051.5 482.5h0M1043.5 443h0M1304 303h0M1263.5 472.5h0M1253 450h0M978.5 446.5h0M1348 363h0M1241.5 201h0M981 449.5h0M1246.5 375.5h0M1238.5 332.5h0M1235 488.5h0M1308.5 398.5h0M982.5 307h0M1056 338.5h0M1062.5 463.5h0M1295 373.5h0M1061.5 269.5h0M1078.5 452.5h0M1213 247h0M1295 408.5h0M1096 254.5h0M1192 338h0M1207.5 205h0M980 484.5h0M1078 421.5h0M968.5 440.5h0M1222.5 433h0M1153.5 318.5h0M960 395h0M1151 426.5h0M1135 331.5h0M1038 325h0M1079 237.5h0M1128.5 455.5h0M1182.5 372h0M1228.5 240h0M986 465h0M1027.5 388h0M1289 380h0M1218.5 283.5h0M1127 461.5h0M1216.5 351h0M1314 452h0" stroke="#2469ae" stroke-width="6.6" stroke-linecap="round" opacity="0.5"/><path d="M1096 254.5h0M935 445.5h0M992.5 386.5h0M975 483.5h0M951.5 424.5h0M1166.5 448h0M967.5 283h0M1070 229h0M1257.5 258.5h0M1200.5 335h0M1261 257h0M884 338h0M1075 210h0M1152 444.5h0M1315.5 306.5h0M1054.5 488.5h0M1022.5 454.5h0M999.5 433.5h0M998.5 466h0M1029 233.5h0M1027.5 430h0M1189 357h0M966 240.5h0M1167 310h0M1142.5 455.5h0M1081 401.5h0M1325.5 300h0M1184 374.5h0M1023.5 298.5h0M1230.5 374.5h0M1223 227.5h0M1131.5 475.5h0M1083.5 386.5h0M1238 438.5h0M1169 414h0M1206.5 392h0M878 355.5h0M1216.5 339h0M1331.5 391h0M1276.5 435.5h0M1342.5 325.5h0M909 369h0M1202.5 461.5h0M942.5 372h0M936.5 301h0M1086.5 256h0M1204 248.5h0M910.5 271.5h0M960.5 375h0M1132 241h0M938.5 354.5h0M889.5 370h0M1333 302.5h0M1125.5 380.5h0M951 353.5h0M1257 419h0M1137.5 240.5h0M1226 507h0M1077 453h0M1176 520.5h0M1031.5 378h0M1172 236h0M1045 450.5h0M1213.5 267.5h0M1061 284.5h0M1262 357.5h0M1066.5 520h0M1065.5 517h0M937.5 445.5h0M1295.5 355h0M936 350h0M1258.5 367.5h0M1172 515h0M1169.5 255h0M934 285.5h0M1164.5 315h0M1115.5 201h0M1073.5 474h0M1221.5 272h0M1113 258h0M923.5 303h0M1036 408.5h0M1244.5 207h0M937.5 323.5h0M1320 365.5h0M1123 383.5h0M1047.5 221.5h0M1322.5 332h0M1100.5 448.5h0M1195.5 396.5h0M1060 481h0M1215 347.5h0M923 416h0M1097 446.5h0M1031 428.5h0M921.5 289.5h0M958 357h0M1179.5 484h0M1277 255h0M1026.5 497h0M1292 468h0M947.5 375.5h0M1145 294.5h0M1205 406.5h0M1088 290.5h0M1092.5 436h0M1078.5 376h0M1214 415.5h0M958.5 316h0M1066 414h0M1167.5 495h0M947.5 224.5h0M980 321h0M950 304h0M1097.5 437h0M952.5 322h0M989.5 356h0M1101 298h0M1255 305h0M1232 323h0M1124.5 435.5h0M1053 282.5h0M940 298.5h0M1111.5 401.5h0M1004 443h0M1094.5 221.5h0M941.5 337h0M1310 275.5h0M1156 325.5h0M1127.5 519h0M1084.5 250h0M1246 273h0M961 371h0M1300 334.5h0M1133 411h0M1249 411.5h0M1220 254.5h0M1060 203.5h0M1017.5 428.5h0M996.5 245h0M1242.5 330h0M1225 432h0M1150.5 337h0M1270.5 340.5h0M983 394.5h0M1251.5 344.5h0M927.5 304.5h0M1250.5 202h0M1009.5 257.5h0M1193 234h0M1259.5 212.5h0M1112 325.5h0M966.5 374.5h0M1062.5 347.5h0M945.5 303.5h0M987 222h0M992 208h0M1310.5 258.5h0M1116.5 457.5h0M1146 406.5h0M961 243.5h0M1228 305h0M1179 380h0M923 349h0M1349.5 345.5h0M1214 314.5h0M1093.5 446h0M1265.5 383.5h0M1177.5 518h0M956.5 234.5h0M1027 217.5h0M1168 407h0M1120.5 521.5h0M994 391h0M979 471.5h0M1069 369h0M1035 217.5h0M1178 422.5h0M962 374.5h0M955 377h0M1121.5 459h0M1216 457.5h0M1294.5 470.5h0M1240 298.5h0M1143.5 260h0M1059.5 499.5h0M1067.5 364.5h0M1063.5 383h0M1069 279.5h0M1124.5 398.5h0M1253.5 299.5h0M1202.5 393h0M1134 381.5h0M1264.5 362.5h0M1266.5 480.5h0M1153 438h0M891 334.5h0M987 349h0M1013.5 408h0M1133 511.5h0M1064.5 472h0M949 248.5h0M1172.5 233h0M927.5 253h0M1057.5 456h0M1290.5 382h0M1060 212.5h0M1159 201.5h0M1188.5 200h0M996 469.5h0M1146.5 452h0M1013.5 242h0M1309.5 379h0M1161.5 344h0M1112.5 201h0M1246.5 354h0M1048.5 532h0M988.5 446.5h0M869.5 347.5h0M1215 198.5h0M1056 217h0M1207 376.5h0M1206 396.5h0M917 361h0M1104.5 491.5h0M1091 411h0M1253 215h0M1139 377.5h0M928 263h0M1303 283.5h0M915.5 269.5h0M1342 366.5h0M1167.5 482.5h0M1241 399.5h0M911.5 414h0M1122 207.5h0M1219.5 396h0M1244 405.5h0M1132 243h0M1165.5 270.5h0M1168.5 217h0M1184 264h0M1215 367h0M1278.5 425h0M1062.5 535.5h0M1243 313h0M1156.5 332.5h0M1088.5 366.5h0M1140.5 248.5h0M1347 342.5h0M916.5 269.5h0M941.5 260.5h0M1324 359.5h0M1204.5 374.5h0M1067.5 382.5h0M1292 390.5h0M1148 405h0M1198 436.5h0M1138 325.5h0M944 316.5h0M1199.5 262h0M1166 529h0M901 384h0M1049 212.5h0M1181.5 266.5h0M926 246.5h0M1084.5 230h0M1109.5 279.5h0M1034 411.5h0M1040.5 362.5h0M901.5 383h0M1007.5 205h0M1026 496h0M1164 480.5h0M1106.5 291.5h0M966 272.5h0M1041 248.5h0M1219 474h0M919.5 350h0M916.5 414.5h0M1134.5 364h0M1020 305.5h0M1013 349.5h0M1016 322.5h0M1259.5 386h0M1165.5 518.5h0M1253 365h0M1129.5 288.5h0M1075.5 244.5h0M1216 434h0M1079.5 263.5h0M1262.5 453.5h0M1286 320h0M1046 296h0M1148 286h0M1256 268.5h0M1222 400.5h0M887 324.5h0M936.5 297.5h0M1173 247.5h0M1129 345h0M1317 314.5h0M1172 376h0M1082 502h0M1033 327h0M1048.5 417h0M967.5 402h0M954 377h0M1051 405h0M1265.5 443h0M1137 350h0M915.5 420.5h0M1214 471h0M938.5 297h0M1099 195.5h0M1071 457.5h0M1242.5 315.5h0M1137 281h0M1030.5 210h0M943.5 304h0M1302 468h0M1173.5 350.5h0M1225 489.5h0M1152.5 201.5h0M1349 371.5h0M937 374.5h0M1113.5 197.5h0M996.5 212.5h0M874 376h0M941.5 300h0M1140.5 472h0M1331 454h0M1084.5 394h0M941.5 370.5h0M959.5 427.5h0M1140.5 351.5h0M1242 499.5h0M1019.5 513h0M1268 344.5h0M905 409h0M990.5 440h0M1036.5 506h0M1347 347h0M1042 330.5h0M988.5 389.5h0M1239.5 335h0M1113 412.5h0M980.5 238.5h0M1022 374.5h0M1089.5 407.5h0M1280 397.5h0M1166.5 281.5h0M984 318h0M1178.5 208.5h0M929.5 432.5h0M1161 254h0M1034.5 428.5h0M1076.5 283h0M1003.5 446h0M1318 401h0M1138.5 282h0M1312.5 376.5h0M1272 490.5h0" stroke="#2469ae" stroke-width="6.6" stroke-linecap="round" opacity="0.5"/><path d="M1109 417h0M1091 404h0M1096 243.5h0M1269 211h0M1181.5 304h0M976 270h0M895 375h0M1301 348h0M1043.5 424h0M971 390h0M1257 424h0M1119 289h0M1191.5 358h0M1015 414.5h0M991 391.5h0M954.5 283.5h0M1329.5 379.5h0M955 306.5h0M1208.5 297.5h0M1013 441.5h0M1283.5 503.5h0M1161 397h0M1100.5 429.5h0M1299 469.5h0M1151 304.5h0M1076.5 500h0M1036 435.5h0M922 308h0M1320.5 385.5h0M1232 203.5h0M1337 415h0M1026 201h0M1252 246.5h0M1127 323h0M942.5 252h0M1260 245.5h0M999.5 471h0M997.5 347.5h0M1097 479h0M1322.5 416.5h0M1283.5 393h0M1099.5 350h0M1003.5 491.5h0M1279.5 336.5h0M1292 240h0M892 386.5h0M873.5 375.5h0M1097 377h0M1232.5 222.5h0M1315.5 375.5h0M1001 241h0M1112 285.5h0M1252 241h0M1003 358.5h0M976.5 387h0M1278.5 368.5h0M1280 495.5h0M1106 369h0M1119.5 225.5h0M988 350h0M1006 464.5h0M1264 448.5h0M1131.5 491.5h0M1220 309h0M907.5 380h0M1215 401h0M1317.5 290h0M1157.5 505h0M1266 224h0M1235 229.5h0M1091.5 238h0M1095.5 255h0M1003.5 445.5h0M1028 307.5h0M900 389.5h0M1101 320h0M1302.5 285.5h0M1203 501h0M1166.5 488.5h0M1152 448.5h0M1160.5 520.5h0M952 339.5h0M1101.5 353.5h0M1313 292.5h0M1305 441.5h0M926 247.5h0M1010.5 351.5h0M1259.5 458.5h0M1042 471h0M984.5 494.5h0M1269 282.5h0M1071 361.5h0M1169.5 518.5h0M1175.5 379.5h0M1188 267h0M1198.5 259.5h0M1197 355.5h0M891.5 362h0M1196 195.5h0M1335.5 369.5h0M1191.5 366h0M1239.5 339h0M941.5 264h0M925 297.5h0M924.5 289h0M1211.5 275h0M1035 362h0M1021 377.5h0M1275 440h0M1251.5 386.5h0M1162.5 440.5h0M1019.5 485.5h0M1268.5 395.5h0M1055.5 518h0M1034.5 305h0M1228.5 507.5h0M979.5 434h0M1110 340.5h0M1053 364.5h0M1166 480h0M1241 419.5h0M1113.5 496h0M1303 358.5h0M1137 505.5h0M1253 233.5h0M933.5 395.5h0M912.5 412h0M1118.5 379.5h0M1149.5 263.5h0M1119 441h0M916.5 409h0M1028 208h0M1069.5 255h0M1076 471.5h0M994 482.5h0M1035 406h0M1156 401h0M963 355h0M977 342h0M1144 353.5h0M927 261h0M1207.5 457.5h0M1178.5 427.5h0M1179 479h0M973.5 391.5h0M1296.5 368.5h0M1134 273.5h0M1103 534h0M1198.5 294h0M1118 460.5h0M1172 366h0M1183 359h0M1070.5 287h0M974 442h0M1029 212.5h0M1179 467.5h0M1314.5 338.5h0M973 441h0M1292.5 405.5h0M916.5 456.5h0M1019 413.5h0M1255.5 439h0M1255 232h0M1227 288.5h0M940 447.5h0M1045.5 213h0M894.5 338h0M1127.5 380.5h0M969.5 307.5h0M1099.5 433.5h0M1058 357h0M1068.5 255h0M1316 445.5h0M1047.5 313h0M1321.5 313h0M1279.5 282h0M1089.5 441h0M1220 399.5h0M1051 418h0M1158 268.5h0M943 284h0M1152 265h0M1080.5 298.5h0M1103.5 449h0M1273.5 454h0M956.5 384h0M962 327h0M1153 264.5h0M870.5 383h0M1220 456.5h0M1154.5 310.5h0M1094.5 253.5h0M986.5 223.5h0M1250.5 216h0M982 337.5h0M1142 444h0M1277 308.5h0M1013.5 321.5h0M925.5 245.5h0M941 478.5h0M1041 217h0M1103.5 303h0M1068 264h0M1304.5 261h0M1285 258h0M1008.5 376.5h0M1227 288h0M1098.5 386.5h0M1217 225.5h0M1148 481.5h0M1114.5 456h0M1215 378.5h0M996.5 463.5h0M1042 370.5h0M1230.5 468h0M1244 358h0M1046 244h0M1004.5 345h0M1143 513h0M1266.5 429.5h0M1152.5 394.5h0M969.5 445.5h0M1303 432.5h0M1178 430h0M1105.5 247.5h0M1267 401.5h0M1054.5 381.5h0M1058.5 488h0M1303 246h0M1076.5 272h0M1114.5 383.5h0M1089.5 225h0M1108 464h0M1097 249.5h0M968 411h0M1270.5 267h0M1231 457h0M1055.5 445.5h0M1261 316h0M1198.5 462h0M1004.5 325.5h0M1039.5 386h0M1299 323.5h0M978 378.5h0M1068 517h0M1309.5 269h0M1127.5 448h0M1335 385h0M866.5 356.5h0M1143.5 231h0M960 396h0M959 419.5h0M1228 519h0M1030 260h0M917 422.5h0M1112.5 342h0M1008.5 204.5h0M1002 222.5h0M956 409.5h0M1276.5 267h0M1275.5 412.5h0M903 303.5h0M1139.5 494h0M1247 484h0M1222.5 422.5h0M1298 326.5h0M1138 361.5h0M1213 277.5h0M1184 363h0M1288.5 430.5h0M1113.5 311h0M1026 261.5h0M1217 416.5h0M1282 279.5h0M1265 243.5h0M1050.5 377.5h0M1124.5 425h0M1274 271.5h0M1164 493h0M891 356h0M1190.5 291.5h0M997.5 359.5h0M1033.5 418.5h0M1161.5 347.5h0M1302 285h0M1297 244h0M1019 331.5h0M1076 479h0M1297.5 364h0M1137.5 228.5h0M906 283h0M1099.5 298.5h0M1156 298h0M1236 230h0M1087 358h0M940 333.5h0M1098.5 434.5h0M1009 214.5h0M972 450.5h0M1217.5 420h0M1082.5 373h0M1242.5 459h0M1118 418.5h0M966.5 360h0M1019 486h0M1332.5 332h0M932.5 272.5h0M1290 342.5h0M1089 378.5h0M1175 277h0M979 213h0M1100.5 306.5h0M1238 436h0M906 389h0M1312 300h0M1085.5 261h0M933.5 346h0M1219 386.5h0M1100.5 437.5h0M1141.5 526.5h0M1120.5 416.5h0M1030 378.5h0M1076 420.5h0M1172 486h0M896.5 308h0M1174.5 396.5h0M1040 247.5h0M1347 354.5h0M1020 435h0M1118 499.5h0M1197 214h0M1102 325h0M1237 301.5h0M1032 507h0M1225 468.5h0M1253 405.5h0M1250.5 462h0M1050.5 358.5h0M1084 376h0M1150 508h0M1080 204h0M1115 200.5h0M1120 355h0M1248.5 488h0M1289 391h0M1164.5 401h0M1006 332h0M1264.5 372h0M1081.5 355.5h0M1076 409.5h0M1272 248h0M1082.5 497h0M1077.5 387h0M1130 430h0M1247.5 437h0M973 391h0M948 425.5h0M1052 368.5h0M1176.5 424.5h0M1254.5 422.5h0M1270 357.5h0M1129 213.5h0M1268 399h0" stroke="#2469ae" stroke-width="6.6" stroke-linecap="round" opacity="0.5"/><path d="M1173.5 509.5h0M1293 451h0M1113.5 388.5h0M969 365.5h0M1297 345.5h0M1043 198h0M1171 319h0M1218.5 381h0M1223.5 274h0M953 287.5h0M911.5 364.5h0M1277.5 479.5h0M1039.5 282h0M1005 233h0M1163.5 462h0M1005.5 445.5h0M963.5 359h0M1134 216h0M1007 425h0M924.5 308h0M1036.5 385.5h0M1182.5 441.5h0M989.5 344h0M1021 338h0M962 423h0M1009.5 337h0M1064.5 481h0M1166 486.5h0M923.5 462h0M999 426h0M1086 331h0M1006.5 504.5h0M1088 443.5h0M989.5 210.5h0M1112.5 446.5h0M999 468h0M932.5 250h0M1083 442.5h0M1172 512h0M1243 359h0M1012 340h0M1069.5 515h0M1213 371h0M1225.5 511.5h0M878.5 343.5h0M1083.5 520h0M1287.5 445.5h0M1216.5 401h0M1194 337.5h0M954 382h0M928.5 265h0M1119 363h0M1165 281h0M1071.5 374h0M1162.5 338h0M1163 465h0M1083 404h0M1205 427h0M1160.5 312.5h0M937.5 418h0M911.5 424.5h0M1107 441h0M992 490.5h0M1210.5 398h0M1213 472.5h0M1237.5 489h0M1054.5 258h0M1024.5 401.5h0M1175 533h0M1178.5 339.5h0M1105 405h0M1245 206.5h0M986.5 402h0M998.5 233h0M1077.5 326h0M1153.5 345h0M1089 230.5h0M1174.5 326.5h0M1337.5 428.5h0M1256 327.5h0M1024 259h0M1128.5 337.5h0M1111.5 403.5h0M1196.5 492h0M1019 417h0M1160 340h0M971.5 380h0M1253.5 520h0M1142.5 415.5h0M1242.5 368h0M1174.5 236h0M1107 426.5h0M1123 378.5h0M1057.5 528h0M1165 502h0M1215.5 404h0M1302 332.5h0M883.5 376h0M1238.5 302h0M1052 448h0M884.5 378h0M1157 540h0M1196.5 402.5h0M1045 515.5h0M1002 470.5h0M1324.5 330.5h0M1108 267.5h0M1084.5 230h0M1137.5 362.5h0M947.5 396.5h0M1250.5 359.5h0M928.5 458.5h0M1331 305.5h0M1304.5 331.5h0M1188.5 345.5h0M1068.5 472.5h0M1062 425h0M1164 303h0M1063.5 237.5h0M1155.5 488h0M1199 205h0M1171.5 496.5h0M1052 254.5h0M1325.5 294h0M999.5 454h0M974.5 428.5h0M1275 265h0M1321.5 431.5h0M1035.5 454h0M1270.5 222h0M1102 303.5h0M1263 372.5h0M1079.5 497.5h0M1093.5 348.5h0M1080.5 378h0M1045 240.5h0M1045 238h0M990 484h0M1089 442.5h0M1209 514.5h0M920 307h0M1250 348.5h0M1168.5 273.5h0M1257.5 501h0M958.5 422.5h0M934 344h0M1250 416.5h0M1137 256.5h0M973.5 314h0M1278 399.5h0M973.5 217h0M1157.5 316.5h0M1240.5 219.5h0M994 383h0M1288 454h0M1189 491.5h0M978.5 280h0M1081.5 468.5h0M955 235.5h0M1275 477h0M1033.5 421h0M958.5 378h0M1044.5 254h0M1168 341.5h0M1300.5 447h0M1048 336h0M1146.5 319h0M1277.5 271h0M1090.5 505.5h0M1037 432.5h0M1156 307.5h0M1298.5 411h0M1126.5 236h0M1010 227h0M1165 244.5h0M1135 377h0M1051 268h0M1137.5 392.5h0M1243.5 218h0M1046 415.5h0M1161.5 284h0M1008 441.5h0M1317 331.5h0M1076.5 475h0M1114.5 305.5h0M886.5 372.5h0M1140.5 501h0M952.5 437.5h0M1324 341h0M1083 367.5h0M1300 478.5h0M922 333h0M1269.5 320.5h0M1042.5 382h0M1009.5 512h0M970.5 445.5h0M1148.5 409h0M1276 274h0M933 225h0M1284.5 364.5h0M1180.5 468h0M1209 400.5h0M1121.5 529.5h0M906.5 414.5h0M1037 456.5h0M1168.5 459h0M1196 342.5h0M1148.5 372h0M1070 200.5h0M1202.5 393.5h0M995.5 235.5h0M1058.5 402h0M1069 459h0M1259.5 500h0M939.5 317h0M1230 428.5h0M1336.5 356.5h0M1021.5 486.5h0M1143 422.5h0M1173 421h0M1044.5 341.5h0M1283.5 393.5h0M1178.5 315h0M1064.5 441.5h0M1017.5 322.5h0M1034 338.5h0M1021 418h0M1175.5 439h0M1002 285h0M1042 452h0M1063 446.5h0M941 367h0M1169.5 432.5h0M1020 301.5h0M1302 422h0M1097 442h0M1112.5 444.5h0M994 302.5h0M1035.5 404h0M1231.5 368.5h0M1084 465.5h0M986.5 288h0M1081 534.5h0M1320.5 431h0M998 297h0M1251 325h0M1279.5 496h0M1058.5 440.5h0M1175 286.5h0M1029.5 493.5h0M1022.5 205.5h0M1043 330h0M1224 370.5h0M1031.5 349.5h0M966 435h0M1114 391h0M1081 401.5h0M1032.5 315.5h0M1143.5 422.5h0M1060 302h0M1011 292.5h0M973.5 332h0M1261 337.5h0M992.5 295.5h0M1293 385.5h0M1002 373.5h0M1043.5 525h0M982.5 329.5h0M1193.5 244.5h0M1022.5 317.5h0M974.5 259h0M1155 502h0M1000 322h0M1106.5 275.5h0M1006 455h0M1003 351.5h0M946.5 296.5h0M1160.5 391h0M1329 364.5h0M956 423.5h0M987 439.5h0M1167.5 328.5h0M1003.5 427h0M1161 351.5h0M1092.5 310.5h0M1212 288.5h0M942 255h0M1249 398.5h0M1116.5 358.5h0M1274.5 462.5h0M1261.5 480h0M1239.5 219.5h0M952 262.5h0M1152 480h0M1134.5 416.5h0M1090.5 251h0M1098.5 304.5h0M1216 256.5h0M959.5 260.5h0M1053.5 370h0M1018.5 330h0M1206 490h0M1216.5 405h0M1278 402.5h0M1132 505.5h0M944 448h0M1095 352.5h0M1168.5 204.5h0M1162 299h0M937 320.5h0M1253 446.5h0M1211.5 466h0M1057.5 217h0M1150.5 492h0M1038.5 441.5h0M1070.5 300h0M1234 259.5h0M1299.5 375.5h0M1018 287.5h0M1112.5 388.5h0M992.5 451h0M1014 287.5h0M876.5 377h0M1223.5 449h0M1008.5 313.5h0M1071.5 327.5h0M1092.5 346h0M1314.5 338.5h0M928.5 475h0M1017.5 349.5h0M1089 334.5h0M1012.5 506.5h0M1165.5 523.5h0M1038 475.5h0M1274 507h0M1322.5 392.5h0M1212.5 249.5h0M1048 468h0M1225.5 213h0M1245.5 283h0M1240 231.5h0M1304.5 414.5h0M955.5 479h0M1042 427.5h0M1102.5 382.5h0M968.5 388.5h0M1214.5 437.5h0M1007.5 510h0M1012 322h0M984 394.5h0M1123.5 343h0M1312 376h0M1089 242h0M1212.5 496.5h0M1187 448.5h0M1121 426.5h0M972 356.5h0M1043.5 313.5h0M1244.5 374h0M1006 310.5h0M901 403.5h0M1177 371.5h0M1147 405.5h0" stroke="#2469ae" stroke-width="6.6" stroke-linecap="round" opacity="0.5"/><path d="M1171.5 237.5h0M1204 393h0M934.5 321h0M1252 230.5h0M1163.5 491.5h0M1252.5 364h0M1144.5 461.5h0M994 390h0M1157.5 398.5h0M1118 290h0M1085 498.5h0M1309 429.5h0M1334.5 292h0M1163.5 228.5h0M1200 203.5h0M1063.5 379h0M1054 312.5h0M1281 293.5h0M1263.5 417.5h0M1039.5 381.5h0M875.5 367.5h0M1148 479h0M1338 385.5h0M888 398.5h0M1095 261h0M1197 430.5h0M967.5 290.5h0M1160 451.5h0M1193 447h0M1324.5 418h0M1174 525h0M1172 453.5h0M1007 266h0M1262 383h0M1284 262.5h0M1345 384.5h0M1131.5 467.5h0M932.5 233.5h0M1287 370.5h0M964.5 445.5h0M1216 404.5h0M980.5 388h0M1227 277.5h0M937 233h0M1125.5 438h0M1313.5 298h0M1319 419.5h0M1308.5 465h0M940.5 291h0M1015 522h0M1013.5 215h0M1131.5 397.5h0M1276 506h0M1169.5 420.5h0M982.5 350.5h0M1113 261.5h0M1204.5 220h0M1222 366.5h0M1336.5 431.5h0M1312 458h0M1100 237.5h0M1130 242.5h0M1055.5 448.5h0M916 344h0M1120.5 231h0M1055.5 536h0M1085.5 526.5h0M1286.5 502.5h0M1144.5 294.5h0M1071.5 411h0M1083.5 510h0M1137.5 369.5h0M1200.5 252h0M1042 377.5h0M989 373.5h0M983.5 253.5h0M941 342.5h0M1024.5 312.5h0M1131.5 518.5h0M1006.5 276.5h0M932.5 463.5h0M876.5 372.5h0M1242 343h0M1101.5 291.5h0M959.5 380h0M956 429.5h0M1252.5 389h0M1268 206.5h0M935 264.5h0M1038 218h0M1039 416h0M1151 349h0M1110.5 433h0M1241 243.5h0M1041 423h0M1094.5 388.5h0M888.5 384h0M1330.5 456.5h0M1125 241.5h0M998.5 403.5h0M897 373.5h0M1000 472h0M1103 338.5h0M1190 367h0M1277 394.5h0M1056 312.5h0M1007.5 297.5h0M963.5 292.5h0M958.5 413.5h0M1247.5 424h0M1256.5 409h0M1172 407.5h0M1097.5 340.5h0M1097 444.5h0M1220 490.5h0M1272 358h0M1281.5 300.5h0M1043 268h0M1246 407h0M921.5 361.5h0M1230 228.5h0M1250 197.5h0M959.5 402h0M1156 505.5h0M1200.5 399.5h0M1088.5 281.5h0M1203 499h0M960.5 229h0M1265.5 336h0M1039.5 397h0M1235.5 471h0M959 423h0M1281.5 457.5h0M970 426h0M940.5 292.5h0M1125 367.5h0M1159.5 461h0M1218.5 297.5h0M1122.5 362.5h0M1140.5 287.5h0M946 260.5h0M1012 506.5h0M967.5 293.5h0M1325.5 298.5h0M1335 385h0M1168 421.5h0M1110.5 366h0M1310.5 262h0M1098 262.5h0M1059.5 487h0M1238.5 418.5h0M898.5 395h0M1291 398.5h0M1205 347.5h0M1293.5 404h0M1116.5 421h0M1178.5 492h0M1062.5 490h0M1058 326h0M1138 253.5h0M1122 284.5h0M1288 378.5h0M1118.5 415h0M1268.5 331.5h0M1096.5 494.5h0M1022 335h0M1209 436.5h0M1339.5 424.5h0M1090.5 377h0M1103 535h0M941 312h0M1021.5 357.5h0M1034.5 469h0M1033.5 261.5h0M1248.5 464h0M1044.5 508h0M1188.5 266.5h0M1041 492.5h0M1168 233.5h0M1026.5 376h0M1140 227.5h0M1283.5 387.5h0M1258.5 360.5h0M1057.5 479.5h0M1242 388.5h0M885 347h0M1201.5 253h0M1188.5 276h0M1332.5 360h0M1236.5 374h0M1190 462h0M1065 480h0M1318.5 278.5h0M1182 240h0M908.5 324h0M1034 516.5h0M1307.5 255h0M1045 419.5h0M1016.5 223h0M1170 231.5h0M1216 502h0M1180 456h0M915 419.5h0M1096.5 368h0M1279 391h0M1227.5 203.5h0M1049.5 285.5h0M996.5 478h0M1043.5 308.5h0M1065.5 477h0M1082.5 291h0M947 365.5h0M1210 324h0M1203 309h0M1137 313h0M1019.5 325h0M999.5 419.5h0M1239 224.5h0M908 309.5h0M1229 365.5h0M962 372.5h0M1349 372h0M1218.5 284.5h0M1276 406.5h0M1056 491.5h0M1180 310h0M1085.5 487h0M1214 245.5h0M1218 331h0M953.5 380h0M1092 329.5h0M1185 419h0M1073.5 454.5h0M1021.5 248.5h0M1281.5 325.5h0M1198 450.5h0M1159 209h0M887 382.5h0M1145 491h0M1142.5 502.5h0M1196.5 353h0M910.5 380h0M1172 495h0M1133.5 407.5h0M1201.5 313.5h0M1321.5 363h0M1329 313h0M1165.5 350h0M1055 267h0M1138 416h0M1276.5 486.5h0M1097.5 204h0M1012 234h0M999.5 457.5h0M1162 408h0M1022 498h0M1013.5 291.5h0M1131 369.5h0M1047.5 525h0M1034 335.5h0M1143 511.5h0M1100 525.5h0M1318.5 421h0M922.5 390.5h0M1000 429h0M938.5 266h0M1261 338h0M1137 321.5h0M1042.5 441.5h0M1054 375h0M1236.5 238.5h0M1154 500.5h0M1324 441.5h0M1218.5 469.5h0M978 476.5h0M1227 317.5h0M958.5 475.5h0M1123 411h0M1325.5 345.5h0M1281.5 447h0M1226 251.5h0M1216.5 361h0M1280 239h0M1247.5 333.5h0M1040 367.5h0M907.5 462.5h0M1311.5 327h0M1281.5 439h0M1237.5 477.5h0M978.5 418.5h0M1057 428h0M1133.5 341.5h0M1025 364h0M1269 452h0M1330 395.5h0M1016 285h0M1022.5 358h0M1133.5 474.5h0M1170.5 293.5h0M1175.5 510h0M1096.5 494.5h0M1313.5 470h0M1067.5 346.5h0M998.5 235h0M930.5 435h0M1254 270h0M908.5 416.5h0M1157 334h0M1181 469h0M1107.5 374h0M1215 195.5h0M1109.5 455h0M1183 342.5h0M1212 377h0M1121 264h0M1143 372h0M1331 445.5h0M990 433.5h0M1028 472h0M1121 521h0M957 377h0M1328.5 318h0M1199 259h0M1091.5 245h0M1137 449h0M940.5 264.5h0M1146 359.5h0M1095 222.5h0M1080 223.5h0M1335.5 320h0M1101.5 242.5h0M1270 467.5h0M1189 455h0M1092 246.5h0M1241 380h0M1304.5 443.5h0M1201 504h0M1105.5 288.5h0M1235.5 488.5h0M1183 274h0M1266 396h0M1282 344h0M1255.5 306h0M1300.5 416h0M1005 464.5h0M1335 297.5h0M1076.5 367h0M1111.5 258h0M1147 303h0M946 286.5h0M931.5 361.5h0M1200.5 352h0M1098.5 331.5h0M1096 295.5h0M1250.5 470.5h0M1177 510.5h0M1271 264h0M915.5 453h0M944 378h0M1127.5 455.5h0M1258 383.5h0M1192 233.5h0M1183 348h0" stroke="#2469ae" stroke-width="6.6" stroke-linecap="round" opacity="0.5"/><path d="M1170 347h0M1112 531.5h0M1000.5 366h0M963 421.5h0M1251 325h0M1088.5 317.5h0M1025.5 352.5h0M1095 306.5h0M1014.5 424h0M1015.5 509h0M1061 212.5h0M1256 386h0M1020.5 427h0M1137 243h0M1053 319.5h0M1233.5 320h0M1007 383.5h0M1013 227h0M1007.5 219.5h0M1338 374.5h0M1260.5 311h0M949.5 426.5h0M1241 345h0M1222 499h0M1163 313.5h0M970.5 381h0M1146 503.5h0M1095.5 380h0M1204 220h0M1313 281h0M946.5 284h0M1167 357.5h0M1234.5 377.5h0M1281 457.5h0M1213.5 432.5h0M1255.5 422h0M1165.5 352.5h0M969 478h0M977.5 404h0M947.5 361.5h0M1063 474.5h0M1278 323.5h0M1134.5 508.5h0M1028.5 399h0M1193 367h0M1212.5 410.5h0M1259 504.5h0M953 295h0M1134.5 295h0M1017.5 313h0M1132 411.5h0M918 451.5h0M1069 321.5h0M1106.5 478h0M969 237h0M1017.5 226h0M1205 201h0M1161 518h0M998 330h0M1321 453.5h0M1012.5 244.5h0M1134 231h0M1185.5 264.5h0M1020 313.5h0M1092 267h0M1273 275h0M1104 464h0M1185 345h0M1114.5 423.5h0M1147.5 410.5h0M949.5 369h0M1273 377.5h0M1272 215h0M1061 403h0M1252.5 386h0M1332.5 451.5h0M965.5 373h0M1205.5 494h0M1352.5 376h0M1204.5 245.5h0M1343 444.5h0M1040.5 317.5h0M936.5 422.5h0M1000 435.5h0M1228.5 208.5h0M1214.5 395.5h0M1017.5 276h0M1223 306h0M1186 346.5h0M1078.5 483.5h0M1073 523h0M1185 281.5h0M1162 245.5h0M1155.5 232h0M1118 428.5h0M1200 271h0M998.5 504h0M1069 429h0M1102.5 334.5h0M1083.5 505h0M1002.5 273h0M970 439h0M912.5 346.5h0M968.5 330h0M1181.5 414h0M1032.5 496h0M978.5 437h0M1260 332h0M994 289.5h0M1105 535h0M1173.5 446h0M1046.5 393h0M1089 431h0M1193.5 374.5h0M973.5 248h0M1213.5 396.5h0M1186.5 310.5h0M1219 225.5h0M1326.5 342.5h0M1096.5 302h0M1117.5 431h0M1161.5 235h0M1058.5 482h0M995 355.5h0M1112.5 265.5h0M1183.5 413h0M1145.5 481.5h0M968.5 477h0M1093.5 525h0M992 396h0M937 459.5h0M903.5 331.5h0M1189.5 245h0M876 376h0M1086.5 466.5h0M1316 388h0M1293.5 488.5h0M1090 491h0M941 259.5h0M1053 392h0M993.5 481h0M902.5 370h0M967.5 380.5h0M944 277.5h0M1219.5 393.5h0M1132 360.5h0M884.5 345.5h0M1082 406.5h0M1350 351.5h0M1186 272h0M974 426.5h0M1105 421h0M1210 253.5h0M1204.5 246.5h0M1087 200.5h0M1140.5 430.5h0M1274.5 240h0M1248.5 390.5h0M1028.5 223h0M1078 288.5h0M1048 342h0M1081 515h0M1098.5 253h0M1309.5 263h0M1117 448h0M1130.5 311.5h0M1257.5 237.5h0M995 508.5h0M1057.5 430.5h0M1142 320h0M1080.5 445.5h0M1273.5 291.5h0M940.5 449h0M1314 310.5h0M1028 362.5h0M1280 250.5h0M900 399h0M1063.5 223h0M1061 383h0M919.5 299h0M1309 385.5h0M950 248.5h0M1105.5 285.5h0M986 349h0M1201 227.5h0M1166 355h0M888.5 384.5h0M1013.5 520.5h0M1150 265.5h0M1320.5 425h0M1141.5 312h0M1251 292h0M1144 517h0M1273 485.5h0M910.5 308.5h0M1045 340.5h0M1282 441h0M921.5 304.5h0M963 267h0M1248 509h0M922 451h0M1207.5 202.5h0M1324.5 336.5h0M1192 468.5h0M1184.5 372.5h0M1199.5 358.5h0M1106 342h0M1175 216h0M935 454h0M1158 260h0M1024 516h0M1086.5 389.5h0M1058.5 305.5h0M998 326h0M1237.5 378h0M982 397.5h0M1091 370h0M1200.5 471h0M1010.5 302h0M969.5 226h0M1267.5 465.5h0M1178 224.5h0M1140 357.5h0M1068.5 273.5h0M1249.5 402h0M1092 294.5h0M1308.5 264.5h0M1122.5 263.5h0M1259.5 385.5h0M1009.5 457.5h0M1205.5 466h0M1256.5 473h0M1204.5 387h0M1169.5 227.5h0M1031 452h0M972.5 289.5h0M1108 257h0M1253.5 285.5h0M1272 474.5h0M942.5 377.5h0M1108 523h0M1056.5 471h0M1185.5 274.5h0M1149.5 214h0M1219 292.5h0M1196.5 248.5h0M1207 408.5h0M1119 321.5h0M1138 389.5h0M1039 374h0M1054.5 487h0M1247.5 441.5h0M1327.5 343h0M1144 261.5h0M1262.5 324h0M1307.5 302h0M975.5 292h0M1040 383h0M1022 401h0M1273 275.5h0M1084 366.5h0M1053.5 243.5h0M1253 422.5h0M1035 417h0M1112 502.5h0M1074.5 477.5h0M1186.5 352h0M992 349h0M1193 276h0M1327.5 313h0M1221.5 228.5h0M953.5 336.5h0M1258.5 393h0M1081.5 222h0M1253.5 208.5h0M1119.5 192h0M1232.5 385h0M895 317h0M1129.5 532.5h0M1258 496.5h0M1262.5 239.5h0M871.5 390.5h0M1110.5 349h0M1343 370.5h0M1213 442.5h0M1246 274.5h0M945 290.5h0M1149.5 409.5h0M993 396h0M1134 249.5h0M1196.5 463h0M1052 225.5h0M1307.5 375.5h0M1280 263.5h0M987 378.5h0M1138 404.5h0M1093.5 456.5h0M955 401h0M1007 493h0M1112 285h0M1228.5 459.5h0M1196.5 406h0M1002.5 333.5h0M952 379.5h0M1172.5 232h0M1067 390h0M960.5 379h0M1113.5 217h0M968 439.5h0M1230 365h0M1030 367h0M1319 411.5h0M1192 224h0M971 314.5h0M1012 282.5h0M1063 234.5h0M1043 290.5h0M965.5 441h0M1158 282h0M1093 218h0M1149 445.5h0M1252.5 356h0M1189 318h0M1315 454.5h0M1344.5 394h0M1124 206h0M1260.5 396h0M1138.5 407.5h0M928 466h0M1089 304.5h0M1172.5 360.5h0M1128 427.5h0M1097 431h0M950.5 455h0M1072 401h0M1002 471h0M925 433h0M997.5 461.5h0M1033.5 435.5h0M967.5 482h0M987 500.5h0M1014 223.5h0M913.5 366.5h0M1130.5 440h0M1006 276.5h0M1319 362h0M1057.5 488.5h0M1131.5 367.5h0M942 434.5h0M1049.5 365h0M1133.5 287.5h0M1139.5 413.5h0M982.5 309h0M1273 416h0M1276.5 487.5h0M979.5 482.5h0M953 243.5h0M1064.5 540.5h0M955.5 420.5h0M949.5 354h0M1222 327h0M1108 435h0M1302 448.5h0" stroke="#2469ae" stroke-width="6.6" stroke-linecap="round" opacity="0.5"/><path d="M1132.5 254.5h0M952 363h0M1022.5 371h0M1301.5 265h0M983.5 399h0M1125.5 468.5h0M1088 344h0M1286.5 371h0M993.5 343h0M1335 363.5h0M1026.5 360h0M1005 334.5h0M1093 262h0M1262.5 352.5h0M1147.5 295.5h0M1064.5 473h0M1133.5 421h0M1190.5 438.5h0M890 405.5h0M1170.5 199.5h0M1274.5 271h0M958.5 342.5h0M1315.5 426.5h0M1114 366.5h0M971 351h0M1140.5 204h0M1081.5 431.5h0M980.5 386.5h0M1253 413.5h0M1050 260.5h0M1045 364h0M1058.5 285.5h0M1152.5 494.5h0M1069 460h0M974 395.5h0M1323 277.5h0M921.5 417.5h0M1133 461.5h0M904.5 331h0M1234 212.5h0M1087.5 344h0M1201 272.5h0M1109.5 350h0M1342 371.5h0M1350 375h0M1207 458h0M1133 295.5h0M1228 318h0M1019.5 519.5h0M1042.5 259h0M1274.5 403.5h0M1011.5 348h0M921 392h0M1028 243h0M1007.5 277h0M1341.5 388h0M1093.5 258.5h0M986 365h0M1322 393h0M1240.5 226h0M1226.5 292.5h0M1169 478h0M1166 237h0M1130 478h0M1037.5 375h0M891 327h0M1019 400.5h0M1065 203.5h0M1064.5 310.5h0M953 439h0M1075 374.5h0M1174.5 401h0M1342.5 401h0M1034 443.5h0M1019.5 335h0M1037.5 318.5h0M1112 305.5h0M1192 363.5h0M893 370h0M1248.5 331.5h0M1032.5 522.5h0M911.5 413h0M1333 443h0M1185.5 459h0M1064 318h0M1184 248h0M1016.5 342h0M1132.5 393h0M1013.5 426h0M1177 347h0M1075.5 490.5h0M1013.5 352h0M1136 196.5h0M1253 370h0M1193.5 446.5h0M1087 441h0M1093.5 324h0M1117.5 423.5h0M1073.5 411h0M1118 394h0M953 463h0M1167.5 275h0M1267 208.5h0M1028 325.5h0M1231 454h0M1190 242.5h0M1260.5 427.5h0M1280 397h0M901 386h0M1214 494.5h0M1317 345h0M1063.5 474h0M1129.5 487h0M1229.5 391.5h0M876 382.5h0M918 321h0M981 411h0M1177.5 237.5h0M1254 428.5h0M989 392h0M1021 209h0M1020.5 418h0M1348.5 370h0M1300.5 369h0M1100 445h0M1257.5 410.5h0M1097 220h0M1268 492h0M1124.5 471h0M1053.5 468.5h0M1242 286.5h0M1228.5 332h0M1152.5 243.5h0M907.5 365h0M1060.5 395.5h0M1013 233.5h0M1295.5 470h0M1127.5 491h0M1289 422h0M935.5 325.5h0M1265.5 298.5h0M1108.5 411.5h0M981 353h0M922 314.5h0M985 212.5h0M1210 245.5h0M993.5 240h0M1057 272h0M1299.5 279h0M1005.5 475.5h0M894 400h0M962 465h0M1054 488.5h0M1268 505h0M1280.5 445.5h0M1251 301h0M1324 339.5h0M982.5 399h0M1212.5 250h0M1059.5 238h0M1059.5 514.5h0M955.5 418.5h0M1261.5 327h0M1065 264.5h0M1303 463h0M1200 230h0M1201 418h0M1307 315.5h0M944.5 455h0M1191.5 378.5h0M1302.5 268.5h0M1304 475h0M1302 407h0M1257 304h0M1036.5 314h0M978 219h0M1218 304h0M1268 236h0M1054.5 302.5h0M923.5 290h0M1024 351.5h0M1140 407.5h0M1281.5 489h0M1140.5 388.5h0M1251 411h0M1191.5 208.5h0M1155.5 277.5h0M951.5 367h0M1153 241h0M1347.5 353.5h0M1018.5 291.5h0M1255 409h0M1007.5 320h0M1260 292.5h0M1188 339.5h0M1211 466.5h0M936.5 474.5h0M1074.5 214h0M1333.5 343h0M1153.5 343.5h0M1073 418h0M953 288.5h0M1022 491.5h0M1112.5 418.5h0M1126 296.5h0M1338 430.5h0M1000.5 508h0M1269.5 407.5h0M1056.5 356h0M1139 490.5h0M1280 419.5h0M940.5 273h0M1117.5 506.5h0M934.5 390.5h0M1288.5 346.5h0M1349 381h0M947 348h0M1193 268.5h0M1070.5 471.5h0M1159.5 345h0M1338.5 377h0M1059 347h0M899.5 405.5h0M1001 449.5h0M1053 415.5h0M1135 335.5h0M1331 308.5h0M1114.5 397h0M1001.5 451.5h0M1189 516h0M1326.5 352.5h0M900.5 408h0M1206 330.5h0M1226.5 513h0M1026.5 366h0M935 239h0M941 306h0M1276 281h0M1350.5 392h0M1193 373.5h0M904.5 408.5h0M1245.5 392.5h0M1069 246.5h0M1011 344.5h0M944.5 329.5h0M1072 258h0M1009 258.5h0M1001 434.5h0M1205.5 260h0M1039 514h0M1258.5 486h0M1220.5 507.5h0M1103.5 235h0M870 346.5h0M1030.5 212h0M941 477h0M1149.5 358h0M876.5 389.5h0M1043.5 249h0M1007.5 368h0M1105 198h0M1039 405.5h0M1015 303h0M1269.5 422h0M1077.5 416h0M1042.5 309h0M1044 238.5h0M1057.5 374h0M1063 333h0M1263.5 295.5h0M1274.5 499h0M926 436.5h0M1058.5 373h0M1268 276.5h0M1189.5 363h0M924.5 395h0M1056.5 446.5h0M897.5 347h0M1257 367h0M1201.5 463h0M1032.5 428h0M1185 246.5h0M1230.5 431h0M1173.5 250h0M1110.5 452h0M1078 381h0M923.5 463h0M1235.5 232h0M933.5 455h0M1019.5 523h0M1262 401.5h0M1150.5 421h0M1088.5 367.5h0M1291 483h0M1122 245h0M1326.5 444h0M1150.5 508h0M966.5 452.5h0M1327.5 394.5h0M1004.5 289.5h0M1233.5 514.5h0M937 279h0M1310.5 463h0M942.5 324h0M979 280.5h0M1021.5 313.5h0M1008.5 288.5h0M1120.5 232.5h0M968 309.5h0M1032 432h0M1257.5 382h0M1224 227.5h0M1174.5 326h0M1061.5 435h0M1218.5 395h0M994.5 336h0M965 341.5h0M1011.5 435h0M974.5 236h0M888 317.5h0M889.5 347.5h0M1083 352h0M1266.5 348.5h0M1229.5 490h0M964.5 303h0M984 220h0M1008 232.5h0M1222 514h0M1228.5 242.5h0M986 354h0M1027.5 231h0M917.5 463h0M1338 404h0M1150 272.5h0M1039.5 249.5h0M981.5 440h0M963.5 217.5h0M999 376h0M1143 412.5h0M1087.5 294.5h0M1024 213h0M1129 405.5h0M1204 199.5h0M1138 445.5h0M1336 456.5h0M1224.5 362h0M1159 517.5h0M1050 290.5h0M1017.5 290.5h0M1010.5 226h0M1299 271h0M1323 330.5h0M973.5 431h0M1241 224h0M906 291.5h0M984.5 340h0M1210.5 307.5h0M1182 346.5h0M1186 480h0M1109.5 374h0M1136 221.5h0M955.5 284.5h0" stroke="#2469ae" stroke-width="6.6" stroke-linecap="round" opacity="0.5"/><path d="M973.5 390h0M1081 392.5h0M1135 216.5h0M1147.5 436.5h0M1288.5 341h0M1278.5 335h0M1285 369.5h0M965 385.5h0M1107 293h0M1216 392.5h0M1165 412.5h0M1051 260.5h0M1320 318h0M1129 501h0M1301.5 282h0M1217 397h0M1120.5 191.5h0M972.5 401.5h0M1063.5 467.5h0M1067.5 262.5h0M1302 380h0M1195 393.5h0M1229 421.5h0M1022.5 488h0M1008 227h0M1050.5 290.5h0M1188.5 348h0M1177 433h0M1062 359h0M1061.5 250h0M914 459h0M958 438h0M1310.5 314h0M1262.5 355.5h0M1158.5 317h0M1320.5 338h0M945 482h0M1126.5 391h0M1130 357h0M1142.5 350h0M1241 289.5h0M1056.5 251h0M1237 487h0M1245.5 351h0M1156.5 330h0M1131 325h0M953 375h0M1120.5 463h0M1001 325.5h0M1054 535.5h0M1244 499.5h0M982 367h0M1235.5 343h0M1130.5 220h0M1131.5 368.5h0M1094 479h0M1182.5 398h0M1327 298.5h0M1202.5 216h0M1289.5 453.5h0M953 426h0M993 401h0M1050.5 366h0M1231 253h0M971.5 292.5h0M978.5 251h0M1035.5 504.5h0M1145.5 233h0M962.5 424.5h0M1268 380.5h0M949.5 260h0M1111.5 208.5h0M989.5 345.5h0M971.5 455h0M1142.5 368.5h0M1246 471.5h0M1073 380.5h0M1258.5 378.5h0M938.5 259.5h0M957 429.5h0M970 289.5h0M1143 367h0M1188.5 348.5h0M974 248h0M1025 422.5h0M1108 443.5h0M1147.5 324h0M954.5 367.5h0M931 283h0M1159 410h0M1287.5 467.5h0M916.5 430h0M1268.5 271.5h0M1072 456.5h0M1138 235.5h0M1323.5 355h0M918.5 437.5h0M1221.5 393.5h0M932.5 453h0M1336.5 430h0M1300.5 280.5h0M1004.5 466.5h0M974.5 360h0M1222 233h0M1169.5 423h0M1045 489.5h0M924 331.5h0M1183 432.5h0M1098.5 343h0M1211.5 465.5h0M1139 240h0M1180.5 336h0M1050.5 410h0M1137.5 299.5h0M1018.5 346h0M952 351.5h0M1074 204.5h0M983.5 406.5h0M1061 261h0M1121 521h0M1178.5 386.5h0M1100.5 237h0M958.5 279.5h0M1174.5 472h0M1089.5 523.5h0M1055 455h0M1177.5 446.5h0M1264.5 271.5h0M1072 287.5h0M1082 446h0M1223 511.5h0M1251.5 351h0M1180.5 314.5h0M1040 239.5h0M963 235.5h0M1246.5 279.5h0M940.5 443h0M1051 278.5h0M992.5 273h0M1052 250h0M944.5 473h0M966.5 245.5h0M1044.5 338.5h0M1101 214.5h0M1188.5 459.5h0M977 321.5h0M1204.5 406.5h0M1124.5 420h0M1198.5 256h0M1209 267h0M1258.5 472.5h0M935.5 443.5h0M1094.5 370h0M1320 422.5h0M1091 252h0M1275 395.5h0M1171.5 365.5h0M1041 333.5h0M975.5 473.5h0M1325 293.5h0M1063 485h0M1326 353.5h0M1247.5 434.5h0M896 380.5h0M1151 511h0M1068 468h0M1155 409.5h0M1001 463.5h0M1340 346.5h0M1204 499.5h0M1154.5 394.5h0M991 444.5h0M1148.5 419h0M1057 313.5h0M1140.5 354h0M1288 378.5h0M1011.5 314.5h0M1029 315.5h0M1329.5 322h0M1150.5 308h0M1267.5 270h0M912 342h0M1090.5 462h0M1187 220.5h0M1281 491h0M1162.5 203.5h0M1107.5 359.5h0M1089.5 364h0M1095 503.5h0M1305 267.5h0M1151 438h0M1078.5 275.5h0M1251.5 426.5h0M1250.5 303h0M1232 310h0M968 441h0M1192 347h0M1183.5 416h0M1210 253h0M1270 343h0M1098 223h0M1139 450.5h0M1210.5 496.5h0M1271.5 471.5h0M1017 292h0M1144.5 407.5h0M1251.5 430h0M1269 270.5h0M1081.5 431.5h0M907 304.5h0M1036 295h0M1284.5 263h0M968 365.5h0M953 391h0M1131 518h0M1254.5 439.5h0M1021 274h0M943 261.5h0M1192.5 449.5h0M1236.5 219.5h0M921.5 453h0M998 497h0M1159 413h0M1149.5 388.5h0M1296.5 288.5h0M1051.5 432h0M1095.5 261h0M1083 530.5h0M1198.5 378h0M1271 214.5h0M1075 435.5h0M1144.5 356.5h0M1059.5 449.5h0M1239.5 225h0M1176.5 476.5h0M1042 218.5h0M1163.5 251.5h0M982.5 351.5h0M1261 489.5h0M1118 392.5h0M1088 313h0M1072.5 208h0M1092 371h0M1054.5 535.5h0M972 354.5h0M1043.5 216h0M1300.5 269h0M1027 290h0M1043.5 396h0M1279.5 417h0M1244 508h0M1017.5 208h0M947.5 367h0M1256.5 359h0M1158.5 302h0M1233 213h0M1257.5 430h0M886.5 384h0M1098 264h0M1212.5 252.5h0M1083.5 464.5h0M1182 247h0M1101 232h0M943.5 328.5h0M1284.5 387h0M950 334h0M1166 281h0M1032.5 500.5h0M1208.5 350.5h0M1046 381.5h0M1078.5 466.5h0M1000 377.5h0M1348.5 393h0M1270.5 278.5h0M1328 332h0M1058.5 476.5h0M1224.5 343.5h0M1182 326.5h0M1260.5 400h0M1164 504h0M1136 512.5h0M1196.5 219.5h0M1272.5 433.5h0M1159 447.5h0M1329.5 298h0M953 230.5h0M1181.5 227h0M976 362h0M1225 463.5h0M1204.5 407.5h0M918 453.5h0M1140 211h0M1147.5 511.5h0M1266.5 252.5h0M1238 223h0M1267 438.5h0M913.5 355.5h0M1232.5 384.5h0M1112.5 468.5h0M1193 497h0M1239 271.5h0M1042 348h0M1010 466h0M1266 403h0M1040.5 473h0M1154.5 523.5h0M965 457.5h0M951 393.5h0M1172 461h0M1074 490.5h0M1023 335h0M1031 322.5h0M1230.5 491h0M1013 463h0M1147 431.5h0M954 368h0M1223.5 440h0M1288.5 459.5h0M1148 317.5h0M1059.5 304h0M1354 376h0M1236 354h0M1056 440h0M905.5 395h0M1056.5 529h0M1197.5 247h0M1075 413.5h0M1003 508.5h0M1271.5 339h0M1279.5 268h0M1333.5 450h0M1124 218h0M927.5 409.5h0M1197 476.5h0M1266 273.5h0M1326 345.5h0M988.5 349.5h0M1034 500h0M1029 230h0M940 285h0M1193 342.5h0M936.5 349.5h0M1028.5 501h0M1088.5 519.5h0M1060.5 474h0M979.5 301h0M1058 233.5h0M1351 365.5h0M1236 258h0M995 228h0M950 327h0M1052.5 257.5h0M1028 421h0M1059 351.5h0M1010 235.5h0M996.5 306h0M910.5 298h0M1177.5 389h0M1129 517h0M1285 502h0M1267.5 406.5h0M1311.5 334h0" stroke="#2469ae" stroke-width="6.6" stroke-linecap="round" opacity="0.5"/><path d="M1086.5 319.5h0M1198.5 391.5h0M1044.5 509.5h0M995 453h0M987 420.5h0M969 421.5h0M1268 411h0M1144 457.5h0M1215 402h0M1099 302.5h0M962.5 475.5h0M1163.5 314h0M1077.5 376h0M1129.5 222h0M1103 533h0M925 246h0M1224 393h0M1032.5 274h0M1202 201.5h0M1030 337.5h0M1228.5 208h0M1344.5 371h0M1330.5 369.5h0M1144 429.5h0M1290.5 469h0M976.5 253h0M1142 382h0M930 251h0M1336 367h0M1042.5 387.5h0M1059 310h0M1058 315h0M924 296.5h0M1019 314h0M1035.5 260h0M1227 351.5h0M1177 311.5h0M1328.5 333h0M955.5 386h0M1293.5 420.5h0M1287 252h0M1268 395h0M931 227h0M1254.5 369.5h0M1270 440h0M1022 219h0M943 399.5h0M1013 516.5h0M1073.5 219h0M1191.5 264h0M1294.5 376h0M1214.5 313h0M929 341.5h0M1187.5 266h0M936.5 277.5h0M997 352.5h0M914 323h0M1178 237.5h0M1215 380h0M966.5 283h0M1298 283.5h0M1096.5 407h0M1251.5 425.5h0M1154.5 493.5h0M1232 291.5h0M936 455h0M1048 226h0M1160.5 255.5h0M1250 217.5h0M1271.5 404.5h0M1036.5 256.5h0M1022 374.5h0M1166.5 231h0M1327.5 353h0M1188.5 319h0M1249 282.5h0M1204.5 301h0M1272.5 331h0M1181.5 361.5h0M958 428h0M1185.5 215.5h0M1032.5 460h0M1309.5 402h0M1132.5 510.5h0M904 386.5h0M1228.5 485h0M1249 483h0M1229 352h0M1277 278.5h0M1274.5 380.5h0M1121.5 446.5h0M1081 276h0M1166.5 473.5h0M993 503h0M1146 331h0M1014 452.5h0M1264 282h0M1315.5 317.5h0M1176.5 241h0M1137.5 241h0M1090 363.5h0M1024 344.5h0M1277 392h0M973 495.5h0M1154 396.5h0M1151 495h0M1039 342h0M1116.5 494.5h0M1029 352.5h0M1278 356.5h0M1141.5 517h0M1239.5 230.5h0M1240.5 465.5h0M1228 227.5h0M977 391h0M957.5 425.5h0M1267.5 438h0M882.5 392h0M878 363.5h0M903.5 359h0M971.5 277.5h0M1305 246h0M1069.5 472.5h0M1316.5 400h0M949 435.5h0M949.5 366.5h0M1031.5 447.5h0M1335.5 450.5h0M1091.5 349h0M1259.5 281h0M989 320.5h0M1182.5 282h0M1085 294.5h0M1263.5 342h0M1151.5 416h0M1018.5 454.5h0M1039.5 392h0M1243.5 285.5h0M1202 302.5h0M1037.5 208h0M900.5 389.5h0M968 382.5h0M1081 216h0M1239 467h0M1020 325.5h0M1132 244.5h0M1102.5 293.5h0M1210 318h0M948.5 382.5h0M1211 423.5h0M1103 532.5h0M1316.5 425.5h0M1080.5 491.5h0M1096 225.5h0M1123 388h0M973 284.5h0M1262 339h0M1199 238h0M1333.5 353h0M1209.5 198.5h0M1033.5 439h0M1211.5 406.5h0M1247.5 241h0M950.5 236.5h0M1082 363h0M936.5 329.5h0M1174.5 397.5h0M976.5 451.5h0M1121 452h0M1129 436.5h0M965.5 363.5h0M1129 364h0M958 343.5h0M1249 485.5h0M1054 447h0M1155.5 416.5h0M1178 386.5h0M1267.5 404.5h0M1101 375h0M1165 359h0M1264 333h0M999.5 223.5h0M1088 445h0M1260 511.5h0M920.5 410.5h0M1033 387h0M987.5 361h0M1133.5 354.5h0M1149.5 451h0M1022.5 340.5h0M1013 420.5h0M1073.5 211.5h0M992.5 418h0M1132 347.5h0M1303 284.5h0M918 296h0M1068 257.5h0M1183.5 333h0M1081 457.5h0M1052 472h0M1297.5 419h0M1086 250.5h0M1264.5 358h0M1286 430.5h0M1123.5 231.5h0M1124 443.5h0M1035 453.5h0M1132.5 205.5h0M985 391.5h0M1306.5 270h0M1117 280h0M1235 372h0M1148.5 347h0M1185 266.5h0M1163.5 292.5h0M985.5 246h0M1214.5 222h0M1097.5 249h0M1047.5 377.5h0M1271 228.5h0M1170 253h0M1001 379.5h0M1241 337.5h0M1093 200h0M1021 384h0M901.5 387.5h0M1246 218h0M1254 416h0M1135 459h0M910.5 321.5h0M985.5 351.5h0M972 442h0M1156 490h0M1178 308.5h0M1039 369h0M1162 517.5h0M1064.5 381h0M1262 420h0M894.5 376h0M1210.5 456.5h0M1225 363.5h0M1302 285h0M914 337h0M1049.5 408.5h0M1026.5 524.5h0M1300 420.5h0M1243 512h0M967 378.5h0M1051 202h0M1162 200.5h0M874 373h0M1203.5 493h0M1133 354.5h0M1133.5 391h0M949 382.5h0M870 374h0M1312.5 353h0M1172.5 481h0M1336.5 419.5h0M1351 348.5h0M1183.5 366h0M982.5 384.5h0M1018.5 303h0M1321.5 277h0M1251 206h0M1024 361.5h0M1043.5 388.5h0M1154.5 216h0M1006 326.5h0M1193 372.5h0M1268 387.5h0M1107.5 280.5h0M988.5 383.5h0M938.5 257h0M1170 468.5h0M911 317.5h0M1099.5 454h0M1037 524.5h0M952.5 286.5h0M947.5 442h0M921.5 460.5h0M1077.5 365.5h0M1040.5 470.5h0M1203.5 480.5h0M1264.5 443.5h0M1028.5 333.5h0M997.5 505.5h0M1221 448.5h0M1305.5 469h0M1302 344.5h0M1211.5 233.5h0M1158 286.5h0M1081.5 340h0M1032 436.5h0M1161 198.5h0M1037.5 335h0M1316.5 398.5h0M1268 241.5h0M1332 336h0M1226 309.5h0M1302 250.5h0M1347.5 355.5h0M1143.5 236.5h0M1139.5 414.5h0M1308 332h0M1293 416.5h0M924 293h0M1277 319h0M1004 465.5h0M957 378h0M1031 316.5h0M1028 329.5h0M1114.5 206h0M1184 311.5h0M1058.5 423.5h0M1081.5 266h0M1041.5 216.5h0M887 377.5h0M1303 269h0M1094 374.5h0M1058.5 281.5h0M1036.5 199h0M1145 402h0M923 352h0M1350.5 392h0M1181.5 428h0M1098 451h0M1314 270h0M1138.5 213.5h0M965.5 286.5h0M1040 332h0M1094.5 450.5h0M1014 434.5h0M1119.5 377h0M1117 419.5h0M1097.5 535.5h0M973.5 275.5h0M1056 313.5h0M992.5 235h0M1104 467.5h0M1268 374h0M1255.5 326.5h0M895 373h0M948.5 251.5h0M1230.5 417.5h0M1110.5 371.5h0M1054 199.5h0M1104 493.5h0M1083 368.5h0M931.5 251.5h0M1274 231.5h0M1052 457.5h0M1159 391h0M1022 298h0M993.5 419.5h0M913.5 419.5h0M1129 246h0M998.5 237h0M1264.5 391h0M1170 313h0M1277.5 373h0M1257 364.5h0" stroke="#2469ae" stroke-width="6.6" stroke-linecap="round" opacity="0.5"/><path d="M1064 277.5h0M1242 502.5h0M1128.5 472h0M1087 447.5h0M1247 362h0M1187 272h0M1001 395h0M1006.5 231h0M1230 312h0M1096.5 347h0M1329 418h0M1144.5 374h0M938.5 468.5h0M1163.5 348.5h0M1097.5 353h0M1054.5 212h0M1159 459.5h0M1171.5 320.5h0M1188 370.5h0M978.5 435h0M1192 353h0M1166 230.5h0M1024 474h0M911.5 366h0M1039 507h0M1066 282h0M1024.5 240.5h0M1211.5 476h0M1010 300h0M1007 373.5h0M991.5 464h0M1104 415.5h0M979.5 244.5h0M1303.5 413.5h0M1270 231.5h0M1110 303h0M1309.5 443.5h0M1248 274h0M1090.5 289h0M981 293.5h0M1118 231h0M1228 506h0M1079.5 377h0M1087 233h0M1108.5 402h0M945.5 367h0M1041 345h0M1005.5 387h0M1330.5 449h0M1083 516h0M1207.5 393.5h0M1118 394.5h0M1068.5 460h0M1148 253h0M1156 424h0M1294 467.5h0M912 369.5h0M1146.5 404.5h0M1291.5 371.5h0M1000 502.5h0M1299.5 333.5h0M1025.5 246.5h0M1020 346.5h0M1022 317h0M1323 413.5h0M1071 458h0M1019 425h0M1017.5 364h0M1107.5 361h0M1093.5 401h0M1110.5 217.5h0M1082.5 501.5h0M1277 392h0M1139.5 412h0M1114 233.5h0M1024 422h0M1056.5 491.5h0M1158.5 222h0M1229.5 350h0M1153 201.5h0M983.5 393.5h0M1086.5 208.5h0M1273 262h0M1209 238.5h0M1227.5 437.5h0M1337.5 346h0M1259 245h0M1240.5 521.5h0M1315.5 430.5h0M1107.5 333h0M894 397h0M965.5 440h0M1172 521.5h0M1331.5 343h0M924.5 308.5h0M1156 285.5h0M1045 256.5h0M1109 297.5h0M1247.5 259.5h0M884.5 385.5h0M1127.5 310h0M1246.5 311h0M1030 481.5h0M989 354.5h0M1060 468.5h0M1291 488.5h0M1041.5 469h0M988.5 275.5h0M1290.5 319h0M1292.5 379h0M1138.5 537h0M1199 361h0M1268.5 362.5h0M1087.5 234h0M1147.5 428.5h0M900 360.5h0M978 223h0M1198 338h0M1119.5 195.5h0M1272.5 362.5h0M1149 332h0M1079.5 243h0M932.5 295.5h0M1139 361.5h0M950.5 447h0M1350.5 358h0M1178.5 476h0M1322 315h0M958.5 333.5h0M1077 478h0M942 262.5h0M1075.5 468h0M1042.5 321h0M1239 434.5h0M1302.5 384.5h0M1143.5 212.5h0M1074 471.5h0M1048 309.5h0M1134.5 292h0M980 351.5h0M923 454h0M1005.5 365.5h0M1339.5 370h0M1325 310.5h0M1019 299h0M937.5 417.5h0M1243.5 335h0M910.5 436.5h0M1192.5 428.5h0M1198.5 361h0M1274 265.5h0M983 467.5h0M1074.5 425.5h0M1339 423h0M945 437h0M1085 405.5h0M1049.5 355h0M1295.5 439h0M1059.5 397.5h0M1018 315.5h0M1146.5 408.5h0M1051.5 399.5h0M1286 269h0M950.5 420h0M1247 476.5h0M1224 318h0M1255 376.5h0M1086 254.5h0M1048.5 215h0M1224 346h0M1042 375.5h0M1183 480.5h0M981 362.5h0M874 346h0M1155.5 499h0M1176.5 210h0M1007.5 313.5h0M1083.5 504.5h0M1008.5 296.5h0M1231 236h0M1291 247.5h0M932 296h0M1018 384.5h0M936 323.5h0M1036.5 318h0M1089.5 335h0M1128 206h0M970.5 225.5h0M1197 465h0M921.5 296h0M1074.5 402.5h0M1143 284.5h0M1241.5 208h0M1176.5 366h0M1145 371.5h0M1149 423.5h0M1246 399h0M1223 201.5h0M937.5 247.5h0M1297.5 280h0M1269 208h0M971 467.5h0M1202 360h0M1038 294h0M1121.5 234h0M1105 475.5h0M1209 451.5h0M1262.5 253.5h0M1197.5 455.5h0M1283 426h0M1307 357h0M1094 426.5h0M1087 411.5h0M1003 230.5h0M964 455.5h0M916.5 395h0M962.5 414h0M1299.5 384h0M1176 414.5h0M1257 470.5h0M1345 348.5h0M1298 450h0M973 215h0M937 432.5h0M1078 399.5h0M1067 420h0M1038 250.5h0M1082 395.5h0M1264.5 394.5h0M1212 384.5h0M1253 318.5h0M1057.5 200.5h0M1306.5 288h0M1269.5 354h0M1174.5 399h0M957.5 424h0M1082 401h0M1242.5 272.5h0M1160.5 372.5h0M1045.5 289.5h0M1045.5 350h0M900 367h0M1320 273.5h0M1084 376h0M1283 476h0M940.5 311.5h0M989.5 363h0M1077.5 325h0M918 358.5h0M1245.5 477h0M1065.5 315h0M1042.5 498h0M883.5 377.5h0M1351 383h0M1344 370.5h0M1168 341.5h0M1066.5 470.5h0M1281.5 498h0M1159 326.5h0M1150.5 215h0M1119.5 266h0M1228 481.5h0M1051.5 487h0M1283 495.5h0M1036.5 419.5h0M1318.5 329.5h0M903.5 418.5h0M950 232h0M915 398h0M1163.5 385.5h0M1228.5 202h0M1084.5 495h0M1103 280h0M1168.5 335h0M976.5 227h0M1131.5 299.5h0M870.5 377.5h0M1010 205h0M1034.5 308.5h0M1055.5 279h0M1274.5 262h0M1123 230h0M1300 481h0M1095 260h0M1170.5 282h0M1277.5 309h0M957 269.5h0M1089.5 371.5h0M1040 427h0M1062.5 491h0M943 440h0M1149 250.5h0M1106.5 474h0M1083 532.5h0M1040.5 364h0M1026.5 319h0M1257 439h0M1016.5 315.5h0M979 499h0M932 466.5h0M1279 362h0M1086.5 358.5h0M1120 406h0M1254.5 358.5h0M1038 391.5h0M1041.5 217.5h0M1333 389.5h0M966 224.5h0M944 257.5h0M1069.5 481h0M998 436.5h0M1207.5 251h0M1029.5 282.5h0M930.5 300.5h0M1146 400h0M1115 390.5h0M1037.5 380.5h0M869.5 350.5h0M1000.5 379h0M1239 437.5h0M936 261h0M987.5 396h0M956.5 290.5h0M1159 374.5h0M1073 207.5h0M1147 385h0M1005.5 339h0M911.5 284.5h0M963 345h0M1329 320h0M951 406h0M1140 368h0M1131.5 397h0M1108 367.5h0M1014.5 431h0M1264 428.5h0M1085 274h0M1094 330h0M1005.5 315.5h0M999.5 407.5h0M1270 278h0M1251.5 430.5h0M1093 249.5h0M1195 207h0M873 374.5h0M1233.5 430.5h0M1143 324h0M1247 367h0M1081 234h0M1091.5 443h0M1078 353.5h0M1228.5 490.5h0M1029 313h0M1220 244h0M1260 234.5h0M1220 404.5h0M1238 285.5h0M912 373h0M1062 216h0M1037.5 203.5h0M932.5 475.5h0M1097.5 269.5h0" stroke="#2469ae" stroke-width="6.6" stroke-linecap="round" opacity="0.5"/><path d="M983 409h0M1145 406h0M1309 454.5h0M985.5 297.5h0M1190.5 472.5h0M1076.5 274h0M1063 421.5h0M1245.5 223h0M927 250.5h0M1226 432.5h0M976 258.5h0M1196.5 407h0M958 402.5h0M929.5 340h0M965.5 386.5h0M941.5 377h0M1232 420h0M1088.5 381.5h0M1295 246h0M1191.5 272.5h0M1350.5 346.5h0M1144.5 408.5h0M1150 476h0M1261 465.5h0M1000 303.5h0M1043.5 216.5h0M1017 486h0M1309 318h0M1237.5 220h0M1011 365.5h0M1283 471.5h0M1201.5 389h0M1104.5 281.5h0M1221 402h0M1201 492.5h0M1205 465h0M1336 413.5h0M1018.5 294h0M1219.5 320.5h0M1037 428h0M995 413h0M1074 396h0M999 381h0M929.5 305h0M914.5 367.5h0M1165.5 304.5h0M1276.5 338h0M967.5 451.5h0M956.5 409h0M1010.5 342h0M1201.5 514.5h0M1150 296h0M867.5 379h0M974 438h0M1270 400.5h0M1240.5 308h0M1055 257.5h0M1029.5 339h0M1034 369.5h0M1028.5 211.5h0M1198.5 324h0M953.5 459.5h0M1186 373h0M1306 447h0M988 228.5h0M1018 433h0M883 336.5h0M1346.5 377.5h0M892.5 340h0M1015.5 401h0M920 379.5h0M1031.5 523.5h0M1028.5 212.5h0M1192.5 451h0M944 262.5h0M1239.5 420.5h0M1157 324.5h0M1005.5 228.5h0M1159 505h0M1021 229h0M1165.5 265h0M962 386.5h0M957.5 373.5h0M1290.5 477.5h0M1228.5 511.5h0M1057.5 484h0M981.5 406h0M1070.5 332.5h0M1307.5 269.5h0M1226 454.5h0M1113.5 221.5h0M1004.5 504h0M1217 237h0M1211.5 357h0M1190.5 366.5h0M1036 406h0M1004.5 329.5h0M1042.5 327.5h0M965 272.5h0M1128.5 328h0M1125 401h0M1200 325.5h0M1064 300.5h0M1019.5 224.5h0M1309.5 428.5h0M1263 348.5h0M1155 273.5h0M1200.5 412h0M1330 415.5h0M953.5 275.5h0M1144.5 413.5h0M1221.5 211.5h0M1197.5 257h0M1298 287h0M1022.5 484h0M1018.5 275h0M1159.5 258h0M933 456.5h0M1307 441h0M1252 354.5h0M1091.5 264h0M1199 199h0M1040 486.5h0M1070 534h0M1024.5 332.5h0M1079.5 440h0M1035.5 382.5h0M1083 463.5h0M1219 227.5h0M1101 421h0M1236 315h0M1089.5 535.5h0M937 315.5h0M1130 380h0M1107.5 479h0M1198 368h0M1206 206h0M999 296.5h0M1104 530.5h0M1057 409.5h0M1234.5 314.5h0M1018 358h0M1090.5 355.5h0M1048 392.5h0M1256.5 376.5h0M1057 245h0M1144 319h0M947.5 265.5h0M960 417h0M1024 389.5h0M1207.5 396.5h0M1217 441.5h0M1218 349.5h0M1171 259.5h0M1279.5 454.5h0M1218 405.5h0M1170 364.5h0M1338 385h0M1246 277h0M1007.5 272h0M1220.5 286h0M1022.5 304h0M1264 365h0M1227.5 262.5h0M1054 410h0M1155 244h0M1045 434h0M1146 292h0M1157.5 335h0M1199.5 426.5h0M1250.5 410h0M915 441h0M883 382.5h0M1088 287h0M971.5 352h0M978 499h0M1284 479h0M1107.5 397h0M1097.5 442h0M990.5 445h0M1272 287h0M1164.5 238.5h0M966 450.5h0M1206.5 396h0M1259 426h0M943.5 307.5h0M1285 309.5h0M929 358h0M1158.5 493h0M1010.5 316.5h0M1308 259.5h0M982 256h0M1093.5 378h0M1131 345.5h0M1008.5 503h0M1234 519.5h0M1266.5 439h0M1003 454h0M944.5 374h0M1101 532h0M1047.5 358h0M1009.5 508.5h0M985 346.5h0M988.5 394h0M974.5 263h0M1143 242.5h0M1027.5 487.5h0M957.5 249.5h0M1084 260.5h0M1307.5 305h0M1019 409h0M1119 520.5h0M941 351h0M1068.5 274h0M1186 291.5h0M994.5 218.5h0M1244.5 231h0M1181 410h0M1240.5 306.5h0M928 339.5h0M1044 371h0M1023.5 304.5h0M1205.5 248.5h0M1150.5 341.5h0M1082.5 276.5h0M983.5 377h0M1105.5 529.5h0M1104.5 224.5h0M1081.5 335h0M1153 478h0M1143 441h0M928.5 277.5h0M967.5 260.5h0M1126 525h0M1059 495h0M919 340.5h0M1171 465h0M1253 322h0M1322.5 302.5h0M1341.5 365.5h0M910.5 383h0M907 372.5h0M1092 213.5h0M973 395h0M1338.5 299h0M1013.5 293h0M982 339.5h0M1200.5 439h0M907 291.5h0M919.5 441.5h0M915 366h0M1015 231h0M1052.5 468.5h0M959 362h0M915.5 440h0M1064 417h0M1347.5 362.5h0M1141 487.5h0M993.5 479.5h0M1083.5 310h0M1333.5 459h0M1246.5 281.5h0M985 256h0M1047.5 296h0M998.5 361.5h0M1086 290h0M1026 459h0M1073 280.5h0M1044 329.5h0M1090 372.5h0M998.5 510.5h0M1151.5 285h0M919 426h0M989.5 249.5h0M1027.5 416h0M921 421.5h0M962.5 273.5h0M1205.5 264h0M1201.5 226.5h0M1085.5 489h0M988 254h0M1135.5 296h0M1174 394h0M1017.5 430.5h0M1148.5 497h0M1055.5 524h0M998 209.5h0M1153 308.5h0M927 336.5h0M958.5 381h0M1168 374h0M963 424.5h0M1037 444h0M907.5 437h0M1126.5 433h0M1266.5 336h0M1206.5 484.5h0M973.5 485h0M1113 444h0M914.5 369.5h0M944.5 266.5h0M1205 257.5h0M1008.5 506h0M1127 284.5h0M902.5 317h0M1296.5 351.5h0M1127.5 193.5h0M1341.5 388.5h0M940.5 370h0M938.5 376h0M1004.5 512.5h0M875 368h0M1264 396h0M1233.5 311h0M1159.5 266h0M1089.5 406h0M963.5 374h0M1057 284.5h0M894 319h0M1221.5 228.5h0M1324 458h0M1280.5 328.5h0M1227 206.5h0M1266.5 348h0M1085.5 233.5h0M1075 463.5h0M903 357h0M1259.5 310h0M1192.5 344.5h0M1040 423.5h0M990.5 215.5h0M1042 403.5h0M1000.5 401.5h0M974 258h0M955.5 324h0M1099.5 338.5h0M1095 388.5h0M1249 516.5h0M1025 512h0M1268 454h0M1232 513.5h0M1107 430h0M1245.5 282.5h0M1296.5 375.5h0M1276.5 260.5h0M1110 346.5h0M1295 426h0M943.5 241.5h0M1100 320h0M1214 398h0M1013.5 520.5h0M923.5 389h0M952 453h0M930.5 376h0M1014 511h0M1092.5 367h0M1100.5 478h0M1039.5 487h0M1205 437h0M1326 442h0M1294 474h0M1229.5 403.5h0" stroke="#2469ae" stroke-width="6.6" stroke-linecap="round" opacity="0.5"/><circle cx="1254.5" cy="505.5" r="4.3" fill="#ff9900"/><g stroke="#444" stroke-width="1.2" fill="none"><path d="M829.6 163.2V568.3H1389.5"/><path d="M823.6 163.2H829.6M823.6 220.6H829.6M823.6 278.1H829.6M823.6 335.6H829.6M823.6 393.0H829.6M823.6 450.4H829.6M823.6 507.9H829.6M823.6 565.4H829.6M994.4 568.3V574.3M1160.4 568.3V574.3M1326.4 568.3V574.3"/></g><g font-size="14" letter-spacing="0.8" fill="#444b55"><text x="820.5" y="167.5" text-anchor="end">−27.4</text><text x="820.5" y="224.9" text-anchor="end">−27.6</text><text x="820.5" y="282.4" text-anchor="end">−27.8</text><text x="820.5" y="339.9" text-anchor="end">−28</text><text x="820.5" y="397.3" text-anchor="end">−28.2</text><text x="820.5" y="454.8" text-anchor="end">−28.4</text><text x="820.5" y="512.2" text-anchor="end">−28.6</text><text x="820.5" y="569.6" text-anchor="end">−28.8</text><text x="994.4" y="590" text-anchor="middle">53.5</text><text x="1160.4" y="590" text-anchor="middle">53</text><text x="1326.4" y="590" text-anchor="middle">52.5</text></g><text x="1110" y="618" text-anchor="middle" font-size="14" letter-spacing="0.6" fill="#444b55">coord_ra (deg)</text><text transform="translate(767 364) rotate(-90)" text-anchor="middle" font-size="14" letter-spacing="0.6" fill="#444b55">coord_dec (deg)</text></svg>
</div>
<div class="big" style="left:907.5px;top:47px">B</div>
<div class="panel" style="left:4px;top:638px;width:1475px;height:327px">
<div class="a" style="left:0;top:0;width:1473px;height:40px;background:#eef1f5;border-bottom:1px solid #c9d3df"></div>
<div class="a" style="left:3px;top:2px;width:17px;height:17px;background:#dfe8f4;border-radius:6px"></div>
<div class="a" style="left:6px;top:5px;width:11px;height:11px;background:#ff0000;border-radius:3px"></div>
<div class="a" style="left:23px;top:4px;font-size:13px;color:#2b2f35;white-space:nowrap">dp1.Object - data-int</div>
<svg class="a" style="left:144px;top:7px" width="10" height="10" viewBox="0 0 10 10"><path d="M1 1l8 8M9 1l-8 8" stroke="#50585f" stroke-width="1.3"/></svg>
<svg class="a" style="left:0;top:0" width="1472" height="40" viewBox="5 639 1472 40" font-family="Liberation Sans"><g fill="none" stroke="#2a2f36" stroke-width="2.2"><path d="M549.4 652.8v11M560.3 653l-5.5 5.3 5.5 5.3M588 653l-5.5 5.3 5.5 5.3M682.4 653l5.5 5.3-5.5 5.3M709.6 653l5.5 5.3-5.5 5.3M720.6 652.8v11"/></g><text x="644.5" y="663" font-size="12.5" fill="#4b5561" letter-spacing="-0.3">of 88</text><text x="730.5" y="663" font-size="12.5" fill="#4b5561" letter-spacing="-0.35">(1 - 100 of 8,707)</text><g fill="#2a2f36"><path d="M1200 667.4h11.2l-5.6 7.6z"/><rect x="1209.2" y="668.9" width="19.3" height="2.2"/><rect x="1217.2" y="661.5" width="2.2" height="8"/><rect x="1212" y="663.3" width="15" height="2"/></g><g fill="none" stroke="#2a2f36" stroke-width="2"><path d="M1214 654.5a4.4 4.4 0 0 0 0 8.6h3"/><path d="M1216.5 651.5l5.5-5.5 3.3 9.5-3 1.8z" stroke-width="1.8" stroke-linejoin="round"/></g><circle cx="1216.3" cy="653.8" r="1.6" fill="#eef1f5" stroke="#2a2f36" stroke-width="1.4"/><path d="M1247.8 650.8h16.4l-6.5 8v8.5h-3.4v-8.5z" fill="none" stroke="#2a2f36" stroke-width="2.2" stroke-linejoin="round"/><rect x="1254.8" y="658.5" width="3.5" height="9.4" fill="#2a2f36"/><g fill="#2a2f36"><rect x="1279" y="649.6" width="14.9" height="3.1"/><rect x="1284.8" y="649.6" width="3.3" height="17.3"/><rect x="1290.3" y="655.2" width="10.7" height="3.8"/><rect x="1293.9" y="655.2" width="3.5" height="11.7"/></g><path d="M1315.4 650.5q0-1.4 1.4-1.4h15.4l3.5 3.5v15.2q0 1.4-1.4 1.4h-17.5q-1.4 0-1.4-1.4z" fill="none" stroke="#2a2f36" stroke-width="2.4"/><rect x="1318.2" y="652.2" width="10.7" height="4" fill="#2a2f36"/><circle cx="1325.3" cy="663.1" r="3.7" fill="#2a2f36"/><rect x="1352.3" y="648.3" width="6.6" height="20" rx="1.5" fill="none" stroke="#2a2f36" stroke-width="2.2"/><circle cx="1368.6" cy="659.5" r="6.4" fill="none" stroke="#2a2f36" stroke-width="1.4"/><path d="M1368.6 655.8v7.4M1364.9 659.5h7.4" stroke="#2a2f36" stroke-width="1.5"/><circle cx="1395.3" cy="659.2" r="11" fill="none" stroke="#2a2f36" stroke-width="2.4"/><rect x="1393.9" y="652.6" width="2.8" height="2.8" fill="#2a2f36"/><rect x="1393.9" y="657.2" width="2.8" height="8.2" fill="#2a2f36"/><path d="M1438.61 656.67 L1441.72 656.83 L1441.72 660.77 L1438.61 660.93 L1437.86 662.74 L1439.95 665.06 L1437.16 667.85 L1434.84 665.76 L1433.03 666.51 L1432.87 669.62 L1428.93 669.62 L1428.77 666.51 L1426.96 665.76 L1424.64 667.85 L1421.85 665.06 L1423.94 662.74 L1423.19 660.93 L1420.08 660.77 L1420.08 656.83 L1423.19 656.67 L1423.94 654.86 L1421.85 652.54 L1424.64 649.75 L1426.96 651.84 L1428.77 651.09 L1428.93 647.98 L1432.87 647.98 L1433.03 651.09 L1434.84 651.84 L1437.16 649.75 L1439.95 652.54 L1437.86 654.86z" fill="none" stroke="#2a2f36" stroke-width="2.1" stroke-linejoin="round"/><circle cx="1430.9" cy="658.8" r="3.4" fill="none" stroke="#2a2f36" stroke-width="2.1"/><path d="M1452.8 649h8l-2.8 2.8 11.5 11.5 2.8-2.8v8h-8l2.8-2.8-11.5-11.5-2.8 2.8z" fill="#2a2f36"/></svg><div class="a" style="left:594.6px;top:6.5px;width:40px;height:26px;border:1px solid #c9d3df;border-radius:6px;background:#fafbfd"></div><div class="a" style="left:603px;top:13px;font-size:12.5px;color:#1f2329">1</div>
<div class="a" style="left:0;top:40px;width:1473px;height:81px;background:#fafbfd;border-bottom:1px solid #c9d3df"></div>
<div class="a" style="left:165px;top:40px;width:1px;height:287px;background:#c9d5e3"></div>
<div class="a" style="left:294px;top:40px;width:1px;height:287px;background:#c9d5e3"></div>
<div class="a" style="left:394px;top:40px;width:1px;height:287px;background:#c9d5e3"></div>
<div class="a" style="left:492px;top:40px;width:1px;height:287px;background:#c9d5e3"></div>
<div class="a" style="left:27px;top:40px;width:2px;height:287px;background:#c8d1dc"></div>
<div class="a" style="left:6px;top:42px;width:15px;height:15px;border:1px solid #b9c3ce;border-radius:3px;background:#fdfdfe"></div>
<svg class="a" style="left:6px;top:97px" width="14" height="14" viewBox="0 0 14 14"><path d="M0.8 1h12.4l-5 6.2v6.3h-2.4v-6.3z" fill="none" stroke="#2a2f36" stroke-width="1.6" stroke-linejoin="round"/><path d="M5.8 7h2.4v6.5h-2.4z" fill="#2a2f36"/></svg>
<div class="a" style="left:29.0px;top:42px;width:136.6px;text-align:center;font-size:12.5px;line-height:16px;color:#4b5561;white-space:nowrap"><span style="color:#1f2329">coord_dec</span><br>(deg)<br>double</div>
<div class="a" style="left:30.5px;top:91.5px;width:133.6px;height:26px;border:1px solid #c3cedb;border-radius:6px;background:#fafbfd"></div>
<div class="a" style="left:166.6px;top:42px;width:128.0px;text-align:center;font-size:12.5px;line-height:16px;color:#4b5561;white-space:nowrap"><span style="color:#1f2329">coord_ra</span><br>(deg)<br>double</div>
<div class="a" style="left:168.1px;top:91.5px;width:125.0px;height:26px;border:1px solid #c3cedb;border-radius:6px;background:#fafbfd"></div>
<div class="a" style="left:295.6px;top:42px;width:98.9px;text-align:center;font-size:12.5px;line-height:16px;color:#4b5561;white-space:nowrap"><span style="color:#1f2329">g_cModelMag</span><br>(mag)<br>float</div>
<div class="a" style="left:297.1px;top:91.5px;width:95.9px;height:26px;border:1px solid #c3cedb;border-radius:6px;background:#fafbfd"></div>
<div class="a" style="left:395.5px;top:42px;width:96.7px;text-align:center;font-size:12.5px;line-height:16px;color:#4b5561;white-space:nowrap"><span style="color:#1f2329">r_cModelMag</span><br>(mag)<br>float</div>
<div class="a" style="left:397.0px;top:91.5px;width:93.7px;height:26px;border:1px solid #c3cedb;border-radius:6px;background:#fafbfd"></div>
<div class="a" style="left:0;top:121px;width:1456px;height:20px;background:#fbdbb7"></div>
<div class="a" style="left:1456.5px;top:121px;width:1px;height:204px;background:#c9d3df"></div>
<div class="a" style="left:1461.5px;top:125.5px;width:6.5px;height:23px;background:#c5cfda;border-radius:3px"></div>
<div class="a" style="left:0;top:141px;width:493px;height:1px;background:#d9e0e8"></div>
<div class="a" style="left:6px;top:123px;width:15px;height:15px;border:1px solid #c3ccd6;border-radius:3px;background:#fdfdfe"></div>
<div class="cell" style="left:30.0px;top:124px">-28.589801921873907</div>
<div class="cell" style="left:167.6px;top:124px">52.71692295584654</div>
<div class="cell" style="left:296.6px;top:124px">21.2762</div>
<div class="cell" style="left:396.5px;top:124px">20.8833</div>
<div class="a" style="left:0;top:163px;width:493px;height:1px;background:#d9e0e8"></div>
<div class="a" style="left:6px;top:145px;width:15px;height:15px;border:1px solid #c3ccd6;border-radius:3px;background:#fdfdfe"></div>
<div class="cell" style="left:30.0px;top:146px">-28.589980150794716</div>
<div class="cell" style="left:167.6px;top:146px">52.71829196911317</div>
<div class="cell" style="left:296.6px;top:146px">21.9603</div>
<div class="cell" style="left:396.5px;top:146px">20.6563</div>
<div class="a" style="left:0;top:185px;width:493px;height:1px;background:#d9e0e8"></div>
<div class="a" style="left:6px;top:167px;width:15px;height:15px;border:1px solid #c3ccd6;border-radius:3px;background:#fdfdfe"></div>
<div class="cell" style="left:30.0px;top:168px">-28.615168079594536</div>
<div class="cell" style="left:167.6px;top:168px">52.68001791949188</div>
<div class="cell" style="left:296.6px;top:168px">21.0434</div>
<div class="cell" style="left:396.5px;top:168px">19.7318</div>
<div class="a" style="left:0;top:207px;width:493px;height:1px;background:#d9e0e8"></div>
<div class="a" style="left:6px;top:189px;width:15px;height:15px;border:1px solid #c3ccd6;border-radius:3px;background:#fdfdfe"></div>
<div class="cell" style="left:30.0px;top:190px">-28.617442271213836</div>
<div class="cell" style="left:167.6px;top:190px">52.630252208738945</div>
<div class="cell" style="left:296.6px;top:190px">18.2102</div>
<div class="cell" style="left:396.5px;top:190px">17.7021</div>
<div class="a" style="left:0;top:229px;width:493px;height:1px;background:#d9e0e8"></div>
<div class="a" style="left:6px;top:211px;width:15px;height:15px;border:1px solid #c3ccd6;border-radius:3px;background:#fdfdfe"></div>
<div class="cell" style="left:30.0px;top:212px">-28.617791783789944</div>
<div class="cell" style="left:167.6px;top:212px">52.63333534822076</div>
<div class="cell" style="left:296.6px;top:212px">19.9987</div>
<div class="cell" style="left:396.5px;top:212px">19.7076</div>
<div class="a" style="left:0;top:251px;width:493px;height:1px;background:#d9e0e8"></div>
<div class="a" style="left:6px;top:233px;width:15px;height:15px;border:1px solid #c3ccd6;border-radius:3px;background:#fdfdfe"></div>
<div class="cell" style="left:30.0px;top:234px">-28.614933096507997</div>
<div class="cell" style="left:167.6px;top:234px">52.70660037564767</div>
<div class="cell" style="left:296.6px;top:234px">21.551</div>
<div class="cell" style="left:396.5px;top:234px">20.9956</div>
<div class="a" style="left:0;top:273px;width:493px;height:1px;background:#d9e0e8"></div>
<div class="a" style="left:6px;top:255px;width:15px;height:15px;border:1px solid #c3ccd6;border-radius:3px;background:#fdfdfe"></div>
<div class="cell" style="left:30.0px;top:256px">-28.616870166440137</div>
<div class="cell" style="left:167.6px;top:256px">52.707752678471756</div>
<div class="cell" style="left:296.6px;top:256px">17.9406</div>
<div class="cell" style="left:396.5px;top:256px">17.4329</div>
<div class="a" style="left:0;top:295px;width:493px;height:1px;background:#d9e0e8"></div>
<div class="a" style="left:6px;top:277px;width:15px;height:15px;border:1px solid #c3ccd6;border-radius:3px;background:#fdfdfe"></div>
<div class="cell" style="left:30.0px;top:278px">-28.615538657068885</div>
<div class="cell" style="left:167.6px;top:278px">52.71342610201863</div>
<div class="cell" style="left:296.6px;top:278px">21.8089</div>
<div class="cell" style="left:396.5px;top:278px">21.2587</div>
<div class="a" style="left:0;top:317px;width:493px;height:1px;background:#d9e0e8"></div>
<div class="a" style="left:6px;top:299px;width:15px;height:15px;border:1px solid #c3ccd6;border-radius:3px;background:#fdfdfe"></div>
<div class="cell" style="left:30.0px;top:300px">-28.61724452820259</div>
<div class="cell" style="left:167.6px;top:300px">52.71371454188487</div>
<div class="cell" style="left:296.6px;top:300px">20.2267</div>
<div class="cell" style="left:396.5px;top:300px">19.3214</div>
<div class="a" style="left:0;top:339px;width:493px;height:1px;background:#d9e0e8"></div>
<div class="a" style="left:6px;top:321px;width:15px;height:15px;border:1px solid #c3ccd6;border-radius:3px;background:#fdfdfe"></div>
<div class="cell" style="left:30.0px;top:322px">-28.6</div>
<div class="cell" style="left:167.6px;top:322px">52.7</div>
<div class="cell" style="left:296.6px;top:322px">20.0</div>
<div class="cell" style="left:396.5px;top:322px">19.0</div>
<div class="a" style="left:0;top:321px;width:1456px;height:4px;background:linear-gradient(#fafbfd,#e4e7eb)"></div>
</div>
<div class="big" style="left:168px;top:631px">C</div>
</body></html>
